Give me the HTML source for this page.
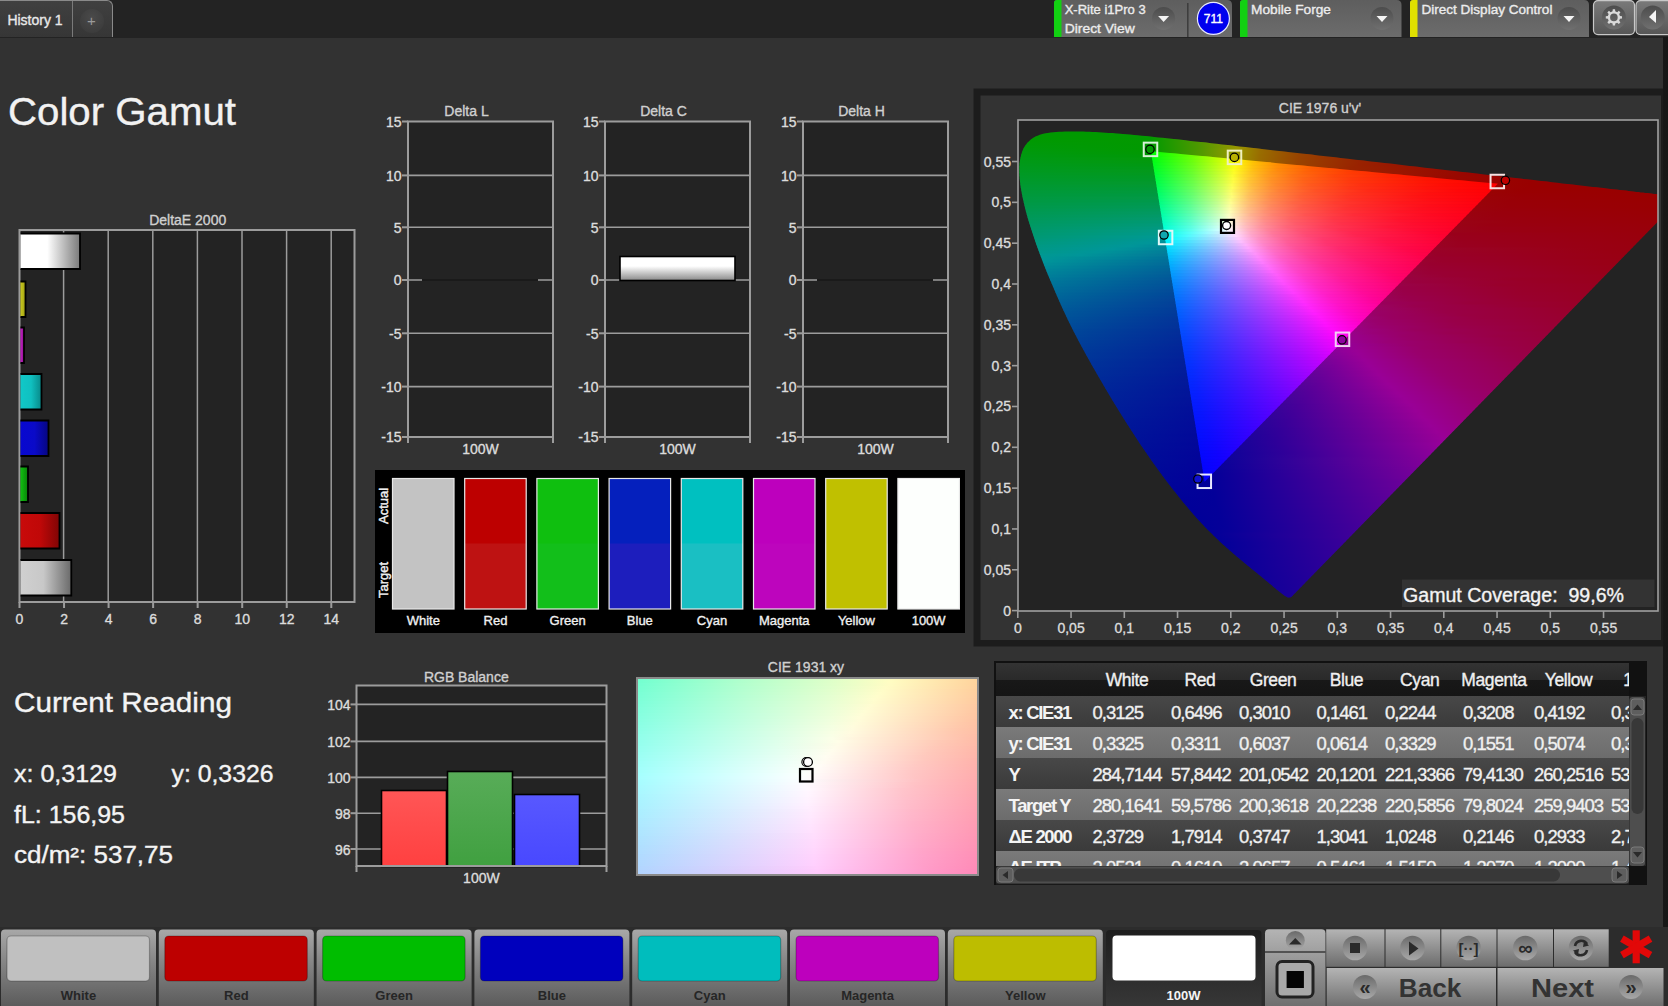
<!DOCTYPE html><html><head><meta charset="utf-8"><style>
html,body{margin:0;padding:0;}
body{width:1668px;height:1006px;overflow:hidden;background:#323232;position:relative;font-family:'Liberation Sans',sans-serif;}
.a{position:absolute;}
.t{position:absolute;white-space:nowrap;}
svg.p{position:absolute;left:0;top:0;}
svg text{font-family:'Liberation Sans',sans-serif;}
</style></head><body>
<div class="a" style="left:0;top:0;width:1668px;height:38px;background:#232323;"></div>
<div class="a" style="left:0;top:0;width:112px;height:36px;background:linear-gradient(#404040,#363636);border-top:1px solid #8a8a8a;border-right:1px solid #8a8a8a;border-radius:0 6px 0 0;"></div>
<div class="a" style="left:72px;top:1px;width:1px;height:36px;background:#7a7a7a;"></div>
<div class="a" style="left:80px;top:9px;width:24px;height:24px;border-radius:50%;background:radial-gradient(circle at 50% 35%,#4a4a4a,#383838);"></div>
<div class="a" style="left:1663px;top:37px;width:5px;height:969px;background:#1c1c1c;"></div>
<svg class="p" width="1668" height="1006"><text x="7.4" y="25.1" font-size="14" fill="#e8e8e8" text-anchor="start" font-weight="normal" stroke="#e8e8e8" stroke-width="0.35" >History 1</text>
<text x="91.5" y="26" font-size="15" fill="#9a9a9a" text-anchor="middle">+</text>
<text x="8" y="125" font-size="38" fill="#f2f2f2" text-anchor="start" font-weight="normal" stroke="#f2f2f2" stroke-width="0.35" textLength="228" lengthAdjust="spacingAndGlyphs">Color Gamut</text>
<rect x="19.5" y="230" width="335.0" height="372" fill="#232323" />
<line x1="63.6" y1="230" x2="63.6" y2="602" stroke="#9c9c9c" stroke-width="1.5" />
<line x1="108.2" y1="230" x2="108.2" y2="602" stroke="#9c9c9c" stroke-width="1.5" />
<line x1="152.8" y1="230" x2="152.8" y2="602" stroke="#9c9c9c" stroke-width="1.5" />
<line x1="197.4" y1="230" x2="197.4" y2="602" stroke="#9c9c9c" stroke-width="1.5" />
<line x1="242.0" y1="230" x2="242.0" y2="602" stroke="#9c9c9c" stroke-width="1.5" />
<line x1="286.6" y1="230" x2="286.6" y2="602" stroke="#9c9c9c" stroke-width="1.5" />
<line x1="331.2" y1="230" x2="331.2" y2="602" stroke="#9c9c9c" stroke-width="1.5" />
<rect x="19.5" y="230" width="335.0" height="372" fill="none" stroke="#9c9c9c" stroke-width="2"/>
<line x1="19.5" y1="602" x2="19.5" y2="608" stroke="#9c9c9c" stroke-width="2" />
<text x="19.5" y="624" font-size="14" fill="#dcdcdc" text-anchor="middle" font-weight="normal" stroke="#dcdcdc" stroke-width="0.35" >0</text>
<line x1="64.03999999999999" y1="602" x2="64.03999999999999" y2="608" stroke="#9c9c9c" stroke-width="2" />
<text x="64.03999999999999" y="624" font-size="14" fill="#dcdcdc" text-anchor="middle" font-weight="normal" stroke="#dcdcdc" stroke-width="0.35" >2</text>
<line x1="108.58" y1="602" x2="108.58" y2="608" stroke="#9c9c9c" stroke-width="2" />
<text x="108.58" y="624" font-size="14" fill="#dcdcdc" text-anchor="middle" font-weight="normal" stroke="#dcdcdc" stroke-width="0.35" >4</text>
<line x1="153.12" y1="602" x2="153.12" y2="608" stroke="#9c9c9c" stroke-width="2" />
<text x="153.12" y="624" font-size="14" fill="#dcdcdc" text-anchor="middle" font-weight="normal" stroke="#dcdcdc" stroke-width="0.35" >6</text>
<line x1="197.66" y1="602" x2="197.66" y2="608" stroke="#9c9c9c" stroke-width="2" />
<text x="197.66" y="624" font-size="14" fill="#dcdcdc" text-anchor="middle" font-weight="normal" stroke="#dcdcdc" stroke-width="0.35" >8</text>
<line x1="242.2" y1="602" x2="242.2" y2="608" stroke="#9c9c9c" stroke-width="2" />
<text x="242.2" y="624" font-size="14" fill="#dcdcdc" text-anchor="middle" font-weight="normal" stroke="#dcdcdc" stroke-width="0.35" >10</text>
<line x1="286.74" y1="602" x2="286.74" y2="608" stroke="#9c9c9c" stroke-width="2" />
<text x="286.74" y="624" font-size="14" fill="#dcdcdc" text-anchor="middle" font-weight="normal" stroke="#dcdcdc" stroke-width="0.35" >12</text>
<line x1="331.28" y1="602" x2="331.28" y2="608" stroke="#9c9c9c" stroke-width="2" />
<text x="331.28" y="624" font-size="14" fill="#dcdcdc" text-anchor="middle" font-weight="normal" stroke="#dcdcdc" stroke-width="0.35" >14</text>
<text x="187.7" y="225" font-size="14" fill="#d0d0d0" text-anchor="middle" font-weight="normal" stroke="#d0d0d0" stroke-width="0.35" >DeltaE 2000</text>
<defs>
<linearGradient id="gw" x1="0" x2="1" y1="0" y2="0"><stop offset="0" stop-color="#ffffff"/><stop offset="0.45" stop-color="#ffffff"/><stop offset="1" stop-color="#7a7a7a"/></linearGradient>
<linearGradient id="gg" x1="0" x2="1" y1="0" y2="0"><stop offset="0" stop-color="#d0d0d0"/><stop offset="0.45" stop-color="#c8c8c8"/><stop offset="1" stop-color="#6a6a6a"/></linearGradient>
<linearGradient id="gy" x1="0" x2="1"><stop offset="0" stop-color="#c8c820"/><stop offset="1" stop-color="#a0a010"/></linearGradient>
<linearGradient id="gm" x1="0" x2="1"><stop offset="0" stop-color="#c020c0"/><stop offset="1" stop-color="#901090"/></linearGradient>
<linearGradient id="gc" x1="0" x2="1"><stop offset="0" stop-color="#10c8c8"/><stop offset="0.5" stop-color="#10c0c0"/><stop offset="1" stop-color="#088888"/></linearGradient>
<linearGradient id="gb" x1="0" x2="1"><stop offset="0" stop-color="#0808d0"/><stop offset="0.5" stop-color="#0a0ac8"/><stop offset="1" stop-color="#060680"/></linearGradient>
<linearGradient id="ggr" x1="0" x2="1"><stop offset="0" stop-color="#10c010"/><stop offset="1" stop-color="#0a800a"/></linearGradient>
<linearGradient id="gr" x1="0" x2="1"><stop offset="0" stop-color="#c80a0a"/><stop offset="0.5" stop-color="#c00808"/><stop offset="1" stop-color="#800505"/></linearGradient>
<linearGradient id="gdc" x1="0" x2="0" y1="0" y2="1"><stop offset="0" stop-color="#ffffff"/><stop offset="0.4" stop-color="#ffffff"/><stop offset="1" stop-color="#8a8a8a"/></linearGradient>
</defs>
<rect x="20.5" y="233.5" width="59.5" height="35.5" fill="url(#gw)"/>
<path d="M20.5 233.5 L80 233.5 L80 269.0 L20.5 269.0" fill="none" stroke="#000" stroke-width="1.8"/>
<rect x="20.5" y="281.5" width="5.0" height="35.5" fill="url(#gy)"/>
<path d="M20.5 281.5 L25.5 281.5 L25.5 317.0 L20.5 317.0" fill="none" stroke="#000" stroke-width="1.8"/>
<rect x="20.5" y="327.5" width="3.5" height="35.5" fill="url(#gm)"/>
<path d="M20.5 327.5 L24 327.5 L24 363.0 L20.5 363.0" fill="none" stroke="#000" stroke-width="1.8"/>
<rect x="20.5" y="374" width="21.0" height="35.5" fill="url(#gc)"/>
<path d="M20.5 374 L41.5 374 L41.5 409.5 L20.5 409.5" fill="none" stroke="#000" stroke-width="1.8"/>
<rect x="20.5" y="420.5" width="28.0" height="35.5" fill="url(#gb)"/>
<path d="M20.5 420.5 L48.5 420.5 L48.5 456.0 L20.5 456.0" fill="none" stroke="#000" stroke-width="1.8"/>
<rect x="20.5" y="466.5" width="7.5" height="35.5" fill="url(#ggr)"/>
<path d="M20.5 466.5 L28 466.5 L28 502.0 L20.5 502.0" fill="none" stroke="#000" stroke-width="1.8"/>
<rect x="20.5" y="513" width="39.0" height="35.5" fill="url(#gr)"/>
<path d="M20.5 513 L59.5 513 L59.5 548.5 L20.5 548.5" fill="none" stroke="#000" stroke-width="1.8"/>
<rect x="20.5" y="560" width="50.8" height="35.5" fill="url(#gg)"/>
<path d="M20.5 560 L71.3 560 L71.3 595.5 L20.5 595.5" fill="none" stroke="#000" stroke-width="1.8"/>
<rect x="408" y="121.5" width="145" height="315.5" fill="#232323" />
<line x1="402" y1="121.5" x2="408" y2="121.5" stroke="#9c9c9c" stroke-width="2" />
<text x="401.5" y="126.8" font-size="14" fill="#dcdcdc" text-anchor="end" font-weight="normal" stroke="#dcdcdc" stroke-width="0.35" >15</text>
<line x1="408" y1="175.4" x2="553" y2="175.4" stroke="#9c9c9c" stroke-width="1.6" />
<line x1="402" y1="175.4" x2="408" y2="175.4" stroke="#9c9c9c" stroke-width="2" />
<text x="401.5" y="180.70000000000002" font-size="14" fill="#dcdcdc" text-anchor="end" font-weight="normal" stroke="#dcdcdc" stroke-width="0.35" >10</text>
<line x1="408" y1="227.3" x2="553" y2="227.3" stroke="#9c9c9c" stroke-width="1.6" />
<line x1="402" y1="227.3" x2="408" y2="227.3" stroke="#9c9c9c" stroke-width="2" />
<text x="401.5" y="232.60000000000002" font-size="14" fill="#dcdcdc" text-anchor="end" font-weight="normal" stroke="#dcdcdc" stroke-width="0.35" >5</text>
<line x1="408" y1="280.0" x2="553" y2="280.0" stroke="#9c9c9c" stroke-width="1.6" />
<line x1="402" y1="280.0" x2="408" y2="280.0" stroke="#9c9c9c" stroke-width="2" />
<text x="401.5" y="285.3" font-size="14" fill="#dcdcdc" text-anchor="end" font-weight="normal" stroke="#dcdcdc" stroke-width="0.35" >0</text>
<line x1="408" y1="333.3" x2="553" y2="333.3" stroke="#9c9c9c" stroke-width="1.6" />
<line x1="402" y1="333.3" x2="408" y2="333.3" stroke="#9c9c9c" stroke-width="2" />
<text x="401.5" y="338.6" font-size="14" fill="#dcdcdc" text-anchor="end" font-weight="normal" stroke="#dcdcdc" stroke-width="0.35" >-5</text>
<line x1="408" y1="386.6" x2="553" y2="386.6" stroke="#9c9c9c" stroke-width="1.6" />
<line x1="402" y1="386.6" x2="408" y2="386.6" stroke="#9c9c9c" stroke-width="2" />
<text x="401.5" y="391.90000000000003" font-size="14" fill="#dcdcdc" text-anchor="end" font-weight="normal" stroke="#dcdcdc" stroke-width="0.35" >-10</text>
<line x1="402" y1="437" x2="408" y2="437" stroke="#9c9c9c" stroke-width="2" />
<text x="401.5" y="442.3" font-size="14" fill="#dcdcdc" text-anchor="end" font-weight="normal" stroke="#dcdcdc" stroke-width="0.35" >-15</text>
<rect x="408" y="121.5" width="145" height="315.5" fill="none" stroke="#9c9c9c" stroke-width="2"/>
<line x1="408" y1="437" x2="408" y2="443" stroke="#9c9c9c" stroke-width="2" />
<line x1="553" y1="437" x2="553" y2="443" stroke="#9c9c9c" stroke-width="2" />
<text x="480.5" y="454" font-size="14" fill="#dcdcdc" text-anchor="middle" font-weight="normal" stroke="#dcdcdc" stroke-width="0.35" >100W</text>
<text x="466.5" y="116" font-size="14" fill="#d0d0d0" text-anchor="middle" font-weight="normal" stroke="#d0d0d0" stroke-width="0.35" >Delta L</text>
<line x1="422" y1="280.0" x2="538" y2="280.0" stroke="#1a1a1a" stroke-width="2" />
<rect x="605" y="121.5" width="145" height="315.5" fill="#232323" />
<line x1="599" y1="121.5" x2="605" y2="121.5" stroke="#9c9c9c" stroke-width="2" />
<text x="598.5" y="126.8" font-size="14" fill="#dcdcdc" text-anchor="end" font-weight="normal" stroke="#dcdcdc" stroke-width="0.35" >15</text>
<line x1="605" y1="175.4" x2="750" y2="175.4" stroke="#9c9c9c" stroke-width="1.6" />
<line x1="599" y1="175.4" x2="605" y2="175.4" stroke="#9c9c9c" stroke-width="2" />
<text x="598.5" y="180.70000000000002" font-size="14" fill="#dcdcdc" text-anchor="end" font-weight="normal" stroke="#dcdcdc" stroke-width="0.35" >10</text>
<line x1="605" y1="227.3" x2="750" y2="227.3" stroke="#9c9c9c" stroke-width="1.6" />
<line x1="599" y1="227.3" x2="605" y2="227.3" stroke="#9c9c9c" stroke-width="2" />
<text x="598.5" y="232.60000000000002" font-size="14" fill="#dcdcdc" text-anchor="end" font-weight="normal" stroke="#dcdcdc" stroke-width="0.35" >5</text>
<line x1="605" y1="280.0" x2="750" y2="280.0" stroke="#9c9c9c" stroke-width="1.6" />
<line x1="599" y1="280.0" x2="605" y2="280.0" stroke="#9c9c9c" stroke-width="2" />
<text x="598.5" y="285.3" font-size="14" fill="#dcdcdc" text-anchor="end" font-weight="normal" stroke="#dcdcdc" stroke-width="0.35" >0</text>
<line x1="605" y1="333.3" x2="750" y2="333.3" stroke="#9c9c9c" stroke-width="1.6" />
<line x1="599" y1="333.3" x2="605" y2="333.3" stroke="#9c9c9c" stroke-width="2" />
<text x="598.5" y="338.6" font-size="14" fill="#dcdcdc" text-anchor="end" font-weight="normal" stroke="#dcdcdc" stroke-width="0.35" >-5</text>
<line x1="605" y1="386.6" x2="750" y2="386.6" stroke="#9c9c9c" stroke-width="1.6" />
<line x1="599" y1="386.6" x2="605" y2="386.6" stroke="#9c9c9c" stroke-width="2" />
<text x="598.5" y="391.90000000000003" font-size="14" fill="#dcdcdc" text-anchor="end" font-weight="normal" stroke="#dcdcdc" stroke-width="0.35" >-10</text>
<line x1="599" y1="437" x2="605" y2="437" stroke="#9c9c9c" stroke-width="2" />
<text x="598.5" y="442.3" font-size="14" fill="#dcdcdc" text-anchor="end" font-weight="normal" stroke="#dcdcdc" stroke-width="0.35" >-15</text>
<rect x="605" y="121.5" width="145" height="315.5" fill="none" stroke="#9c9c9c" stroke-width="2"/>
<line x1="605" y1="437" x2="605" y2="443" stroke="#9c9c9c" stroke-width="2" />
<line x1="750" y1="437" x2="750" y2="443" stroke="#9c9c9c" stroke-width="2" />
<text x="677.5" y="454" font-size="14" fill="#dcdcdc" text-anchor="middle" font-weight="normal" stroke="#dcdcdc" stroke-width="0.35" >100W</text>
<text x="663.5" y="116" font-size="14" fill="#d0d0d0" text-anchor="middle" font-weight="normal" stroke="#d0d0d0" stroke-width="0.35" >Delta C</text>
<rect x="620" y="256.5" width="115" height="24" fill="url(#gdc)" stroke="#000" stroke-width="1.6"/>
<rect x="803" y="121.5" width="145" height="315.5" fill="#232323" />
<line x1="797" y1="121.5" x2="803" y2="121.5" stroke="#9c9c9c" stroke-width="2" />
<text x="796.5" y="126.8" font-size="14" fill="#dcdcdc" text-anchor="end" font-weight="normal" stroke="#dcdcdc" stroke-width="0.35" >15</text>
<line x1="803" y1="175.4" x2="948" y2="175.4" stroke="#9c9c9c" stroke-width="1.6" />
<line x1="797" y1="175.4" x2="803" y2="175.4" stroke="#9c9c9c" stroke-width="2" />
<text x="796.5" y="180.70000000000002" font-size="14" fill="#dcdcdc" text-anchor="end" font-weight="normal" stroke="#dcdcdc" stroke-width="0.35" >10</text>
<line x1="803" y1="227.3" x2="948" y2="227.3" stroke="#9c9c9c" stroke-width="1.6" />
<line x1="797" y1="227.3" x2="803" y2="227.3" stroke="#9c9c9c" stroke-width="2" />
<text x="796.5" y="232.60000000000002" font-size="14" fill="#dcdcdc" text-anchor="end" font-weight="normal" stroke="#dcdcdc" stroke-width="0.35" >5</text>
<line x1="803" y1="280.0" x2="948" y2="280.0" stroke="#9c9c9c" stroke-width="1.6" />
<line x1="797" y1="280.0" x2="803" y2="280.0" stroke="#9c9c9c" stroke-width="2" />
<text x="796.5" y="285.3" font-size="14" fill="#dcdcdc" text-anchor="end" font-weight="normal" stroke="#dcdcdc" stroke-width="0.35" >0</text>
<line x1="803" y1="333.3" x2="948" y2="333.3" stroke="#9c9c9c" stroke-width="1.6" />
<line x1="797" y1="333.3" x2="803" y2="333.3" stroke="#9c9c9c" stroke-width="2" />
<text x="796.5" y="338.6" font-size="14" fill="#dcdcdc" text-anchor="end" font-weight="normal" stroke="#dcdcdc" stroke-width="0.35" >-5</text>
<line x1="803" y1="386.6" x2="948" y2="386.6" stroke="#9c9c9c" stroke-width="1.6" />
<line x1="797" y1="386.6" x2="803" y2="386.6" stroke="#9c9c9c" stroke-width="2" />
<text x="796.5" y="391.90000000000003" font-size="14" fill="#dcdcdc" text-anchor="end" font-weight="normal" stroke="#dcdcdc" stroke-width="0.35" >-10</text>
<line x1="797" y1="437" x2="803" y2="437" stroke="#9c9c9c" stroke-width="2" />
<text x="796.5" y="442.3" font-size="14" fill="#dcdcdc" text-anchor="end" font-weight="normal" stroke="#dcdcdc" stroke-width="0.35" >-15</text>
<rect x="803" y="121.5" width="145" height="315.5" fill="none" stroke="#9c9c9c" stroke-width="2"/>
<line x1="803" y1="437" x2="803" y2="443" stroke="#9c9c9c" stroke-width="2" />
<line x1="948" y1="437" x2="948" y2="443" stroke="#9c9c9c" stroke-width="2" />
<text x="875.5" y="454" font-size="14" fill="#dcdcdc" text-anchor="middle" font-weight="normal" stroke="#dcdcdc" stroke-width="0.35" >100W</text>
<text x="861.5" y="116" font-size="14" fill="#d0d0d0" text-anchor="middle" font-weight="normal" stroke="#d0d0d0" stroke-width="0.35" >Delta H</text>
<line x1="817" y1="280.0" x2="933" y2="280.0" stroke="#1a1a1a" stroke-width="2" />
<rect x="375" y="470" width="590" height="163" fill="#000000" />
<rect x="392.5" y="478.5" width="61.5" height="130.5" fill="#c3c3c3" />
<rect x="392.5" y="543.5" width="61.5" height="65.5" fill="#c3c3c3" />
<rect x="392.5" y="478.5" width="61.5" height="130.5" fill="none" stroke="#e8e8e8" stroke-width="1.2"/>
<text x="423.25" y="625" font-size="13" fill="#f0f0f0" text-anchor="middle" font-weight="normal" stroke="#f0f0f0" stroke-width="0.35" >White</text>
<rect x="464.7" y="478.5" width="61.5" height="130.5" fill="#bd0000" />
<rect x="464.7" y="543.5" width="61.5" height="65.5" fill="#be1212" />
<rect x="464.7" y="478.5" width="61.5" height="130.5" fill="none" stroke="#e8e8e8" stroke-width="1.2"/>
<text x="495.45" y="625" font-size="13" fill="#f0f0f0" text-anchor="middle" font-weight="normal" stroke="#f0f0f0" stroke-width="0.35" >Red</text>
<rect x="536.9" y="478.5" width="61.5" height="130.5" fill="#0fbf0f" />
<rect x="536.9" y="543.5" width="61.5" height="65.5" fill="#12bf1a" />
<rect x="536.9" y="478.5" width="61.5" height="130.5" fill="none" stroke="#e8e8e8" stroke-width="1.2"/>
<text x="567.65" y="625" font-size="13" fill="#f0f0f0" text-anchor="middle" font-weight="normal" stroke="#f0f0f0" stroke-width="0.35" >Green</text>
<rect x="609.1" y="478.5" width="61.5" height="130.5" fill="#0520bd" />
<rect x="609.1" y="543.5" width="61.5" height="65.5" fill="#1d1ebd" />
<rect x="609.1" y="478.5" width="61.5" height="130.5" fill="none" stroke="#e8e8e8" stroke-width="1.2"/>
<text x="639.85" y="625" font-size="13" fill="#f0f0f0" text-anchor="middle" font-weight="normal" stroke="#f0f0f0" stroke-width="0.35" >Blue</text>
<rect x="681.3" y="478.5" width="61.5" height="130.5" fill="#00c0c0" />
<rect x="681.3" y="543.5" width="61.5" height="65.5" fill="#1abfc3" />
<rect x="681.3" y="478.5" width="61.5" height="130.5" fill="none" stroke="#e8e8e8" stroke-width="1.2"/>
<text x="712.05" y="625" font-size="13" fill="#f0f0f0" text-anchor="middle" font-weight="normal" stroke="#f0f0f0" stroke-width="0.35" >Cyan</text>
<rect x="753.5" y="478.5" width="61.5" height="130.5" fill="#bd00bd" />
<rect x="753.5" y="543.5" width="61.5" height="65.5" fill="#bd05bd" />
<rect x="753.5" y="478.5" width="61.5" height="130.5" fill="none" stroke="#e8e8e8" stroke-width="1.2"/>
<text x="784.25" y="625" font-size="13" fill="#f0f0f0" text-anchor="middle" font-weight="normal" stroke="#f0f0f0" stroke-width="0.35" >Magenta</text>
<rect x="825.7" y="478.5" width="61.5" height="130.5" fill="#c0c000" />
<rect x="825.7" y="543.5" width="61.5" height="65.5" fill="#c0c000" />
<rect x="825.7" y="478.5" width="61.5" height="130.5" fill="none" stroke="#e8e8e8" stroke-width="1.2"/>
<text x="856.45" y="625" font-size="13" fill="#f0f0f0" text-anchor="middle" font-weight="normal" stroke="#f0f0f0" stroke-width="0.35" >Yellow</text>
<rect x="897.9000000000001" y="478.5" width="61.5" height="130.5" fill="#fdfffd" />
<rect x="897.9000000000001" y="543.5" width="61.5" height="65.5" fill="#fdfffd" />
<rect x="897.9000000000001" y="478.5" width="61.5" height="130.5" fill="none" stroke="#e8e8e8" stroke-width="1.2"/>
<text x="928.6500000000001" y="625" font-size="13" fill="#f0f0f0" text-anchor="middle" font-weight="normal" stroke="#f0f0f0" stroke-width="0.35" >100W</text>
<text transform="translate(388,524) rotate(-90)" font-size="13" fill="#f0f0f0" stroke="#f0f0f0" stroke-width="0.4">Actual</text>
<text transform="translate(388,598) rotate(-90)" font-size="13" fill="#f0f0f0" stroke="#f0f0f0" stroke-width="0.4">Target</text>
<rect x="973.5" y="88.5" width="694.5" height="558" fill="#1c1c1c" />
<rect x="980.5" y="95.5" width="680.5" height="544.5" fill="#333333" />
<rect x="1018" y="120" width="640" height="491" fill="#232323" />
<defs><clipPath id="cpl"><path d="M1291.3,597.1 L1291.3,597.0 L1291.2,597.0 L1291.2,597.0 L1291.2,597.0 L1291.1,597.1 L1291.1,597.1 L1291.0,597.2 L1291.0,597.2 L1290.9,597.3 L1290.9,597.3 L1290.8,597.3 L1290.8,597.3 L1290.7,597.3 L1290.6,597.3 L1290.5,597.3 L1290.5,597.4 L1290.4,597.4 L1290.3,597.5 L1290.2,597.5 L1290.1,597.6 L1290.0,597.6 L1289.9,597.6 L1289.8,597.6 L1289.7,597.6 L1289.6,597.6 L1289.5,597.6 L1289.3,597.6 L1289.2,597.6 L1289.0,597.6 L1288.9,597.6 L1288.7,597.6 L1288.6,597.6 L1288.4,597.7 L1288.2,597.7 L1288.0,597.6 L1287.7,597.5 L1287.5,597.4 L1287.2,597.2 L1286.8,597.1 L1286.4,596.8 L1285.9,596.5 L1285.4,596.2 L1284.9,595.8 L1284.3,595.4 L1283.6,595.0 L1283.0,594.5 L1282.3,594.0 L1281.6,593.4 L1280.8,592.8 L1279.9,592.1 L1279.0,591.4 L1278.0,590.6 L1276.9,589.7 L1275.7,588.8 L1274.5,587.8 L1273.3,586.7 L1272.0,585.6 L1270.7,584.5 L1269.2,583.3 L1267.7,582.0 L1266.2,580.7 L1264.6,579.4 L1262.9,578.0 L1261.1,576.5 L1259.2,574.9 L1257.1,573.3 L1255.0,571.5 L1252.7,569.7 L1250.3,567.7 L1247.9,565.7 L1245.4,563.7 L1242.8,561.5 L1240.1,559.3 L1237.3,557.0 L1234.4,554.4 L1231.3,551.8 L1228.1,549.0 L1224.8,546.0 L1221.3,542.9 L1217.7,539.5 L1214.0,535.9 L1210.3,532.3 L1206.4,528.4 L1202.2,524.1 L1197.7,519.2 L1192.9,513.8 L1187.8,507.8 L1182.5,501.5 L1177.0,494.6 L1171.2,487.3 L1165.3,479.5 L1159.2,471.2 L1152.9,462.5 L1146.5,453.3 L1139.9,443.7 L1133.3,433.6 L1126.5,423.0 L1119.6,412.0 L1112.7,400.8 L1106.0,389.5 L1099.3,378.0 L1092.5,366.2 L1085.8,354.3 L1079.4,342.5 L1073.3,330.8 L1067.6,319.2 L1062.2,307.7 L1057.1,296.2 L1052.3,285.1 L1047.8,274.5 L1043.7,264.2 L1039.9,254.2 L1036.4,244.7 L1033.3,235.5 L1030.5,227.0 L1028.0,219.0 L1025.9,211.5 L1024.2,204.4 L1022.7,197.9 L1021.5,191.7 L1020.5,186.0 L1019.9,180.7 L1019.5,175.9 L1019.3,171.4 L1019.3,167.1 L1019.6,163.1 L1020.1,159.5 L1020.8,156.2 L1021.7,153.1 L1022.7,150.2 L1024.0,147.6 L1025.5,145.2 L1027.2,143.1 L1029.0,141.2 L1030.9,139.5 L1032.9,138.0 L1035.1,136.8 L1037.5,135.7 L1039.9,134.8 L1042.4,134.0 L1045.0,133.4 L1047.7,132.9 L1050.5,132.5 L1053.3,132.3 L1056.1,132.0 L1059.1,131.8 L1062.0,131.7 L1065.1,131.6 L1068.1,131.5 L1071.1,131.5 L1074.1,131.5 L1077.1,131.5 L1080.2,131.6 L1083.2,131.6 L1086.3,131.7 L1089.4,131.8 L1092.6,131.9 L1095.7,132.1 L1098.9,132.3 L1102.2,132.4 L1105.5,132.7 L1108.8,132.9 L1112.3,133.1 L1115.7,133.4 L1119.3,133.7 L1122.9,134.0 L1126.5,134.3 L1130.2,134.6 L1134.0,135.0 L1137.8,135.3 L1141.8,135.7 L1145.7,136.1 L1149.8,136.5 L1154.0,137.0 L1158.2,137.4 L1162.6,137.8 L1167.0,138.3 L1171.5,138.8 L1176.1,139.3 L1180.9,139.8 L1185.7,140.3 L1190.6,140.9 L1195.6,141.4 L1200.7,142.0 L1205.9,142.6 L1211.2,143.2 L1216.6,143.8 L1222.2,144.4 L1227.8,145.1 L1233.6,145.7 L1239.4,146.4 L1245.4,147.1 L1251.5,147.8 L1257.7,148.5 L1264.0,149.2 L1270.4,149.9 L1277.0,150.7 L1283.6,151.4 L1290.3,152.2 L1297.2,153.0 L1304.2,153.8 L1311.2,154.6 L1318.4,155.4 L1325.7,156.3 L1333.0,157.1 L1340.4,158.0 L1347.9,158.8 L1355.6,159.7 L1363.2,160.6 L1370.9,161.4 L1378.6,162.3 L1386.4,163.2 L1394.3,164.1 L1402.1,165.0 L1409.8,165.9 L1417.4,166.8 L1425.0,167.7 L1432.5,168.5 L1440.0,169.4 L1447.5,170.2 L1455.0,171.1 L1462.4,171.9 L1469.8,172.8 L1477.1,173.6 L1484.2,174.4 L1491.1,175.2 L1497.9,176.0 L1504.6,176.8 L1511.1,177.5 L1517.5,178.2 L1523.7,178.9 L1529.7,179.6 L1535.6,180.3 L1541.3,181.0 L1546.9,181.6 L1552.2,182.2 L1557.4,182.8 L1562.4,183.4 L1567.2,183.9 L1571.9,184.5 L1576.4,185.0 L1580.7,185.5 L1584.9,186.0 L1588.9,186.4 L1592.8,186.9 L1596.6,187.3 L1600.2,187.7 L1603.7,188.1 L1607.1,188.5 L1610.5,188.9 L1613.7,189.3 L1616.9,189.6 L1619.9,190.0 L1622.9,190.3 L1625.8,190.6 L1628.6,191.0 L1631.3,191.3 L1633.8,191.6 L1636.3,191.9 L1638.7,192.1 L1641.0,192.4 L1643.2,192.6 L1645.3,192.9 L1647.3,193.1 L1649.2,193.3 L1650.9,193.5 L1652.5,193.7 L1654.0,193.9 L1655.6,194.0 L1657.3,194.2 L1659.4,194.5 L1661.6,194.7 L1663.9,195.0 L1666.2,195.3 L1668.4,195.5 L1670.5,195.8 L1672.6,196.0 L1674.6,196.2 L1676.5,196.4 L1678.0,196.6 L1679.2,196.8 L1680.1,196.9 L1680.8,196.9 L1681.3,197.0 L1681.7,197.1 Z"/></clipPath><clipPath id="cpt"><path d="M1497.80,183.65 L1150.92,151.32 L1204.60,481.67 Z"/></clipPath><clipPath id="cpb"><rect x="1018" y="120" width="640" height="491"/></clipPath><linearGradient id="o0" gradientUnits="userSpaceOnUse" x1="1038.6" x2="1127.2" y1="0" y2="0"><stop offset="0.000" stop-color="#009900"/><stop offset="1.000" stop-color="#009900"/></linearGradient><linearGradient id="o1" gradientUnits="userSpaceOnUse" x1="1030.7" x2="1158.4" y1="0" y2="0"><stop offset="0.000" stop-color="#009900"/><stop offset="0.924" stop-color="#019900"/><stop offset="1.000" stop-color="#0e9900"/></linearGradient><linearGradient id="o2" gradientUnits="userSpaceOnUse" x1="1026.3" x2="1186.6" y1="0" y2="0"><stop offset="0.000" stop-color="#009900"/><stop offset="0.774" stop-color="#029900"/><stop offset="1.000" stop-color="#389900"/></linearGradient><linearGradient id="o3" gradientUnits="userSpaceOnUse" x1="1023.3" x2="1213.5" y1="0" y2="0"><stop offset="0.000" stop-color="#009902"/><stop offset="0.673" stop-color="#039900"/><stop offset="0.946" stop-color="#559900"/><stop offset="1.000" stop-color="#689900"/></linearGradient><linearGradient id="o4" gradientUnits="userSpaceOnUse" x1="1021.0" x2="1240.1" y1="0" y2="0"><stop offset="0.000" stop-color="#009905"/><stop offset="0.593" stop-color="#029900"/><stop offset="0.831" stop-color="#559900"/><stop offset="0.986" stop-color="#999800"/><stop offset="1.000" stop-color="#999100"/></linearGradient><linearGradient id="o5" gradientUnits="userSpaceOnUse" x1="1019.3" x2="1266.3" y1="0" y2="0"><stop offset="0.000" stop-color="#009908"/><stop offset="0.534" stop-color="#029900"/><stop offset="0.737" stop-color="#519900"/><stop offset="0.883" stop-color="#999600"/><stop offset="0.988" stop-color="#996a00"/><stop offset="1.000" stop-color="#996600"/></linearGradient><linearGradient id="o6" gradientUnits="userSpaceOnUse" x1="1018.1" x2="1292.5" y1="0" y2="0"><stop offset="0.000" stop-color="#00990b"/><stop offset="0.488" stop-color="#029900"/><stop offset="0.671" stop-color="#539900"/><stop offset="0.794" stop-color="#999900"/><stop offset="0.882" stop-color="#996d00"/><stop offset="1.000" stop-color="#994a00"/></linearGradient><linearGradient id="o7" gradientUnits="userSpaceOnUse" x1="1018.0" x2="1318.6" y1="0" y2="0"><stop offset="0.000" stop-color="#00990e"/><stop offset="0.446" stop-color="#019902"/><stop offset="0.612" stop-color="#539900"/><stop offset="0.725" stop-color="#999800"/><stop offset="0.805" stop-color="#996d00"/><stop offset="0.931" stop-color="#994500"/><stop offset="1.000" stop-color="#993700"/></linearGradient><linearGradient id="o8" gradientUnits="userSpaceOnUse" x1="1018.0" x2="1344.8" y1="0" y2="0"><stop offset="0.000" stop-color="#009911"/><stop offset="0.410" stop-color="#009906"/><stop offset="0.563" stop-color="#539900"/><stop offset="0.667" stop-color="#999700"/><stop offset="0.740" stop-color="#996c00"/><stop offset="0.857" stop-color="#994500"/><stop offset="1.000" stop-color="#992900"/></linearGradient><linearGradient id="o9" gradientUnits="userSpaceOnUse" x1="1018.0" x2="1371.1" y1="0" y2="0"><stop offset="0.000" stop-color="#009914"/><stop offset="0.385" stop-color="#03990a"/><stop offset="0.521" stop-color="#539905"/><stop offset="0.617" stop-color="#999700"/><stop offset="0.685" stop-color="#996b00"/><stop offset="0.793" stop-color="#994400"/><stop offset="0.969" stop-color="#992200"/><stop offset="1.000" stop-color="#991e00"/></linearGradient><linearGradient id="o10" gradientUnits="userSpaceOnUse" x1="1018.0" x2="1397.2" y1="0" y2="0"><stop offset="0.000" stop-color="#009917"/><stop offset="0.359" stop-color="#02990e"/><stop offset="0.485" stop-color="#529909"/><stop offset="0.575" stop-color="#999605"/><stop offset="0.638" stop-color="#996b01"/><stop offset="0.738" stop-color="#994300"/><stop offset="0.902" stop-color="#992200"/><stop offset="1.000" stop-color="#991600"/></linearGradient><linearGradient id="o11" gradientUnits="userSpaceOnUse" x1="1018.0" x2="1423.3" y1="0" y2="0"><stop offset="0.000" stop-color="#00991a"/><stop offset="0.336" stop-color="#019912"/><stop offset="0.454" stop-color="#52990e"/><stop offset="0.533" stop-color="#98990a"/><stop offset="0.597" stop-color="#996a05"/><stop offset="0.691" stop-color="#994300"/><stop offset="0.844" stop-color="#992100"/><stop offset="1.000" stop-color="#990f00"/></linearGradient><linearGradient id="o12" gradientUnits="userSpaceOnUse" x1="1018.0" x2="1449.5" y1="0" y2="0"><stop offset="0.000" stop-color="#00991d"/><stop offset="0.315" stop-color="#019917"/><stop offset="0.426" stop-color="#529913"/><stop offset="0.501" stop-color="#999910"/><stop offset="0.556" stop-color="#996c09"/><stop offset="0.640" stop-color="#994503"/><stop offset="0.774" stop-color="#992400"/><stop offset="1.000" stop-color="#990a00"/></linearGradient><linearGradient id="o13" gradientUnits="userSpaceOnUse" x1="1018.0" x2="1475.6" y1="0" y2="0"><stop offset="0.000" stop-color="#009920"/><stop offset="0.302" stop-color="#03991b"/><stop offset="0.402" stop-color="#529918"/><stop offset="0.472" stop-color="#999915"/><stop offset="0.524" stop-color="#996b0d"/><stop offset="0.603" stop-color="#994406"/><stop offset="0.730" stop-color="#992301"/><stop offset="0.961" stop-color="#990800"/><stop offset="1.000" stop-color="#990500"/></linearGradient><linearGradient id="o14" gradientUnits="userSpaceOnUse" x1="1018.0" x2="1502.0" y1="0" y2="0"><stop offset="0.000" stop-color="#009924"/><stop offset="0.285" stop-color="#02991f"/><stop offset="0.380" stop-color="#52991d"/><stop offset="0.446" stop-color="#99981b"/><stop offset="0.496" stop-color="#996a12"/><stop offset="0.570" stop-color="#99440a"/><stop offset="0.694" stop-color="#992203"/><stop offset="0.917" stop-color="#990700"/><stop offset="1.000" stop-color="#990100"/></linearGradient><linearGradient id="o15" gradientUnits="userSpaceOnUse" x1="1018.0" x2="1528.3" y1="0" y2="0"><stop offset="0.000" stop-color="#009927"/><stop offset="0.270" stop-color="#019924"/><stop offset="0.361" stop-color="#529922"/><stop offset="0.423" stop-color="#999720"/><stop offset="0.466" stop-color="#996d17"/><stop offset="0.533" stop-color="#99460d"/><stop offset="0.643" stop-color="#992506"/><stop offset="0.843" stop-color="#990900"/><stop offset="1.000" stop-color="#990000"/></linearGradient><linearGradient id="o16" gradientUnits="userSpaceOnUse" x1="1018.0" x2="1554.4" y1="0" y2="0"><stop offset="0.000" stop-color="#00992a"/><stop offset="0.257" stop-color="#019928"/><stop offset="0.343" stop-color="#529928"/><stop offset="0.403" stop-color="#999726"/><stop offset="0.444" stop-color="#996c1b"/><stop offset="0.507" stop-color="#994511"/><stop offset="0.612" stop-color="#992408"/><stop offset="0.802" stop-color="#990800"/><stop offset="0.958" stop-color="#990000"/><stop offset="1.000" stop-color="#990000"/></linearGradient><linearGradient id="o17" gradientUnits="userSpaceOnUse" x1="1018.0" x2="1580.5" y1="0" y2="0"><stop offset="0.000" stop-color="#00992d"/><stop offset="0.249" stop-color="#03992d"/><stop offset="0.327" stop-color="#52992d"/><stop offset="0.384" stop-color="#99962c"/><stop offset="0.423" stop-color="#996b1f"/><stop offset="0.484" stop-color="#994514"/><stop offset="0.583" stop-color="#99230a"/><stop offset="0.764" stop-color="#990802"/><stop offset="0.910" stop-color="#990000"/><stop offset="1.000" stop-color="#990000"/></linearGradient><linearGradient id="o18" gradientUnits="userSpaceOnUse" x1="1018.0" x2="1606.8" y1="0" y2="0"><stop offset="0.000" stop-color="#009931"/><stop offset="0.238" stop-color="#029932"/><stop offset="0.313" stop-color="#529932"/><stop offset="0.363" stop-color="#989933"/><stop offset="0.404" stop-color="#996a24"/><stop offset="0.462" stop-color="#994417"/><stop offset="0.557" stop-color="#99230c"/><stop offset="0.730" stop-color="#990703"/><stop offset="0.870" stop-color="#990000"/><stop offset="1.000" stop-color="#990000"/></linearGradient><linearGradient id="o19" gradientUnits="userSpaceOnUse" x1="1018.0" x2="1632.8" y1="0" y2="0"><stop offset="0.000" stop-color="#009934"/><stop offset="0.228" stop-color="#019937"/><stop offset="0.299" stop-color="#529938"/><stop offset="0.348" stop-color="#989939"/><stop offset="0.384" stop-color="#996d29"/><stop offset="0.439" stop-color="#99451b"/><stop offset="0.527" stop-color="#99240f"/><stop offset="0.686" stop-color="#990805"/><stop offset="0.820" stop-color="#990001"/><stop offset="1.000" stop-color="#990000"/></linearGradient><linearGradient id="o20" gradientUnits="userSpaceOnUse" x1="1018.0" x2="1658.0" y1="0" y2="0"><stop offset="0.000" stop-color="#009938"/><stop offset="0.219" stop-color="#01993c"/><stop offset="0.287" stop-color="#52993e"/><stop offset="0.334" stop-color="#999940"/><stop offset="0.369" stop-color="#996c2e"/><stop offset="0.422" stop-color="#99441f"/><stop offset="0.506" stop-color="#992312"/><stop offset="0.659" stop-color="#990807"/><stop offset="0.784" stop-color="#990002"/><stop offset="1.000" stop-color="#990000"/></linearGradient><linearGradient id="o21" gradientUnits="userSpaceOnUse" x1="1018.0" x2="1658.0" y1="0" y2="0"><stop offset="0.000" stop-color="#00993b"/><stop offset="0.219" stop-color="#009941"/><stop offset="0.287" stop-color="#529944"/><stop offset="0.334" stop-color="#999846"/><stop offset="0.369" stop-color="#996b33"/><stop offset="0.422" stop-color="#994322"/><stop offset="0.506" stop-color="#992314"/><stop offset="0.659" stop-color="#990708"/><stop offset="0.781" stop-color="#990004"/><stop offset="1.000" stop-color="#990000"/></linearGradient><linearGradient id="o22" gradientUnits="userSpaceOnUse" x1="1018.4" x2="1658.0" y1="0" y2="0"><stop offset="0.000" stop-color="#00993f"/><stop offset="0.222" stop-color="#039946"/><stop offset="0.288" stop-color="#53994a"/><stop offset="0.335" stop-color="#99964c"/><stop offset="0.369" stop-color="#996a37"/><stop offset="0.422" stop-color="#994225"/><stop offset="0.510" stop-color="#992116"/><stop offset="0.669" stop-color="#99060a"/><stop offset="0.791" stop-color="#990005"/><stop offset="1.000" stop-color="#990000"/></linearGradient><linearGradient id="o23" gradientUnits="userSpaceOnUse" x1="1019.0" x2="1658.0" y1="0" y2="0"><stop offset="0.000" stop-color="#009942"/><stop offset="0.219" stop-color="#00994b"/><stop offset="0.285" stop-color="#509950"/><stop offset="0.332" stop-color="#999954"/><stop offset="0.366" stop-color="#996b3d"/><stop offset="0.416" stop-color="#99452a"/><stop offset="0.498" stop-color="#99241a"/><stop offset="0.645" stop-color="#99080c"/><stop offset="0.767" stop-color="#990007"/><stop offset="1.000" stop-color="#990001"/></linearGradient><linearGradient id="o24" gradientUnits="userSpaceOnUse" x1="1019.6" x2="1658.0" y1="0" y2="0"><stop offset="0.000" stop-color="#009946"/><stop offset="0.219" stop-color="#009951"/><stop offset="0.285" stop-color="#519956"/><stop offset="0.332" stop-color="#999759"/><stop offset="0.363" stop-color="#996c43"/><stop offset="0.414" stop-color="#99452e"/><stop offset="0.495" stop-color="#99241d"/><stop offset="0.642" stop-color="#99080e"/><stop offset="0.764" stop-color="#990008"/><stop offset="1.000" stop-color="#990002"/></linearGradient><linearGradient id="o25" gradientUnits="userSpaceOnUse" x1="1020.3" x2="1658.0" y1="0" y2="0"><stop offset="0.000" stop-color="#00994a"/><stop offset="0.220" stop-color="#019956"/><stop offset="0.285" stop-color="#52995c"/><stop offset="0.329" stop-color="#999962"/><stop offset="0.364" stop-color="#996a48"/><stop offset="0.414" stop-color="#994432"/><stop offset="0.496" stop-color="#99231f"/><stop offset="0.643" stop-color="#990710"/><stop offset="0.762" stop-color="#990009"/><stop offset="1.000" stop-color="#990002"/></linearGradient><linearGradient id="o26" gradientUnits="userSpaceOnUse" x1="1021.1" x2="1658.0" y1="0" y2="0"><stop offset="0.000" stop-color="#00994e"/><stop offset="0.220" stop-color="#01995c"/><stop offset="0.283" stop-color="#509963"/><stop offset="0.330" stop-color="#999768"/><stop offset="0.361" stop-color="#996c4e"/><stop offset="0.411" stop-color="#994436"/><stop offset="0.493" stop-color="#992322"/><stop offset="0.641" stop-color="#990711"/><stop offset="0.757" stop-color="#99000b"/><stop offset="1.000" stop-color="#990003"/></linearGradient><linearGradient id="o27" gradientUnits="userSpaceOnUse" x1="1021.8" x2="1658.0" y1="0" y2="0"><stop offset="0.000" stop-color="#009952"/><stop offset="0.220" stop-color="#029962"/><stop offset="0.283" stop-color="#51996a"/><stop offset="0.327" stop-color="#999971"/><stop offset="0.358" stop-color="#996d54"/><stop offset="0.406" stop-color="#99463c"/><stop offset="0.484" stop-color="#992426"/><stop offset="0.626" stop-color="#990814"/><stop offset="0.745" stop-color="#99000d"/><stop offset="1.000" stop-color="#990004"/></linearGradient><linearGradient id="o28" gradientUnits="userSpaceOnUse" x1="1022.7" x2="1658.0" y1="0" y2="0"><stop offset="0.000" stop-color="#009956"/><stop offset="0.220" stop-color="#029968"/><stop offset="0.283" stop-color="#539971"/><stop offset="0.327" stop-color="#999676"/><stop offset="0.359" stop-color="#996b59"/><stop offset="0.406" stop-color="#99453f"/><stop offset="0.485" stop-color="#992328"/><stop offset="0.626" stop-color="#990816"/><stop offset="0.743" stop-color="#99000e"/><stop offset="1.000" stop-color="#990005"/></linearGradient><linearGradient id="o29" gradientUnits="userSpaceOnUse" x1="1023.5" x2="1658.0" y1="0" y2="0"><stop offset="0.000" stop-color="#00995a"/><stop offset="0.221" stop-color="#03996e"/><stop offset="0.284" stop-color="#559978"/><stop offset="0.325" stop-color="#999980"/><stop offset="0.356" stop-color="#996c5f"/><stop offset="0.403" stop-color="#994544"/><stop offset="0.482" stop-color="#99232c"/><stop offset="0.624" stop-color="#990718"/><stop offset="0.738" stop-color="#990010"/><stop offset="1.000" stop-color="#990006"/></linearGradient><linearGradient id="o30" gradientUnits="userSpaceOnUse" x1="1024.3" x2="1658.0" y1="0" y2="0"><stop offset="0.000" stop-color="#00995e"/><stop offset="0.218" stop-color="#009974"/><stop offset="0.278" stop-color="#4d997e"/><stop offset="0.322" stop-color="#979988"/><stop offset="0.360" stop-color="#996661"/><stop offset="0.410" stop-color="#994044"/><stop offset="0.492" stop-color="#991f2c"/><stop offset="0.644" stop-color="#990518"/><stop offset="0.773" stop-color="#99000f"/><stop offset="1.000" stop-color="#990007"/></linearGradient><linearGradient id="o31" gradientUnits="userSpaceOnUse" x1="1025.3" x2="1658.0" y1="0" y2="0"><stop offset="0.000" stop-color="#009962"/><stop offset="0.218" stop-color="#01997a"/><stop offset="0.278" stop-color="#4f9986"/><stop offset="0.322" stop-color="#99988f"/><stop offset="0.354" stop-color="#996a6b"/><stop offset="0.401" stop-color="#99444c"/><stop offset="0.480" stop-color="#992231"/><stop offset="0.623" stop-color="#99071b"/><stop offset="0.733" stop-color="#990012"/><stop offset="1.000" stop-color="#990008"/></linearGradient><linearGradient id="o32" gradientUnits="userSpaceOnUse" x1="1026.2" x2="1657.5" y1="0" y2="0"><stop offset="0.000" stop-color="#009966"/><stop offset="0.219" stop-color="#019981"/><stop offset="0.279" stop-color="#52998d"/><stop offset="0.320" stop-color="#989998"/><stop offset="0.352" stop-color="#996b72"/><stop offset="0.399" stop-color="#994451"/><stop offset="0.475" stop-color="#992335"/><stop offset="0.615" stop-color="#99071e"/><stop offset="0.722" stop-color="#990015"/><stop offset="1.000" stop-color="#990009"/></linearGradient><linearGradient id="o33" gradientUnits="userSpaceOnUse" x1="1027.1" x2="1654.5" y1="0" y2="0"><stop offset="0.000" stop-color="#00996b"/><stop offset="0.220" stop-color="#029988"/><stop offset="0.281" stop-color="#549995"/><stop offset="0.325" stop-color="#999099"/><stop offset="0.357" stop-color="#996573"/><stop offset="0.405" stop-color="#994052"/><stop offset="0.485" stop-color="#992036"/><stop offset="0.631" stop-color="#99051e"/><stop offset="0.749" stop-color="#990014"/><stop offset="1.000" stop-color="#99000a"/></linearGradient><linearGradient id="o34" gradientUnits="userSpaceOnUse" x1="1028.1" x2="1651.6" y1="0" y2="0"><stop offset="0.000" stop-color="#00996f"/><stop offset="0.215" stop-color="#00998d"/><stop offset="0.231" stop-color="#0f9991"/><stop offset="0.282" stop-color="#549599"/><stop offset="0.330" stop-color="#988799"/><stop offset="0.366" stop-color="#995d72"/><stop offset="0.420" stop-color="#99384f"/><stop offset="0.513" stop-color="#991832"/><stop offset="0.677" stop-color="#99001b"/><stop offset="1.000" stop-color="#99000b"/></linearGradient><linearGradient id="o35" gradientUnits="userSpaceOnUse" x1="1029.1" x2="1648.7" y1="0" y2="0"><stop offset="0.000" stop-color="#009973"/><stop offset="0.210" stop-color="#009993"/><stop offset="0.223" stop-color="#049996"/><stop offset="0.326" stop-color="#8b8299"/><stop offset="0.339" stop-color="#997b95"/><stop offset="0.378" stop-color="#99526d"/><stop offset="0.439" stop-color="#992f4b"/><stop offset="0.546" stop-color="#99112e"/><stop offset="0.694" stop-color="#99001c"/><stop offset="1.000" stop-color="#99000c"/></linearGradient><linearGradient id="o36" gradientUnits="userSpaceOnUse" x1="1030.1" x2="1645.7" y1="0" y2="0"><stop offset="0.000" stop-color="#009978"/><stop offset="0.218" stop-color="#009699"/><stop offset="0.305" stop-color="#698199"/><stop offset="0.341" stop-color="#987799"/><stop offset="0.383" stop-color="#994d6f"/><stop offset="0.448" stop-color="#992b4b"/><stop offset="0.562" stop-color="#990e2e"/><stop offset="0.698" stop-color="#99001d"/><stop offset="1.000" stop-color="#99000d"/></linearGradient><linearGradient id="o37" gradientUnits="userSpaceOnUse" x1="1031.1" x2="1642.8" y1="0" y2="0"><stop offset="0.000" stop-color="#00997d"/><stop offset="0.190" stop-color="#009699"/><stop offset="0.222" stop-color="#028f99"/><stop offset="0.343" stop-color="#947199"/><stop offset="0.353" stop-color="#996891"/><stop offset="0.399" stop-color="#994269"/><stop offset="0.471" stop-color="#992347"/><stop offset="0.598" stop-color="#99082a"/><stop offset="0.706" stop-color="#99001e"/><stop offset="1.000" stop-color="#99000e"/></linearGradient><linearGradient id="o38" gradientUnits="userSpaceOnUse" x1="1032.2" x2="1639.9" y1="0" y2="0"><stop offset="0.000" stop-color="#009982"/><stop offset="0.161" stop-color="#009699"/><stop offset="0.220" stop-color="#008999"/><stop offset="0.346" stop-color="#906b99"/><stop offset="0.355" stop-color="#996695"/><stop offset="0.398" stop-color="#99426e"/><stop offset="0.467" stop-color="#99234c"/><stop offset="0.589" stop-color="#99092e"/><stop offset="0.701" stop-color="#990020"/><stop offset="1.000" stop-color="#99000f"/></linearGradient><linearGradient id="o39" gradientUnits="userSpaceOnUse" x1="1033.2" x2="1637.0" y1="0" y2="0"><stop offset="0.000" stop-color="#009986"/><stop offset="0.133" stop-color="#009699"/><stop offset="0.222" stop-color="#018399"/><stop offset="0.354" stop-color="#956399"/><stop offset="0.368" stop-color="#99598e"/><stop offset="0.417" stop-color="#993767"/><stop offset="0.497" stop-color="#991b45"/><stop offset="0.639" stop-color="#990329"/><stop offset="0.934" stop-color="#990013"/><stop offset="1.000" stop-color="#990010"/></linearGradient><linearGradient id="o40" gradientUnits="userSpaceOnUse" x1="1034.3" x2="1634.0" y1="0" y2="0"><stop offset="0.000" stop-color="#00998b"/><stop offset="0.103" stop-color="#009599"/><stop offset="0.223" stop-color="#027d99"/><stop offset="0.360" stop-color="#955d99"/><stop offset="0.374" stop-color="#99548e"/><stop offset="0.424" stop-color="#993468"/><stop offset="0.507" stop-color="#991846"/><stop offset="0.654" stop-color="#990129"/><stop offset="0.957" stop-color="#990013"/><stop offset="1.000" stop-color="#990011"/></linearGradient><linearGradient id="o41" gradientUnits="userSpaceOnUse" x1="1035.4" x2="1631.1" y1="0" y2="0"><stop offset="0.000" stop-color="#009991"/><stop offset="0.077" stop-color="#009599"/><stop offset="0.225" stop-color="#037899"/><stop offset="0.366" stop-color="#955799"/><stop offset="0.383" stop-color="#994c8b"/><stop offset="0.436" stop-color="#992e65"/><stop offset="0.527" stop-color="#991343"/><stop offset="0.675" stop-color="#990029"/><stop offset="0.994" stop-color="#990012"/><stop offset="1.000" stop-color="#990012"/></linearGradient><linearGradient id="o42" gradientUnits="userSpaceOnUse" x1="1036.5" x2="1628.2" y1="0" y2="0"><stop offset="0.000" stop-color="#009996"/><stop offset="0.128" stop-color="#008699"/><stop offset="0.223" stop-color="#007399"/><stop offset="0.368" stop-color="#925399"/><stop offset="0.379" stop-color="#994f95"/><stop offset="0.429" stop-color="#99306d"/><stop offset="0.510" stop-color="#99164b"/><stop offset="0.652" stop-color="#99002e"/><stop offset="0.936" stop-color="#990016"/><stop offset="1.000" stop-color="#990013"/></linearGradient><linearGradient id="o43" gradientUnits="userSpaceOnUse" x1="1037.7" x2="1625.2" y1="0" y2="0"><stop offset="0.000" stop-color="#009799"/><stop offset="0.225" stop-color="#016e99"/><stop offset="0.378" stop-color="#964d99"/><stop offset="0.405" stop-color="#993c83"/><stop offset="0.470" stop-color="#99215d"/><stop offset="0.579" stop-color="#99093d"/><stop offset="0.688" stop-color="#99002b"/><stop offset="1.000" stop-color="#990014"/></linearGradient><linearGradient id="o44" gradientUnits="userSpaceOnUse" x1="1038.8" x2="1622.3" y1="0" y2="0"><stop offset="0.000" stop-color="#009299"/><stop offset="0.226" stop-color="#026a99"/><stop offset="0.387" stop-color="#994799"/><stop offset="0.442" stop-color="#992a6f"/><stop offset="0.528" stop-color="#99124c"/><stop offset="0.672" stop-color="#99002f"/><stop offset="0.963" stop-color="#990017"/><stop offset="1.000" stop-color="#990016"/></linearGradient><linearGradient id="o45" gradientUnits="userSpaceOnUse" x1="1040.0" x2="1619.4" y1="0" y2="0"><stop offset="0.000" stop-color="#008d99"/><stop offset="0.224" stop-color="#006699"/><stop offset="0.387" stop-color="#934499"/><stop offset="0.397" stop-color="#994095"/><stop offset="0.456" stop-color="#99256c"/><stop offset="0.549" stop-color="#990e49"/><stop offset="0.677" stop-color="#990031"/><stop offset="0.967" stop-color="#990019"/><stop offset="1.000" stop-color="#990017"/></linearGradient><linearGradient id="o46" gradientUnits="userSpaceOnUse" x1="1041.2" x2="1616.5" y1="0" y2="0"><stop offset="0.000" stop-color="#008899"/><stop offset="0.226" stop-color="#016299"/><stop offset="0.393" stop-color="#934099"/><stop offset="0.407" stop-color="#993a92"/><stop offset="0.469" stop-color="#992069"/><stop offset="0.570" stop-color="#990a47"/><stop offset="0.678" stop-color="#990033"/><stop offset="0.963" stop-color="#99001a"/><stop offset="1.000" stop-color="#990018"/></linearGradient><linearGradient id="o47" gradientUnits="userSpaceOnUse" x1="1042.4" x2="1613.5" y1="0" y2="0"><stop offset="0.000" stop-color="#008499"/><stop offset="0.228" stop-color="#025e99"/><stop offset="0.399" stop-color="#943c99"/><stop offset="0.413" stop-color="#993692"/><stop offset="0.476" stop-color="#991d6a"/><stop offset="0.578" stop-color="#990848"/><stop offset="0.679" stop-color="#990035"/><stop offset="0.956" stop-color="#99001c"/><stop offset="1.000" stop-color="#990019"/></linearGradient><linearGradient id="o48" gradientUnits="userSpaceOnUse" x1="1043.6" x2="1610.6" y1="0" y2="0"><stop offset="0.000" stop-color="#008099"/><stop offset="0.226" stop-color="#015b99"/><stop offset="0.406" stop-color="#943899"/><stop offset="0.423" stop-color="#99308f"/><stop offset="0.490" stop-color="#991967"/><stop offset="0.600" stop-color="#990545"/><stop offset="0.709" stop-color="#990033"/><stop offset="1.000" stop-color="#99001b"/></linearGradient><linearGradient id="o49" gradientUnits="userSpaceOnUse" x1="1044.9" x2="1607.7" y1="0" y2="0"><stop offset="0.000" stop-color="#007b99"/><stop offset="0.227" stop-color="#025799"/><stop offset="0.412" stop-color="#953499"/><stop offset="0.434" stop-color="#992b8c"/><stop offset="0.505" stop-color="#991565"/><stop offset="0.622" stop-color="#990243"/><stop offset="0.832" stop-color="#990027"/><stop offset="1.000" stop-color="#99001c"/></linearGradient><linearGradient id="o50" gradientUnits="userSpaceOnUse" x1="1046.1" x2="1604.8" y1="0" y2="0"><stop offset="0.000" stop-color="#007799"/><stop offset="0.229" stop-color="#025399"/><stop offset="0.419" stop-color="#953099"/><stop offset="0.448" stop-color="#992587"/><stop offset="0.526" stop-color="#991060"/><stop offset="0.655" stop-color="#99003f"/><stop offset="0.891" stop-color="#990024"/><stop offset="1.000" stop-color="#99001d"/></linearGradient><linearGradient id="o51" gradientUnits="userSpaceOnUse" x1="1047.4" x2="1601.8" y1="0" y2="0"><stop offset="0.000" stop-color="#007499"/><stop offset="0.227" stop-color="#015199"/><stop offset="0.422" stop-color="#932d99"/><stop offset="0.436" stop-color="#992994"/><stop offset="0.505" stop-color="#99146c"/><stop offset="0.617" stop-color="#99024a"/><stop offset="0.815" stop-color="#99002c"/><stop offset="1.000" stop-color="#99001f"/></linearGradient><linearGradient id="o52" gradientUnits="userSpaceOnUse" x1="1048.6" x2="1598.9" y1="0" y2="0"><stop offset="0.000" stop-color="#007099"/><stop offset="0.229" stop-color="#024e99"/><stop offset="0.433" stop-color="#962999"/><stop offset="0.520" stop-color="#99116a"/><stop offset="0.640" stop-color="#990047"/><stop offset="0.851" stop-color="#99002b"/><stop offset="1.000" stop-color="#990020"/></linearGradient><linearGradient id="o53" gradientUnits="userSpaceOnUse" x1="1049.9" x2="1596.0" y1="0" y2="0"><stop offset="0.000" stop-color="#006d99"/><stop offset="0.231" stop-color="#034a99"/><stop offset="0.440" stop-color="#962699"/><stop offset="0.527" stop-color="#990f6a"/><stop offset="0.648" stop-color="#990048"/><stop offset="0.864" stop-color="#99002b"/><stop offset="1.000" stop-color="#990021"/></linearGradient><linearGradient id="o54" gradientUnits="userSpaceOnUse" x1="1051.2" x2="1593.0" y1="0" y2="0"><stop offset="0.000" stop-color="#006999"/><stop offset="0.229" stop-color="#014899"/><stop offset="0.443" stop-color="#942499"/><stop offset="0.461" stop-color="#991f91"/><stop offset="0.539" stop-color="#990c69"/><stop offset="0.650" stop-color="#99004a"/><stop offset="0.860" stop-color="#99002d"/><stop offset="1.000" stop-color="#990023"/></linearGradient><linearGradient id="o55" gradientUnits="userSpaceOnUse" x1="1052.5" x2="1590.1" y1="0" y2="0"><stop offset="0.000" stop-color="#006699"/><stop offset="0.231" stop-color="#024599"/><stop offset="0.450" stop-color="#942199"/><stop offset="0.469" stop-color="#991c91"/><stop offset="0.551" stop-color="#990a69"/><stop offset="0.651" stop-color="#99004d"/><stop offset="0.859" stop-color="#99002f"/><stop offset="1.000" stop-color="#990024"/></linearGradient><linearGradient id="o56" gradientUnits="userSpaceOnUse" x1="1053.9" x2="1587.2" y1="0" y2="0"><stop offset="0.000" stop-color="#006399"/><stop offset="0.233" stop-color="#034299"/><stop offset="0.458" stop-color="#951e99"/><stop offset="0.484" stop-color="#99178c"/><stop offset="0.574" stop-color="#990664"/><stop offset="0.668" stop-color="#99004c"/><stop offset="0.885" stop-color="#99002e"/><stop offset="1.000" stop-color="#990025"/></linearGradient><linearGradient id="o57" gradientUnits="userSpaceOnUse" x1="1055.2" x2="1584.3" y1="0" y2="0"><stop offset="0.000" stop-color="#006099"/><stop offset="0.231" stop-color="#024099"/><stop offset="0.465" stop-color="#951b99"/><stop offset="0.510" stop-color="#991081"/><stop offset="0.612" stop-color="#99005c"/><stop offset="0.783" stop-color="#99003b"/><stop offset="1.000" stop-color="#990027"/></linearGradient><linearGradient id="o58" gradientUnits="userSpaceOnUse" x1="1056.6" x2="1581.3" y1="0" y2="0"><stop offset="0.000" stop-color="#005d99"/><stop offset="0.232" stop-color="#033e99"/><stop offset="0.473" stop-color="#961999"/><stop offset="0.575" stop-color="#99056a"/><stop offset="0.682" stop-color="#99004e"/><stop offset="0.903" stop-color="#990030"/><stop offset="1.000" stop-color="#990028"/></linearGradient><linearGradient id="o59" gradientUnits="userSpaceOnUse" x1="1057.9" x2="1578.4" y1="0" y2="0"><stop offset="0.000" stop-color="#005a99"/><stop offset="0.231" stop-color="#013c99"/><stop offset="0.476" stop-color="#941799"/><stop offset="0.496" stop-color="#991392"/><stop offset="0.584" stop-color="#99036a"/><stop offset="0.730" stop-color="#990048"/><stop offset="0.988" stop-color="#99002b"/><stop offset="1.000" stop-color="#99002a"/></linearGradient><linearGradient id="o60" gradientUnits="userSpaceOnUse" x1="1059.3" x2="1575.5" y1="0" y2="0"><stop offset="0.000" stop-color="#005799"/><stop offset="0.232" stop-color="#023a99"/><stop offset="0.484" stop-color="#941499"/><stop offset="0.504" stop-color="#991092"/><stop offset="0.597" stop-color="#99016a"/><stop offset="0.748" stop-color="#990047"/><stop offset="1.000" stop-color="#99002b"/></linearGradient><linearGradient id="o61" gradientUnits="userSpaceOnUse" x1="1060.7" x2="1572.5" y1="0" y2="0"><stop offset="0.000" stop-color="#005599"/><stop offset="0.231" stop-color="#013899"/><stop offset="0.492" stop-color="#951299"/><stop offset="0.520" stop-color="#990c8d"/><stop offset="0.621" stop-color="#990065"/><stop offset="0.785" stop-color="#990043"/><stop offset="1.000" stop-color="#99002d"/></linearGradient><linearGradient id="o62" gradientUnits="userSpaceOnUse" x1="1062.1" x2="1569.6" y1="0" y2="0"><stop offset="0.000" stop-color="#005299"/><stop offset="0.233" stop-color="#023599"/><stop offset="0.500" stop-color="#960f99"/><stop offset="0.556" stop-color="#990680"/><stop offset="0.646" stop-color="#990061"/><stop offset="0.824" stop-color="#990040"/><stop offset="1.000" stop-color="#99002f"/></linearGradient><linearGradient id="o63" gradientUnits="userSpaceOnUse" x1="1063.5" x2="1566.7" y1="0" y2="0"><stop offset="0.000" stop-color="#005099"/><stop offset="0.235" stop-color="#033399"/><stop offset="0.509" stop-color="#960d99"/><stop offset="0.616" stop-color="#99006d"/><stop offset="0.771" stop-color="#99004a"/><stop offset="1.000" stop-color="#990030"/></linearGradient><linearGradient id="o64" gradientUnits="userSpaceOnUse" x1="1065.0" x2="1563.8" y1="0" y2="0"><stop offset="0.000" stop-color="#004d99"/><stop offset="0.233" stop-color="#023299"/><stop offset="0.513" stop-color="#940c99"/><stop offset="0.537" stop-color="#990891"/><stop offset="0.626" stop-color="#99006d"/><stop offset="0.786" stop-color="#99004a"/><stop offset="1.000" stop-color="#990032"/></linearGradient><linearGradient id="o65" gradientUnits="userSpaceOnUse" x1="1066.5" x2="1560.8" y1="0" y2="0"><stop offset="0.000" stop-color="#004b99"/><stop offset="0.235" stop-color="#033099"/><stop offset="0.534" stop-color="#990896"/><stop offset="0.619" stop-color="#990073"/><stop offset="0.773" stop-color="#99004f"/><stop offset="1.000" stop-color="#990034"/></linearGradient><linearGradient id="o66" gradientUnits="userSpaceOnUse" x1="1067.9" x2="1557.9" y1="0" y2="0"><stop offset="0.000" stop-color="#004899"/><stop offset="0.233" stop-color="#022e99"/><stop offset="0.531" stop-color="#950899"/><stop offset="0.580" stop-color="#990185"/><stop offset="0.706" stop-color="#99005e"/><stop offset="0.914" stop-color="#99003e"/><stop offset="1.000" stop-color="#990035"/></linearGradient><linearGradient id="o67" gradientUnits="userSpaceOnUse" x1="1069.4" x2="1555.0" y1="0" y2="0"><stop offset="0.000" stop-color="#004699"/><stop offset="0.235" stop-color="#032c99"/><stop offset="0.540" stop-color="#960699"/><stop offset="0.626" stop-color="#990077"/><stop offset="0.779" stop-color="#990052"/><stop offset="1.000" stop-color="#990037"/></linearGradient><linearGradient id="o68" gradientUnits="userSpaceOnUse" x1="1071.0" x2="1552.0" y1="0" y2="0"><stop offset="0.000" stop-color="#004499"/><stop offset="0.233" stop-color="#022b99"/><stop offset="0.545" stop-color="#940499"/><stop offset="0.574" stop-color="#99008f"/><stop offset="0.690" stop-color="#990068"/><stop offset="0.881" stop-color="#990045"/><stop offset="1.000" stop-color="#990039"/></linearGradient><linearGradient id="o69" gradientUnits="userSpaceOnUse" x1="1072.5" x2="1549.1" y1="0" y2="0"><stop offset="0.000" stop-color="#004299"/><stop offset="0.235" stop-color="#032999"/><stop offset="0.554" stop-color="#950299"/><stop offset="0.588" stop-color="#99008d"/><stop offset="0.709" stop-color="#990066"/><stop offset="0.911" stop-color="#990044"/><stop offset="1.000" stop-color="#99003b"/></linearGradient><linearGradient id="o70" gradientUnits="userSpaceOnUse" x1="1074.1" x2="1546.2" y1="0" y2="0"><stop offset="0.000" stop-color="#004099"/><stop offset="0.233" stop-color="#022899"/><stop offset="0.563" stop-color="#960199"/><stop offset="0.661" stop-color="#990076"/><stop offset="0.826" stop-color="#990052"/><stop offset="1.000" stop-color="#99003c"/></linearGradient><linearGradient id="o71" gradientUnits="userSpaceOnUse" x1="1075.7" x2="1543.3" y1="0" y2="0"><stop offset="0.000" stop-color="#003e99"/><stop offset="0.235" stop-color="#032699"/><stop offset="0.573" stop-color="#960099"/><stop offset="0.714" stop-color="#99006b"/><stop offset="0.911" stop-color="#990048"/><stop offset="1.000" stop-color="#99003e"/></linearGradient><linearGradient id="o72" gradientUnits="userSpaceOnUse" x1="1077.3" x2="1540.3" y1="0" y2="0"><stop offset="0.000" stop-color="#003c99"/><stop offset="0.233" stop-color="#022599"/><stop offset="0.579" stop-color="#950099"/><stop offset="0.613" stop-color="#99008e"/><stop offset="0.747" stop-color="#990066"/><stop offset="0.963" stop-color="#990044"/><stop offset="1.000" stop-color="#990040"/></linearGradient><linearGradient id="o73" gradientUnits="userSpaceOnUse" x1="1078.9" x2="1537.4" y1="0" y2="0"><stop offset="0.000" stop-color="#003a99"/><stop offset="0.236" stop-color="#032399"/><stop offset="0.580" stop-color="#920099"/><stop offset="0.606" stop-color="#990095"/><stop offset="0.733" stop-color="#99006c"/><stop offset="0.938" stop-color="#990049"/><stop offset="1.000" stop-color="#990042"/></linearGradient><linearGradient id="o74" gradientUnits="userSpaceOnUse" x1="1080.6" x2="1534.5" y1="0" y2="0"><stop offset="0.000" stop-color="#003899"/><stop offset="0.234" stop-color="#022299"/><stop offset="0.577" stop-color="#8d0099"/><stop offset="0.612" stop-color="#990096"/><stop offset="0.740" stop-color="#99006d"/><stop offset="0.947" stop-color="#99004a"/><stop offset="1.000" stop-color="#990044"/></linearGradient><linearGradient id="o75" gradientUnits="userSpaceOnUse" x1="1082.2" x2="1531.5" y1="0" y2="0"><stop offset="0.000" stop-color="#003799"/><stop offset="0.236" stop-color="#032199"/><stop offset="0.574" stop-color="#880099"/><stop offset="0.623" stop-color="#990095"/><stop offset="0.757" stop-color="#99006c"/><stop offset="0.970" stop-color="#990049"/><stop offset="1.000" stop-color="#990046"/></linearGradient><linearGradient id="o76" gradientUnits="userSpaceOnUse" x1="1083.9" x2="1528.6" y1="0" y2="0"><stop offset="0.000" stop-color="#003599"/><stop offset="0.234" stop-color="#021f99"/><stop offset="0.571" stop-color="#830099"/><stop offset="0.630" stop-color="#990097"/><stop offset="0.765" stop-color="#99006e"/><stop offset="0.980" stop-color="#99004a"/><stop offset="1.000" stop-color="#990048"/></linearGradient><linearGradient id="o77" gradientUnits="userSpaceOnUse" x1="1085.6" x2="1525.7" y1="0" y2="0"><stop offset="0.000" stop-color="#003399"/><stop offset="0.232" stop-color="#021e99"/><stop offset="0.568" stop-color="#7f0099"/><stop offset="0.641" stop-color="#990096"/><stop offset="0.777" stop-color="#99006e"/><stop offset="0.995" stop-color="#99004b"/><stop offset="1.000" stop-color="#99004a"/></linearGradient><linearGradient id="o78" gradientUnits="userSpaceOnUse" x1="1087.3" x2="1522.8" y1="0" y2="0"><stop offset="0.000" stop-color="#003299"/><stop offset="0.234" stop-color="#031d99"/><stop offset="0.565" stop-color="#7a0099"/><stop offset="0.648" stop-color="#990097"/><stop offset="0.785" stop-color="#99006f"/><stop offset="1.000" stop-color="#99004c"/></linearGradient><linearGradient id="o79" gradientUnits="userSpaceOnUse" x1="1089.0" x2="1519.8" y1="0" y2="0"><stop offset="0.000" stop-color="#003099"/><stop offset="0.232" stop-color="#021c99"/><stop offset="0.557" stop-color="#740099"/><stop offset="0.659" stop-color="#990097"/><stop offset="0.803" stop-color="#99006e"/><stop offset="1.000" stop-color="#99004f"/></linearGradient><linearGradient id="o80" gradientUnits="userSpaceOnUse" x1="1090.7" x2="1516.9" y1="0" y2="0"><stop offset="0.000" stop-color="#002e99"/><stop offset="0.235" stop-color="#031b99"/><stop offset="0.554" stop-color="#700099"/><stop offset="0.671" stop-color="#990096"/><stop offset="0.821" stop-color="#99006d"/><stop offset="1.000" stop-color="#990051"/></linearGradient><linearGradient id="o81" gradientUnits="userSpaceOnUse" x1="1092.4" x2="1514.0" y1="0" y2="0"><stop offset="0.000" stop-color="#002d99"/><stop offset="0.232" stop-color="#021a99"/><stop offset="0.550" stop-color="#6c0099"/><stop offset="0.678" stop-color="#990097"/><stop offset="0.830" stop-color="#99006e"/><stop offset="1.000" stop-color="#990053"/></linearGradient><linearGradient id="o82" gradientUnits="userSpaceOnUse" x1="1094.1" x2="1511.1" y1="0" y2="0"><stop offset="0.000" stop-color="#002b99"/><stop offset="0.235" stop-color="#031899"/><stop offset="0.547" stop-color="#680099"/><stop offset="0.691" stop-color="#990097"/><stop offset="0.844" stop-color="#99006e"/><stop offset="1.000" stop-color="#990055"/></linearGradient><linearGradient id="o83" gradientUnits="userSpaceOnUse" x1="1095.9" x2="1508.1" y1="0" y2="0"><stop offset="0.000" stop-color="#002a99"/><stop offset="0.233" stop-color="#031799"/><stop offset="0.543" stop-color="#650099"/><stop offset="0.703" stop-color="#990096"/><stop offset="0.864" stop-color="#99006d"/><stop offset="1.000" stop-color="#990058"/></linearGradient><linearGradient id="o84" gradientUnits="userSpaceOnUse" x1="1097.6" x2="1505.2" y1="0" y2="0"><stop offset="0.000" stop-color="#002899"/><stop offset="0.231" stop-color="#021799"/><stop offset="0.540" stop-color="#610099"/><stop offset="0.712" stop-color="#990097"/><stop offset="0.873" stop-color="#99006e"/><stop offset="1.000" stop-color="#99005a"/></linearGradient><linearGradient id="o85" gradientUnits="userSpaceOnUse" x1="1099.4" x2="1502.3" y1="0" y2="0"><stop offset="0.000" stop-color="#002799"/><stop offset="0.233" stop-color="#031599"/><stop offset="0.531" stop-color="#5c0099"/><stop offset="0.725" stop-color="#990097"/><stop offset="0.894" stop-color="#99006d"/><stop offset="1.000" stop-color="#99005d"/></linearGradient><linearGradient id="o86" gradientUnits="userSpaceOnUse" x1="1101.1" x2="1499.3" y1="0" y2="0"><stop offset="0.000" stop-color="#002699"/><stop offset="0.231" stop-color="#021499"/><stop offset="0.527" stop-color="#590099"/><stop offset="0.738" stop-color="#990096"/><stop offset="0.909" stop-color="#99006e"/><stop offset="1.000" stop-color="#99005f"/></linearGradient><linearGradient id="o87" gradientUnits="userSpaceOnUse" x1="1102.9" x2="1496.4" y1="0" y2="0"><stop offset="0.000" stop-color="#002499"/><stop offset="0.229" stop-color="#021499"/><stop offset="0.524" stop-color="#560099"/><stop offset="0.747" stop-color="#990097"/><stop offset="0.920" stop-color="#99006f"/><stop offset="1.000" stop-color="#990062"/></linearGradient><linearGradient id="o88" gradientUnits="userSpaceOnUse" x1="1104.7" x2="1493.5" y1="0" y2="0"><stop offset="0.000" stop-color="#002399"/><stop offset="0.231" stop-color="#031399"/><stop offset="0.520" stop-color="#530099"/><stop offset="0.761" stop-color="#990097"/><stop offset="0.941" stop-color="#99006e"/><stop offset="1.000" stop-color="#990064"/></linearGradient><linearGradient id="o89" gradientUnits="userSpaceOnUse" x1="1106.5" x2="1490.6" y1="0" y2="0"><stop offset="0.000" stop-color="#002299"/><stop offset="0.229" stop-color="#021299"/><stop offset="0.516" stop-color="#500099"/><stop offset="0.776" stop-color="#990096"/><stop offset="0.963" stop-color="#99006d"/><stop offset="1.000" stop-color="#990067"/></linearGradient><linearGradient id="o90" gradientUnits="userSpaceOnUse" x1="1108.3" x2="1487.6" y1="0" y2="0"><stop offset="0.000" stop-color="#002099"/><stop offset="0.232" stop-color="#031199"/><stop offset="0.511" stop-color="#4d0099"/><stop offset="0.786" stop-color="#990097"/><stop offset="0.975" stop-color="#99006e"/><stop offset="1.000" stop-color="#99006a"/></linearGradient><linearGradient id="o91" gradientUnits="userSpaceOnUse" x1="1110.1" x2="1484.7" y1="0" y2="0"><stop offset="0.000" stop-color="#001f99"/><stop offset="0.230" stop-color="#031099"/><stop offset="0.502" stop-color="#480099"/><stop offset="0.801" stop-color="#990097"/><stop offset="0.993" stop-color="#99006e"/><stop offset="1.000" stop-color="#99006d"/></linearGradient><linearGradient id="o92" gradientUnits="userSpaceOnUse" x1="1111.9" x2="1481.8" y1="0" y2="0"><stop offset="0.000" stop-color="#001e99"/><stop offset="0.227" stop-color="#020f99"/><stop offset="0.498" stop-color="#460099"/><stop offset="0.817" stop-color="#990096"/><stop offset="1.000" stop-color="#990070"/></linearGradient><linearGradient id="o93" gradientUnits="userSpaceOnUse" x1="1113.8" x2="1478.8" y1="0" y2="0"><stop offset="0.000" stop-color="#001d99"/><stop offset="0.230" stop-color="#030e99"/><stop offset="0.493" stop-color="#430099"/><stop offset="0.827" stop-color="#990097"/><stop offset="1.000" stop-color="#990073"/></linearGradient><linearGradient id="o94" gradientUnits="userSpaceOnUse" x1="1115.6" x2="1475.9" y1="0" y2="0"><stop offset="0.000" stop-color="#001c99"/><stop offset="0.228" stop-color="#030d99"/><stop offset="0.488" stop-color="#400099"/><stop offset="0.844" stop-color="#990096"/><stop offset="1.000" stop-color="#990076"/></linearGradient><linearGradient id="o95" gradientUnits="userSpaceOnUse" x1="1117.5" x2="1473.0" y1="0" y2="0"><stop offset="0.000" stop-color="#001b99"/><stop offset="0.225" stop-color="#020d99"/><stop offset="0.484" stop-color="#3e0099"/><stop offset="0.855" stop-color="#990097"/><stop offset="1.000" stop-color="#990079"/></linearGradient><linearGradient id="o96" gradientUnits="userSpaceOnUse" x1="1119.4" x2="1470.1" y1="0" y2="0"><stop offset="0.000" stop-color="#001999"/><stop offset="0.228" stop-color="#030c99"/><stop offset="0.479" stop-color="#3b0099"/><stop offset="0.873" stop-color="#990097"/><stop offset="1.000" stop-color="#99007c"/></linearGradient><linearGradient id="o97" gradientUnits="userSpaceOnUse" x1="1121.2" x2="1467.1" y1="0" y2="0"><stop offset="0.000" stop-color="#001899"/><stop offset="0.226" stop-color="#030b99"/><stop offset="0.474" stop-color="#390099"/><stop offset="0.890" stop-color="#990096"/><stop offset="1.000" stop-color="#99007f"/></linearGradient><linearGradient id="o98" gradientUnits="userSpaceOnUse" x1="1123.1" x2="1464.2" y1="0" y2="0"><stop offset="0.000" stop-color="#001799"/><stop offset="0.223" stop-color="#020b99"/><stop offset="0.469" stop-color="#370099"/><stop offset="0.903" stop-color="#990097"/><stop offset="1.000" stop-color="#990083"/></linearGradient><linearGradient id="o99" gradientUnits="userSpaceOnUse" x1="1125.1" x2="1461.3" y1="0" y2="0"><stop offset="0.000" stop-color="#001699"/><stop offset="0.226" stop-color="#030a99"/><stop offset="0.464" stop-color="#340099"/><stop offset="0.922" stop-color="#990096"/><stop offset="1.000" stop-color="#990086"/></linearGradient><linearGradient id="o100" gradientUnits="userSpaceOnUse" x1="1127.0" x2="1458.3" y1="0" y2="0"><stop offset="0.000" stop-color="#001599"/><stop offset="0.223" stop-color="#030999"/><stop offset="0.459" stop-color="#320099"/><stop offset="0.936" stop-color="#990097"/><stop offset="1.000" stop-color="#99008a"/></linearGradient><linearGradient id="o101" gradientUnits="userSpaceOnUse" x1="1128.9" x2="1455.4" y1="0" y2="0"><stop offset="0.000" stop-color="#001499"/><stop offset="0.221" stop-color="#020899"/><stop offset="0.453" stop-color="#300099"/><stop offset="0.956" stop-color="#990096"/><stop offset="1.000" stop-color="#99008d"/></linearGradient><linearGradient id="o102" gradientUnits="userSpaceOnUse" x1="1130.9" x2="1452.5" y1="0" y2="0"><stop offset="0.000" stop-color="#001399"/><stop offset="0.224" stop-color="#030899"/><stop offset="0.454" stop-color="#2f0099"/><stop offset="0.970" stop-color="#990097"/><stop offset="1.000" stop-color="#990091"/></linearGradient><linearGradient id="o103" gradientUnits="userSpaceOnUse" x1="1132.8" x2="1449.6" y1="0" y2="0"><stop offset="0.000" stop-color="#001299"/><stop offset="0.221" stop-color="#030799"/><stop offset="0.448" stop-color="#2d0099"/><stop offset="0.991" stop-color="#990097"/><stop offset="1.000" stop-color="#990095"/></linearGradient><linearGradient id="o104" gradientUnits="userSpaceOnUse" x1="1134.8" x2="1446.6" y1="0" y2="0"><stop offset="0.000" stop-color="#001199"/><stop offset="0.218" stop-color="#020699"/><stop offset="0.455" stop-color="#2e0099"/><stop offset="1.000" stop-color="#990099"/></linearGradient><linearGradient id="o105" gradientUnits="userSpaceOnUse" x1="1136.8" x2="1443.7" y1="0" y2="0"><stop offset="0.000" stop-color="#001099"/><stop offset="0.222" stop-color="#030699"/><stop offset="0.463" stop-color="#2e0099"/><stop offset="1.000" stop-color="#950099"/></linearGradient><linearGradient id="o106" gradientUnits="userSpaceOnUse" x1="1138.8" x2="1440.8" y1="0" y2="0"><stop offset="0.000" stop-color="#000f99"/><stop offset="0.219" stop-color="#030599"/><stop offset="0.484" stop-color="#310099"/><stop offset="1.000" stop-color="#910099"/></linearGradient><linearGradient id="o107" gradientUnits="userSpaceOnUse" x1="1140.9" x2="1437.8" y1="0" y2="0"><stop offset="0.000" stop-color="#000e99"/><stop offset="0.216" stop-color="#030499"/><stop offset="0.498" stop-color="#320099"/><stop offset="1.000" stop-color="#8e0099"/></linearGradient><linearGradient id="o108" gradientUnits="userSpaceOnUse" x1="1142.9" x2="1434.9" y1="0" y2="0"><stop offset="0.000" stop-color="#000d99"/><stop offset="0.212" stop-color="#020499"/><stop offset="0.582" stop-color="#400099"/><stop offset="1.000" stop-color="#8a0099"/></linearGradient><linearGradient id="o109" gradientUnits="userSpaceOnUse" x1="1145.0" x2="1432.0" y1="0" y2="0"><stop offset="0.000" stop-color="#000d99"/><stop offset="0.216" stop-color="#030399"/><stop offset="1.000" stop-color="#860099"/></linearGradient><linearGradient id="o110" gradientUnits="userSpaceOnUse" x1="1147.1" x2="1429.1" y1="0" y2="0"><stop offset="0.000" stop-color="#000c99"/><stop offset="0.213" stop-color="#030399"/><stop offset="1.000" stop-color="#830099"/></linearGradient><linearGradient id="o111" gradientUnits="userSpaceOnUse" x1="1149.2" x2="1426.1" y1="0" y2="0"><stop offset="0.000" stop-color="#000b99"/><stop offset="0.209" stop-color="#030299"/><stop offset="1.000" stop-color="#800099"/></linearGradient><linearGradient id="o112" gradientUnits="userSpaceOnUse" x1="1151.4" x2="1423.2" y1="0" y2="0"><stop offset="0.000" stop-color="#000a99"/><stop offset="0.206" stop-color="#030299"/><stop offset="1.000" stop-color="#7c0099"/></linearGradient><linearGradient id="o113" gradientUnits="userSpaceOnUse" x1="1153.6" x2="1420.3" y1="0" y2="0"><stop offset="0.000" stop-color="#000999"/><stop offset="0.210" stop-color="#030199"/><stop offset="1.000" stop-color="#790099"/></linearGradient><linearGradient id="o114" gradientUnits="userSpaceOnUse" x1="1155.8" x2="1417.4" y1="0" y2="0"><stop offset="0.000" stop-color="#000899"/><stop offset="0.206" stop-color="#030099"/><stop offset="1.000" stop-color="#760099"/></linearGradient><linearGradient id="o115" gradientUnits="userSpaceOnUse" x1="1158.0" x2="1414.4" y1="0" y2="0"><stop offset="0.000" stop-color="#000799"/><stop offset="0.203" stop-color="#030099"/><stop offset="1.000" stop-color="#730099"/></linearGradient><linearGradient id="o116" gradientUnits="userSpaceOnUse" x1="1160.2" x2="1411.5" y1="0" y2="0"><stop offset="0.000" stop-color="#000799"/><stop offset="0.199" stop-color="#030099"/><stop offset="1.000" stop-color="#6f0099"/></linearGradient><linearGradient id="o117" gradientUnits="userSpaceOnUse" x1="1162.5" x2="1408.6" y1="0" y2="0"><stop offset="0.000" stop-color="#000699"/><stop offset="0.195" stop-color="#030099"/><stop offset="1.000" stop-color="#6c0099"/></linearGradient><linearGradient id="o118" gradientUnits="userSpaceOnUse" x1="1164.7" x2="1405.6" y1="0" y2="0"><stop offset="0.000" stop-color="#000599"/><stop offset="0.191" stop-color="#030099"/><stop offset="1.000" stop-color="#6a0099"/></linearGradient><linearGradient id="o119" gradientUnits="userSpaceOnUse" x1="1167.0" x2="1402.7" y1="0" y2="0"><stop offset="0.000" stop-color="#000499"/><stop offset="0.195" stop-color="#040099"/><stop offset="1.000" stop-color="#670099"/></linearGradient><linearGradient id="o120" gradientUnits="userSpaceOnUse" x1="1169.3" x2="1399.8" y1="0" y2="0"><stop offset="0.000" stop-color="#000499"/><stop offset="0.191" stop-color="#030099"/><stop offset="1.000" stop-color="#640099"/></linearGradient><linearGradient id="o121" gradientUnits="userSpaceOnUse" x1="1171.7" x2="1396.9" y1="0" y2="0"><stop offset="0.000" stop-color="#000399"/><stop offset="0.187" stop-color="#030099"/><stop offset="1.000" stop-color="#610099"/></linearGradient><linearGradient id="o122" gradientUnits="userSpaceOnUse" x1="1174.1" x2="1393.9" y1="0" y2="0"><stop offset="0.000" stop-color="#000299"/><stop offset="0.182" stop-color="#030099"/><stop offset="1.000" stop-color="#5e0099"/></linearGradient><linearGradient id="o123" gradientUnits="userSpaceOnUse" x1="1176.5" x2="1391.0" y1="0" y2="0"><stop offset="0.000" stop-color="#000199"/><stop offset="0.177" stop-color="#030099"/><stop offset="1.000" stop-color="#5c0099"/></linearGradient><linearGradient id="o124" gradientUnits="userSpaceOnUse" x1="1178.9" x2="1388.1" y1="0" y2="0"><stop offset="0.000" stop-color="#000199"/><stop offset="0.172" stop-color="#030099"/><stop offset="1.000" stop-color="#590099"/></linearGradient><linearGradient id="o125" gradientUnits="userSpaceOnUse" x1="1181.5" x2="1385.1" y1="0" y2="0"><stop offset="0.000" stop-color="#000099"/><stop offset="0.177" stop-color="#040099"/><stop offset="1.000" stop-color="#570099"/></linearGradient><linearGradient id="o126" gradientUnits="userSpaceOnUse" x1="1184.0" x2="1382.2" y1="0" y2="0"><stop offset="0.000" stop-color="#000099"/><stop offset="0.172" stop-color="#040099"/><stop offset="1.000" stop-color="#540099"/></linearGradient><linearGradient id="o127" gradientUnits="userSpaceOnUse" x1="1186.6" x2="1379.3" y1="0" y2="0"><stop offset="0.000" stop-color="#000099"/><stop offset="0.166" stop-color="#040099"/><stop offset="1.000" stop-color="#520099"/></linearGradient><linearGradient id="o128" gradientUnits="userSpaceOnUse" x1="1189.2" x2="1376.4" y1="0" y2="0"><stop offset="0.000" stop-color="#000099"/><stop offset="0.160" stop-color="#040099"/><stop offset="1.000" stop-color="#4f0099"/></linearGradient><linearGradient id="o129" gradientUnits="userSpaceOnUse" x1="1191.8" x2="1373.4" y1="0" y2="0"><stop offset="0.000" stop-color="#000099"/><stop offset="0.154" stop-color="#040099"/><stop offset="1.000" stop-color="#4d0099"/></linearGradient><linearGradient id="o130" gradientUnits="userSpaceOnUse" x1="1194.5" x2="1370.5" y1="0" y2="0"><stop offset="0.000" stop-color="#000099"/><stop offset="0.159" stop-color="#050099"/><stop offset="1.000" stop-color="#4b0099"/></linearGradient><linearGradient id="o131" gradientUnits="userSpaceOnUse" x1="1197.2" x2="1367.6" y1="0" y2="0"><stop offset="0.000" stop-color="#000099"/><stop offset="0.153" stop-color="#050099"/><stop offset="1.000" stop-color="#480099"/></linearGradient><linearGradient id="o132" gradientUnits="userSpaceOnUse" x1="1200.1" x2="1364.6" y1="0" y2="0"><stop offset="0.000" stop-color="#000099"/><stop offset="0.158" stop-color="#060099"/><stop offset="1.000" stop-color="#460099"/></linearGradient><linearGradient id="o133" gradientUnits="userSpaceOnUse" x1="1203.0" x2="1361.7" y1="0" y2="0"><stop offset="0.000" stop-color="#000099"/><stop offset="0.202" stop-color="#0a0099"/><stop offset="1.000" stop-color="#440099"/></linearGradient><linearGradient id="o134" gradientUnits="userSpaceOnUse" x1="1206.0" x2="1358.8" y1="0" y2="0"><stop offset="0.000" stop-color="#000099"/><stop offset="0.759" stop-color="#310099"/><stop offset="1.000" stop-color="#420099"/></linearGradient><linearGradient id="o135" gradientUnits="userSpaceOnUse" x1="1209.1" x2="1355.9" y1="0" y2="0"><stop offset="0.000" stop-color="#000099"/><stop offset="1.000" stop-color="#400099"/></linearGradient><linearGradient id="o136" gradientUnits="userSpaceOnUse" x1="1212.2" x2="1352.9" y1="0" y2="0"><stop offset="0.000" stop-color="#000099"/><stop offset="1.000" stop-color="#3d0099"/></linearGradient><linearGradient id="o137" gradientUnits="userSpaceOnUse" x1="1215.3" x2="1350.0" y1="0" y2="0"><stop offset="0.000" stop-color="#000099"/><stop offset="1.000" stop-color="#3b0099"/></linearGradient><linearGradient id="o138" gradientUnits="userSpaceOnUse" x1="1218.6" x2="1347.1" y1="0" y2="0"><stop offset="0.000" stop-color="#010099"/><stop offset="1.000" stop-color="#390099"/></linearGradient><linearGradient id="o139" gradientUnits="userSpaceOnUse" x1="1221.9" x2="1344.1" y1="0" y2="0"><stop offset="0.000" stop-color="#030099"/><stop offset="1.000" stop-color="#370099"/></linearGradient><linearGradient id="o140" gradientUnits="userSpaceOnUse" x1="1225.3" x2="1341.2" y1="0" y2="0"><stop offset="0.000" stop-color="#040099"/><stop offset="1.000" stop-color="#360099"/></linearGradient><linearGradient id="o141" gradientUnits="userSpaceOnUse" x1="1228.7" x2="1338.3" y1="0" y2="0"><stop offset="0.000" stop-color="#050099"/><stop offset="1.000" stop-color="#340099"/></linearGradient><linearGradient id="o142" gradientUnits="userSpaceOnUse" x1="1232.2" x2="1335.4" y1="0" y2="0"><stop offset="0.000" stop-color="#060099"/><stop offset="1.000" stop-color="#320099"/></linearGradient><linearGradient id="o143" gradientUnits="userSpaceOnUse" x1="1235.7" x2="1332.4" y1="0" y2="0"><stop offset="0.000" stop-color="#070099"/><stop offset="1.000" stop-color="#300099"/></linearGradient><linearGradient id="o144" gradientUnits="userSpaceOnUse" x1="1239.4" x2="1329.5" y1="0" y2="0"><stop offset="0.000" stop-color="#090099"/><stop offset="1.000" stop-color="#2e0099"/></linearGradient><linearGradient id="o145" gradientUnits="userSpaceOnUse" x1="1243.0" x2="1326.6" y1="0" y2="0"><stop offset="0.000" stop-color="#0a0099"/><stop offset="1.000" stop-color="#2c0099"/></linearGradient><linearGradient id="o146" gradientUnits="userSpaceOnUse" x1="1246.7" x2="1323.7" y1="0" y2="0"><stop offset="0.000" stop-color="#0b0099"/><stop offset="1.000" stop-color="#2b0099"/></linearGradient><linearGradient id="o147" gradientUnits="userSpaceOnUse" x1="1250.3" x2="1320.7" y1="0" y2="0"><stop offset="0.000" stop-color="#0c0099"/><stop offset="1.000" stop-color="#290099"/></linearGradient><linearGradient id="o148" gradientUnits="userSpaceOnUse" x1="1254.0" x2="1317.8" y1="0" y2="0"><stop offset="0.000" stop-color="#0d0099"/><stop offset="1.000" stop-color="#270099"/></linearGradient><linearGradient id="o149" gradientUnits="userSpaceOnUse" x1="1257.7" x2="1314.9" y1="0" y2="0"><stop offset="0.000" stop-color="#0f0099"/><stop offset="1.000" stop-color="#250099"/></linearGradient><linearGradient id="o150" gradientUnits="userSpaceOnUse" x1="1261.3" x2="1311.9" y1="0" y2="0"><stop offset="0.000" stop-color="#100099"/><stop offset="1.000" stop-color="#240099"/></linearGradient><linearGradient id="o151" gradientUnits="userSpaceOnUse" x1="1264.9" x2="1309.0" y1="0" y2="0"><stop offset="0.000" stop-color="#110099"/><stop offset="1.000" stop-color="#220099"/></linearGradient><linearGradient id="o152" gradientUnits="userSpaceOnUse" x1="1268.4" x2="1306.1" y1="0" y2="0"><stop offset="0.000" stop-color="#120099"/><stop offset="1.000" stop-color="#210099"/></linearGradient><linearGradient id="o153" gradientUnits="userSpaceOnUse" x1="1272.0" x2="1303.2" y1="0" y2="0"><stop offset="0.000" stop-color="#130099"/><stop offset="1.000" stop-color="#1f0099"/></linearGradient><linearGradient id="o154" gradientUnits="userSpaceOnUse" x1="1275.8" x2="1300.2" y1="0" y2="0"><stop offset="0.000" stop-color="#140099"/><stop offset="1.000" stop-color="#1e0099"/></linearGradient><linearGradient id="o155" gradientUnits="userSpaceOnUse" x1="1279.7" x2="1297.3" y1="0" y2="0"><stop offset="0.000" stop-color="#150099"/><stop offset="1.000" stop-color="#1c0099"/></linearGradient><linearGradient id="i0" gradientUnits="userSpaceOnUse" x1="1147.0" x2="1181.7" y1="0" y2="0"><stop offset="0.000" stop-color="#00ff02"/><stop offset="0.115" stop-color="#00ff01"/><stop offset="1.000" stop-color="#4eff00"/></linearGradient><linearGradient id="i1" gradientUnits="userSpaceOnUse" x1="1147.2" x2="1213.9" y1="0" y2="0"><stop offset="0.000" stop-color="#00ff08"/><stop offset="0.090" stop-color="#04ff07"/><stop offset="0.659" stop-color="#69ff00"/><stop offset="1.000" stop-color="#b1ff00"/></linearGradient><linearGradient id="i2" gradientUnits="userSpaceOnUse" x1="1147.7" x2="1246.1" y1="0" y2="0"><stop offset="0.000" stop-color="#00ff0f"/><stop offset="0.061" stop-color="#04ff0e"/><stop offset="0.447" stop-color="#6aff07"/><stop offset="0.772" stop-color="#d3ff00"/><stop offset="0.894" stop-color="#fffd00"/><stop offset="1.000" stop-color="#ffd900"/></linearGradient><linearGradient id="i3" gradientUnits="userSpaceOnUse" x1="1148.1" x2="1278.3" y1="0" y2="0"><stop offset="0.000" stop-color="#00ff16"/><stop offset="0.046" stop-color="#04ff15"/><stop offset="0.338" stop-color="#6bff0e"/><stop offset="0.584" stop-color="#d6ff07"/><stop offset="0.661" stop-color="#fcff05"/><stop offset="0.830" stop-color="#ffbb00"/><stop offset="1.000" stop-color="#ff8e00"/></linearGradient><linearGradient id="i4" gradientUnits="userSpaceOnUse" x1="1148.6" x2="1310.5" y1="0" y2="0"><stop offset="0.000" stop-color="#00ff1c"/><stop offset="0.037" stop-color="#04ff1c"/><stop offset="0.272" stop-color="#6cff16"/><stop offset="0.470" stop-color="#d8ff10"/><stop offset="0.531" stop-color="#ffff0e"/><stop offset="0.643" stop-color="#ffc307"/><stop offset="0.791" stop-color="#ff8f02"/><stop offset="1.000" stop-color="#ff6100"/></linearGradient><linearGradient id="i5" gradientUnits="userSpaceOnUse" x1="1149.1" x2="1342.7" y1="0" y2="0"><stop offset="0.000" stop-color="#00ff23"/><stop offset="0.031" stop-color="#04ff23"/><stop offset="0.227" stop-color="#6dff1e"/><stop offset="0.393" stop-color="#dbff18"/><stop offset="0.444" stop-color="#fffc16"/><stop offset="0.537" stop-color="#ffc10e"/><stop offset="0.661" stop-color="#ff8d07"/><stop offset="0.837" stop-color="#ff5f01"/><stop offset="1.000" stop-color="#ff4300"/></linearGradient><linearGradient id="i6" gradientUnits="userSpaceOnUse" x1="1149.6" x2="1374.8" y1="0" y2="0"><stop offset="0.000" stop-color="#00ff2a"/><stop offset="0.027" stop-color="#04ff2a"/><stop offset="0.195" stop-color="#6eff26"/><stop offset="0.337" stop-color="#deff21"/><stop offset="0.373" stop-color="#fdff20"/><stop offset="0.462" stop-color="#ffbe15"/><stop offset="0.568" stop-color="#ff8b0d"/><stop offset="0.719" stop-color="#ff5d05"/><stop offset="0.950" stop-color="#ff3400"/><stop offset="1.000" stop-color="#ff2e00"/></linearGradient><linearGradient id="i7" gradientUnits="userSpaceOnUse" x1="1150.1" x2="1407.0" y1="0" y2="0"><stop offset="0.000" stop-color="#00ff32"/><stop offset="0.023" stop-color="#04ff31"/><stop offset="0.163" stop-color="#69ff2e"/><stop offset="0.288" stop-color="#d8ff2b"/><stop offset="0.327" stop-color="#fffd29"/><stop offset="0.389" stop-color="#ffc71f"/><stop offset="0.475" stop-color="#ff9415"/><stop offset="0.599" stop-color="#ff650b"/><stop offset="0.786" stop-color="#ff3a03"/><stop offset="1.000" stop-color="#ff1e00"/></linearGradient><linearGradient id="i8" gradientUnits="userSpaceOnUse" x1="1150.6" x2="1439.2" y1="0" y2="0"><stop offset="0.000" stop-color="#00ff39"/><stop offset="0.021" stop-color="#04ff39"/><stop offset="0.146" stop-color="#6aff36"/><stop offset="0.249" stop-color="#d3ff34"/><stop offset="0.284" stop-color="#fbff33"/><stop offset="0.326" stop-color="#ffd62a"/><stop offset="0.395" stop-color="#ffa21e"/><stop offset="0.492" stop-color="#ff7214"/><stop offset="0.637" stop-color="#ff460a"/><stop offset="0.859" stop-color="#ff2001"/><stop offset="1.000" stop-color="#ff1100"/></linearGradient><linearGradient id="i9" gradientUnits="userSpaceOnUse" x1="1151.1" x2="1471.4" y1="0" y2="0"><stop offset="0.000" stop-color="#00ff41"/><stop offset="0.019" stop-color="#04ff40"/><stop offset="0.131" stop-color="#6cff3f"/><stop offset="0.225" stop-color="#d6ff3d"/><stop offset="0.256" stop-color="#ffff3d"/><stop offset="0.306" stop-color="#ffc72f"/><stop offset="0.375" stop-color="#ff9322"/><stop offset="0.475" stop-color="#ff6315"/><stop offset="0.624" stop-color="#ff390b"/><stop offset="0.862" stop-color="#ff1402"/><stop offset="1.000" stop-color="#ff0700"/></linearGradient><linearGradient id="i10" gradientUnits="userSpaceOnUse" x1="1151.6" x2="1501.6" y1="0" y2="0"><stop offset="0.000" stop-color="#00ff48"/><stop offset="0.017" stop-color="#04ff48"/><stop offset="0.120" stop-color="#6dff48"/><stop offset="0.206" stop-color="#d9ff47"/><stop offset="0.234" stop-color="#fffc46"/><stop offset="0.280" stop-color="#ffc436"/><stop offset="0.343" stop-color="#ff9128"/><stop offset="0.434" stop-color="#ff621a"/><stop offset="0.571" stop-color="#ff380e"/><stop offset="0.788" stop-color="#ff1404"/><stop offset="1.000" stop-color="#ff0000"/></linearGradient><linearGradient id="i11" gradientUnits="userSpaceOnUse" x1="1152.0" x2="1501.3" y1="0" y2="0"><stop offset="0.000" stop-color="#00ff50"/><stop offset="0.017" stop-color="#04ff50"/><stop offset="0.120" stop-color="#6eff50"/><stop offset="0.206" stop-color="#dbff51"/><stop offset="0.229" stop-color="#fdff51"/><stop offset="0.286" stop-color="#ffbc3c"/><stop offset="0.355" stop-color="#ff882b"/><stop offset="0.452" stop-color="#ff591d"/><stop offset="0.601" stop-color="#ff3010"/><stop offset="0.836" stop-color="#ff0d05"/><stop offset="1.000" stop-color="#ff0001"/></linearGradient><linearGradient id="i12" gradientUnits="userSpaceOnUse" x1="1152.5" x2="1499.7" y1="0" y2="0"><stop offset="0.000" stop-color="#00ff58"/><stop offset="0.017" stop-color="#04ff58"/><stop offset="0.115" stop-color="#69ff59"/><stop offset="0.202" stop-color="#d6ff5b"/><stop offset="0.230" stop-color="#fffe5b"/><stop offset="0.277" stop-color="#ffc547"/><stop offset="0.340" stop-color="#ff9135"/><stop offset="0.432" stop-color="#ff6125"/><stop offset="0.570" stop-color="#ff3616"/><stop offset="0.789" stop-color="#ff120a"/><stop offset="1.000" stop-color="#ff0003"/></linearGradient><linearGradient id="i13" gradientUnits="userSpaceOnUse" x1="1153.0" x2="1496.7" y1="0" y2="0"><stop offset="0.000" stop-color="#00ff60"/><stop offset="0.017" stop-color="#04ff60"/><stop offset="0.116" stop-color="#6aff63"/><stop offset="0.204" stop-color="#d9ff65"/><stop offset="0.227" stop-color="#fbff66"/><stop offset="0.244" stop-color="#ffea5e"/><stop offset="0.297" stop-color="#ffb249"/><stop offset="0.367" stop-color="#ff8036"/><stop offset="0.471" stop-color="#ff5225"/><stop offset="0.628" stop-color="#ff2a16"/><stop offset="0.885" stop-color="#ff0809"/><stop offset="1.000" stop-color="#ff0005"/></linearGradient><linearGradient id="i14" gradientUnits="userSpaceOnUse" x1="1153.5" x2="1493.8" y1="0" y2="0"><stop offset="0.000" stop-color="#00ff68"/><stop offset="0.018" stop-color="#04ff69"/><stop offset="0.118" stop-color="#6bff6c"/><stop offset="0.200" stop-color="#d3ff6f"/><stop offset="0.229" stop-color="#feff71"/><stop offset="0.282" stop-color="#ffbf57"/><stop offset="0.347" stop-color="#ff8c42"/><stop offset="0.441" stop-color="#ff5d2e"/><stop offset="0.582" stop-color="#ff341d"/><stop offset="0.805" stop-color="#ff100f"/><stop offset="1.000" stop-color="#ff0007"/></linearGradient><linearGradient id="i15" gradientUnits="userSpaceOnUse" x1="1154.0" x2="1490.8" y1="0" y2="0"><stop offset="0.000" stop-color="#00ff71"/><stop offset="0.012" stop-color="#00ff71"/><stop offset="0.107" stop-color="#5fff75"/><stop offset="0.196" stop-color="#ceff7a"/><stop offset="0.232" stop-color="#fffd7b"/><stop offset="0.279" stop-color="#ffc261"/><stop offset="0.344" stop-color="#ff8e49"/><stop offset="0.433" stop-color="#ff6035"/><stop offset="0.570" stop-color="#ff3623"/><stop offset="0.784" stop-color="#ff1313"/><stop offset="1.000" stop-color="#ff000a"/></linearGradient><linearGradient id="i16" gradientUnits="userSpaceOnUse" x1="1154.5" x2="1487.9" y1="0" y2="0"><stop offset="0.000" stop-color="#00ff79"/><stop offset="0.012" stop-color="#00ff7a"/><stop offset="0.108" stop-color="#60ff7f"/><stop offset="0.192" stop-color="#c8ff84"/><stop offset="0.228" stop-color="#fcff87"/><stop offset="0.288" stop-color="#ffba66"/><stop offset="0.354" stop-color="#ff884e"/><stop offset="0.450" stop-color="#ff5a38"/><stop offset="0.594" stop-color="#ff3125"/><stop offset="0.828" stop-color="#ff0e14"/><stop offset="1.000" stop-color="#ff000c"/></linearGradient><linearGradient id="i17" gradientUnits="userSpaceOnUse" x1="1155.0" x2="1484.9" y1="0" y2="0"><stop offset="0.000" stop-color="#00ff82"/><stop offset="0.012" stop-color="#00ff83"/><stop offset="0.103" stop-color="#5aff88"/><stop offset="0.188" stop-color="#c2ff8f"/><stop offset="0.230" stop-color="#ffff92"/><stop offset="0.273" stop-color="#ffc977"/><stop offset="0.333" stop-color="#ff955c"/><stop offset="0.418" stop-color="#ff6644"/><stop offset="0.546" stop-color="#ff3c2f"/><stop offset="0.746" stop-color="#ff181c"/><stop offset="1.000" stop-color="#ff000f"/></linearGradient><linearGradient id="i18" gradientUnits="userSpaceOnUse" x1="1155.5" x2="1482.0" y1="0" y2="0"><stop offset="0.000" stop-color="#00ff8b"/><stop offset="0.012" stop-color="#00ff8c"/><stop offset="0.104" stop-color="#5bff93"/><stop offset="0.190" stop-color="#c5ff9a"/><stop offset="0.227" stop-color="#faff9e"/><stop offset="0.239" stop-color="#fff297"/><stop offset="0.288" stop-color="#ffba78"/><stop offset="0.355" stop-color="#ff875c"/><stop offset="0.453" stop-color="#ff5843"/><stop offset="0.600" stop-color="#ff302c"/><stop offset="0.839" stop-color="#ff0d19"/><stop offset="1.000" stop-color="#ff0011"/></linearGradient><linearGradient id="i19" gradientUnits="userSpaceOnUse" x1="1155.9" x2="1479.0" y1="0" y2="0"><stop offset="0.000" stop-color="#00ff94"/><stop offset="0.012" stop-color="#00ff95"/><stop offset="0.105" stop-color="#5dff9d"/><stop offset="0.192" stop-color="#c8ffa6"/><stop offset="0.229" stop-color="#fdffaa"/><stop offset="0.285" stop-color="#ffbd84"/><stop offset="0.353" stop-color="#ff8865"/><stop offset="0.446" stop-color="#ff5b4a"/><stop offset="0.588" stop-color="#ff3232"/><stop offset="0.817" stop-color="#ff0f1e"/><stop offset="1.000" stop-color="#ff0014"/></linearGradient><linearGradient id="i20" gradientUnits="userSpaceOnUse" x1="1156.4" x2="1476.1" y1="0" y2="0"><stop offset="0.000" stop-color="#00ff9e"/><stop offset="0.013" stop-color="#00ff9f"/><stop offset="0.106" stop-color="#5effa8"/><stop offset="0.194" stop-color="#caffb2"/><stop offset="0.232" stop-color="#fffdb6"/><stop offset="0.275" stop-color="#ffc793"/><stop offset="0.338" stop-color="#ff9273"/><stop offset="0.426" stop-color="#ff6356"/><stop offset="0.557" stop-color="#ff3a3c"/><stop offset="0.763" stop-color="#ff1525"/><stop offset="1.000" stop-color="#ff0017"/></linearGradient><linearGradient id="i21" gradientUnits="userSpaceOnUse" x1="1156.9" x2="1473.1" y1="0" y2="0"><stop offset="0.000" stop-color="#00ffa7"/><stop offset="0.013" stop-color="#00ffa9"/><stop offset="0.108" stop-color="#5fffb3"/><stop offset="0.196" stop-color="#cdffbe"/><stop offset="0.228" stop-color="#fbffc3"/><stop offset="0.247" stop-color="#ffe8b4"/><stop offset="0.297" stop-color="#ffb190"/><stop offset="0.367" stop-color="#ff806f"/><stop offset="0.468" stop-color="#ff5351"/><stop offset="0.620" stop-color="#ff2c38"/><stop offset="0.867" stop-color="#ff0a21"/><stop offset="1.000" stop-color="#ff001a"/></linearGradient><linearGradient id="i22" gradientUnits="userSpaceOnUse" x1="1157.4" x2="1470.2" y1="0" y2="0"><stop offset="0.000" stop-color="#00ffb1"/><stop offset="0.013" stop-color="#00ffb3"/><stop offset="0.102" stop-color="#59ffbd"/><stop offset="0.192" stop-color="#c7ffca"/><stop offset="0.230" stop-color="#ffffd0"/><stop offset="0.275" stop-color="#ffc7a9"/><stop offset="0.339" stop-color="#ff9183"/><stop offset="0.428" stop-color="#ff6262"/><stop offset="0.563" stop-color="#ff3845"/><stop offset="0.774" stop-color="#ff142b"/><stop offset="1.000" stop-color="#ff001c"/></linearGradient><linearGradient id="i23" gradientUnits="userSpaceOnUse" x1="1157.9" x2="1467.2" y1="0" y2="0"><stop offset="0.000" stop-color="#00ffbb"/><stop offset="0.013" stop-color="#00ffbd"/><stop offset="0.103" stop-color="#5affc8"/><stop offset="0.188" stop-color="#c1ffd5"/><stop offset="0.233" stop-color="#fffcdb"/><stop offset="0.278" stop-color="#ffc4b1"/><stop offset="0.343" stop-color="#ff8f8a"/><stop offset="0.433" stop-color="#ff6068"/><stop offset="0.569" stop-color="#ff3749"/><stop offset="0.782" stop-color="#ff132e"/><stop offset="1.000" stop-color="#ff001f"/></linearGradient><linearGradient id="i24" gradientUnits="userSpaceOnUse" x1="1158.4" x2="1464.2" y1="0" y2="0"><stop offset="0.000" stop-color="#00ffc6"/><stop offset="0.013" stop-color="#00ffc7"/><stop offset="0.105" stop-color="#5bffd4"/><stop offset="0.190" stop-color="#c4ffe3"/><stop offset="0.229" stop-color="#fcffea"/><stop offset="0.288" stop-color="#ffbab5"/><stop offset="0.353" stop-color="#ff888e"/><stop offset="0.451" stop-color="#ff5969"/><stop offset="0.595" stop-color="#ff314a"/><stop offset="0.830" stop-color="#ff0e2e"/><stop offset="1.000" stop-color="#ff0022"/></linearGradient><linearGradient id="i25" gradientUnits="userSpaceOnUse" x1="1158.9" x2="1461.3" y1="0" y2="0"><stop offset="0.000" stop-color="#00ffd0"/><stop offset="0.013" stop-color="#00ffd2"/><stop offset="0.106" stop-color="#5cffe0"/><stop offset="0.192" stop-color="#c7fff0"/><stop offset="0.231" stop-color="#fffef8"/><stop offset="0.278" stop-color="#ffc4c8"/><stop offset="0.337" stop-color="#ff939f"/><stop offset="0.423" stop-color="#ff6479"/><stop offset="0.556" stop-color="#ff3a56"/><stop offset="0.761" stop-color="#ff1638"/><stop offset="1.000" stop-color="#ff0025"/></linearGradient><linearGradient id="i26" gradientUnits="userSpaceOnUse" x1="1159.4" x2="1458.3" y1="0" y2="0"><stop offset="0.000" stop-color="#00ffdb"/><stop offset="0.013" stop-color="#00ffdd"/><stop offset="0.107" stop-color="#5effec"/><stop offset="0.194" stop-color="#cafffe"/><stop offset="0.234" stop-color="#fcf7ff"/><stop offset="0.294" stop-color="#ffb4c6"/><stop offset="0.361" stop-color="#ff839b"/><stop offset="0.462" stop-color="#ff5574"/><stop offset="0.609" stop-color="#ff2e51"/><stop offset="0.850" stop-color="#ff0c34"/><stop offset="1.000" stop-color="#ff0028"/></linearGradient><linearGradient id="i27" gradientUnits="userSpaceOnUse" x1="1159.8" x2="1455.4" y1="0" y2="0"><stop offset="0.000" stop-color="#00ffe6"/><stop offset="0.014" stop-color="#00ffe8"/><stop offset="0.102" stop-color="#57fff8"/><stop offset="0.162" stop-color="#9cfaff"/><stop offset="0.250" stop-color="#ffe4fc"/><stop offset="0.305" stop-color="#ffabc9"/><stop offset="0.379" stop-color="#ff799b"/><stop offset="0.487" stop-color="#ff4d73"/><stop offset="0.650" stop-color="#ff2650"/><stop offset="0.920" stop-color="#ff0531"/><stop offset="1.000" stop-color="#ff002b"/></linearGradient><linearGradient id="i28" gradientUnits="userSpaceOnUse" x1="1160.3" x2="1452.4" y1="0" y2="0"><stop offset="0.000" stop-color="#00fff1"/><stop offset="0.014" stop-color="#00fff4"/><stop offset="0.096" stop-color="#50fbff"/><stop offset="0.260" stop-color="#ffd8fe"/><stop offset="0.315" stop-color="#ffa3cc"/><stop offset="0.390" stop-color="#ff749f"/><stop offset="0.500" stop-color="#ff4976"/><stop offset="0.671" stop-color="#ff2351"/><stop offset="0.959" stop-color="#ff0232"/><stop offset="1.000" stop-color="#ff002f"/></linearGradient><linearGradient id="i29" gradientUnits="userSpaceOnUse" x1="1160.8" x2="1449.5" y1="0" y2="0"><stop offset="0.000" stop-color="#00fffd"/><stop offset="0.014" stop-color="#00ffff"/><stop offset="0.187" stop-color="#a6ddff"/><stop offset="0.270" stop-color="#fecbff"/><stop offset="0.339" stop-color="#ff91c5"/><stop offset="0.430" stop-color="#ff6295"/><stop offset="0.561" stop-color="#ff386c"/><stop offset="0.769" stop-color="#ff1548"/><stop offset="1.000" stop-color="#ff0032"/></linearGradient><linearGradient id="i30" gradientUnits="userSpaceOnUse" x1="1161.3" x2="1446.5" y1="0" y2="0"><stop offset="0.000" stop-color="#00f6ff"/><stop offset="0.014" stop-color="#00f3ff"/><stop offset="0.196" stop-color="#a7d1ff"/><stop offset="0.280" stop-color="#fcbfff"/><stop offset="0.351" stop-color="#ff8ac8"/><stop offset="0.442" stop-color="#ff5d98"/><stop offset="0.575" stop-color="#ff356f"/><stop offset="0.785" stop-color="#ff134a"/><stop offset="1.000" stop-color="#ff0035"/></linearGradient><linearGradient id="i31" gradientUnits="userSpaceOnUse" x1="1161.8" x2="1443.6" y1="0" y2="0"><stop offset="0.000" stop-color="#00ebff"/><stop offset="0.014" stop-color="#00e9ff"/><stop offset="0.206" stop-color="#a8c5ff"/><stop offset="0.298" stop-color="#ffb1fd"/><stop offset="0.362" stop-color="#ff83ca"/><stop offset="0.454" stop-color="#ff589b"/><stop offset="0.589" stop-color="#ff3271"/><stop offset="0.802" stop-color="#ff114d"/><stop offset="1.000" stop-color="#ff0039"/></linearGradient><linearGradient id="i32" gradientUnits="userSpaceOnUse" x1="1162.3" x2="1440.6" y1="0" y2="0"><stop offset="0.000" stop-color="#00e1ff"/><stop offset="0.014" stop-color="#00deff"/><stop offset="0.216" stop-color="#a9baff"/><stop offset="0.309" stop-color="#ffa8ff"/><stop offset="0.381" stop-color="#ff78c8"/><stop offset="0.481" stop-color="#ff4f98"/><stop offset="0.632" stop-color="#ff296e"/><stop offset="0.869" stop-color="#ff0949"/><stop offset="1.000" stop-color="#ff003c"/></linearGradient><linearGradient id="i33" gradientUnits="userSpaceOnUse" x1="1162.8" x2="1437.7" y1="0" y2="0"><stop offset="0.000" stop-color="#00d7ff"/><stop offset="0.015" stop-color="#00d5ff"/><stop offset="0.226" stop-color="#aab0ff"/><stop offset="0.320" stop-color="#fd9eff"/><stop offset="0.400" stop-color="#ff6fc7"/><stop offset="0.502" stop-color="#ff4898"/><stop offset="0.655" stop-color="#ff256f"/><stop offset="0.895" stop-color="#ff074a"/><stop offset="1.000" stop-color="#ff0040"/></linearGradient><linearGradient id="i34" gradientUnits="userSpaceOnUse" x1="1163.3" x2="1434.7" y1="0" y2="0"><stop offset="0.000" stop-color="#00ceff"/><stop offset="0.022" stop-color="#04cbff"/><stop offset="0.258" stop-color="#bda2ff"/><stop offset="0.339" stop-color="#ff92fc"/><stop offset="0.413" stop-color="#ff69c9"/><stop offset="0.523" stop-color="#ff4298"/><stop offset="0.685" stop-color="#ff206e"/><stop offset="0.943" stop-color="#ff0349"/><stop offset="1.000" stop-color="#ff0044"/></linearGradient><linearGradient id="i35" gradientUnits="userSpaceOnUse" x1="1163.7" x2="1431.8" y1="0" y2="0"><stop offset="0.000" stop-color="#00c6ff"/><stop offset="0.022" stop-color="#04c2ff"/><stop offset="0.269" stop-color="#bd99ff"/><stop offset="0.351" stop-color="#ff8afe"/><stop offset="0.433" stop-color="#ff60c7"/><stop offset="0.545" stop-color="#ff3c98"/><stop offset="0.709" stop-color="#ff1d6f"/><stop offset="0.970" stop-color="#ff014b"/><stop offset="1.000" stop-color="#ff0048"/></linearGradient><linearGradient id="i36" gradientUnits="userSpaceOnUse" x1="1164.2" x2="1428.8" y1="0" y2="0"><stop offset="0.000" stop-color="#00beff"/><stop offset="0.023" stop-color="#04bbff"/><stop offset="0.280" stop-color="#bd91ff"/><stop offset="0.363" stop-color="#ff82ff"/><stop offset="0.446" stop-color="#ff5bca"/><stop offset="0.559" stop-color="#ff399b"/><stop offset="0.733" stop-color="#ff1970"/><stop offset="1.000" stop-color="#ff004c"/></linearGradient><linearGradient id="i37" gradientUnits="userSpaceOnUse" x1="1164.7" x2="1425.9" y1="0" y2="0"><stop offset="0.000" stop-color="#00b6ff"/><stop offset="0.023" stop-color="#04b3ff"/><stop offset="0.291" stop-color="#be89ff"/><stop offset="0.375" stop-color="#fd7bff"/><stop offset="0.475" stop-color="#ff51c4"/><stop offset="0.597" stop-color="#ff3096"/><stop offset="0.781" stop-color="#ff136d"/><stop offset="1.000" stop-color="#ff0050"/></linearGradient><linearGradient id="i38" gradientUnits="userSpaceOnUse" x1="1165.2" x2="1422.9" y1="0" y2="0"><stop offset="0.000" stop-color="#00afff"/><stop offset="0.023" stop-color="#04acff"/><stop offset="0.303" stop-color="#be81ff"/><stop offset="0.396" stop-color="#ff71fd"/><stop offset="0.489" stop-color="#ff4cc7"/><stop offset="0.621" stop-color="#ff2b96"/><stop offset="0.815" stop-color="#ff0f6c"/><stop offset="1.000" stop-color="#ff0054"/></linearGradient><linearGradient id="i39" gradientUnits="userSpaceOnUse" x1="1165.7" x2="1420.0" y1="0" y2="0"><stop offset="0.000" stop-color="#00a8ff"/><stop offset="0.024" stop-color="#04a5ff"/><stop offset="0.315" stop-color="#be7aff"/><stop offset="0.409" stop-color="#ff6bfe"/><stop offset="0.503" stop-color="#ff48c9"/><stop offset="0.637" stop-color="#ff2899"/><stop offset="0.834" stop-color="#ff0d6f"/><stop offset="1.000" stop-color="#ff0058"/></linearGradient><linearGradient id="i40" gradientUnits="userSpaceOnUse" x1="1166.2" x2="1417.0" y1="0" y2="0"><stop offset="0.000" stop-color="#00a2ff"/><stop offset="0.024" stop-color="#049fff"/><stop offset="0.327" stop-color="#be73ff"/><stop offset="0.423" stop-color="#fe64ff"/><stop offset="0.526" stop-color="#ff41c7"/><stop offset="0.662" stop-color="#ff2499"/><stop offset="0.869" stop-color="#ff096e"/><stop offset="1.000" stop-color="#ff005c"/></linearGradient><linearGradient id="i41" gradientUnits="userSpaceOnUse" x1="1166.7" x2="1414.1" y1="0" y2="0"><stop offset="0.000" stop-color="#009cff"/><stop offset="0.024" stop-color="#0499ff"/><stop offset="0.340" stop-color="#be6dff"/><stop offset="0.445" stop-color="#ff5cfc"/><stop offset="0.550" stop-color="#ff3bc6"/><stop offset="0.695" stop-color="#ff1f97"/><stop offset="0.913" stop-color="#ff056c"/><stop offset="1.000" stop-color="#ff0061"/></linearGradient><linearGradient id="i42" gradientUnits="userSpaceOnUse" x1="1167.2" x2="1411.1" y1="0" y2="0"><stop offset="0.000" stop-color="#0096ff"/><stop offset="0.025" stop-color="#0493ff"/><stop offset="0.353" stop-color="#bf66ff"/><stop offset="0.459" stop-color="#ff56fd"/><stop offset="0.566" stop-color="#ff37c8"/><stop offset="0.713" stop-color="#ff1c99"/><stop offset="0.935" stop-color="#ff036e"/><stop offset="1.000" stop-color="#ff0066"/></linearGradient><linearGradient id="i43" gradientUnits="userSpaceOnUse" x1="1167.6" x2="1408.2" y1="0" y2="0"><stop offset="0.000" stop-color="#0090ff"/><stop offset="0.025" stop-color="#048dff"/><stop offset="0.366" stop-color="#bf60ff"/><stop offset="0.474" stop-color="#ff51ff"/><stop offset="0.582" stop-color="#ff33ca"/><stop offset="0.732" stop-color="#ff199b"/><stop offset="0.956" stop-color="#ff0270"/><stop offset="1.000" stop-color="#ff006a"/></linearGradient><linearGradient id="i44" gradientUnits="userSpaceOnUse" x1="1168.1" x2="1405.2" y1="0" y2="0"><stop offset="0.000" stop-color="#008bff"/><stop offset="0.025" stop-color="#0388ff"/><stop offset="0.380" stop-color="#bf5bff"/><stop offset="0.489" stop-color="#fe4cff"/><stop offset="0.616" stop-color="#ff2cc5"/><stop offset="0.785" stop-color="#ff1295"/><stop offset="1.000" stop-color="#ff006f"/></linearGradient><linearGradient id="i45" gradientUnits="userSpaceOnUse" x1="1168.6" x2="1402.3" y1="0" y2="0"><stop offset="0.000" stop-color="#0086ff"/><stop offset="0.026" stop-color="#0383ff"/><stop offset="0.394" stop-color="#bf55ff"/><stop offset="0.514" stop-color="#ff45fd"/><stop offset="0.633" stop-color="#ff29c7"/><stop offset="0.805" stop-color="#ff1097"/><stop offset="1.000" stop-color="#ff0074"/></linearGradient><linearGradient id="i46" gradientUnits="userSpaceOnUse" x1="1169.1" x2="1399.3" y1="0" y2="0"><stop offset="0.000" stop-color="#0081ff"/><stop offset="0.026" stop-color="#037eff"/><stop offset="0.408" stop-color="#bf50ff"/><stop offset="0.530" stop-color="#ff40fe"/><stop offset="0.652" stop-color="#ff26c9"/><stop offset="0.825" stop-color="#ff0e99"/><stop offset="1.000" stop-color="#ff007a"/></linearGradient><linearGradient id="i47" gradientUnits="userSpaceOnUse" x1="1169.6" x2="1396.4" y1="0" y2="0"><stop offset="0.000" stop-color="#007cff"/><stop offset="0.026" stop-color="#037aff"/><stop offset="0.423" stop-color="#bf4bff"/><stop offset="0.547" stop-color="#ff3cff"/><stop offset="0.670" stop-color="#ff22cb"/><stop offset="0.847" stop-color="#ff0b9b"/><stop offset="1.000" stop-color="#ff007f"/></linearGradient><linearGradient id="i48" gradientUnits="userSpaceOnUse" x1="1170.1" x2="1393.4" y1="0" y2="0"><stop offset="0.000" stop-color="#0078ff"/><stop offset="0.027" stop-color="#0375ff"/><stop offset="0.439" stop-color="#bf46ff"/><stop offset="0.573" stop-color="#ff35fc"/><stop offset="0.707" stop-color="#ff1cc6"/><stop offset="0.896" stop-color="#ff0797"/><stop offset="1.000" stop-color="#ff0085"/></linearGradient><linearGradient id="i49" gradientUnits="userSpaceOnUse" x1="1170.6" x2="1390.5" y1="0" y2="0"><stop offset="0.000" stop-color="#0074ff"/><stop offset="0.027" stop-color="#0371ff"/><stop offset="0.455" stop-color="#c042ff"/><stop offset="0.591" stop-color="#ff31fd"/><stop offset="0.728" stop-color="#ff1ac8"/><stop offset="0.919" stop-color="#ff0499"/><stop offset="1.000" stop-color="#ff008a"/></linearGradient><linearGradient id="i50" gradientUnits="userSpaceOnUse" x1="1171.1" x2="1387.5" y1="0" y2="0"><stop offset="0.000" stop-color="#0070ff"/><stop offset="0.028" stop-color="#036dff"/><stop offset="0.471" stop-color="#c03dff"/><stop offset="0.610" stop-color="#ff2dfe"/><stop offset="0.748" stop-color="#ff17ca"/><stop offset="0.942" stop-color="#ff029b"/><stop offset="1.000" stop-color="#ff0090"/></linearGradient><linearGradient id="i51" gradientUnits="userSpaceOnUse" x1="1171.5" x2="1384.6" y1="0" y2="0"><stop offset="0.000" stop-color="#006cff"/><stop offset="0.028" stop-color="#0369ff"/><stop offset="0.488" stop-color="#c039ff"/><stop offset="0.629" stop-color="#fe29ff"/><stop offset="0.779" stop-color="#ff13c9"/><stop offset="0.986" stop-color="#ff0099"/><stop offset="1.000" stop-color="#ff0096"/></linearGradient><linearGradient id="i52" gradientUnits="userSpaceOnUse" x1="1172.0" x2="1381.6" y1="0" y2="0"><stop offset="0.000" stop-color="#0068ff"/><stop offset="0.029" stop-color="#0365ff"/><stop offset="0.506" stop-color="#c035ff"/><stop offset="0.658" stop-color="#ff24fc"/><stop offset="0.811" stop-color="#ff0fc7"/><stop offset="1.000" stop-color="#ff009d"/></linearGradient><linearGradient id="i53" gradientUnits="userSpaceOnUse" x1="1172.5" x2="1378.7" y1="0" y2="0"><stop offset="0.000" stop-color="#0064ff"/><stop offset="0.029" stop-color="#0361ff"/><stop offset="0.524" stop-color="#c031ff"/><stop offset="0.679" stop-color="#ff21fe"/><stop offset="0.834" stop-color="#ff0cc9"/><stop offset="1.000" stop-color="#ff00a3"/></linearGradient><linearGradient id="i54" gradientUnits="userSpaceOnUse" x1="1173.0" x2="1375.7" y1="0" y2="0"><stop offset="0.000" stop-color="#0061ff"/><stop offset="0.030" stop-color="#035eff"/><stop offset="0.543" stop-color="#c02eff"/><stop offset="0.701" stop-color="#ff1dff"/><stop offset="0.858" stop-color="#ff0aca"/><stop offset="1.000" stop-color="#ff00aa"/></linearGradient><linearGradient id="i55" gradientUnits="userSpaceOnUse" x1="1173.5" x2="1372.8" y1="0" y2="0"><stop offset="0.000" stop-color="#005dff"/><stop offset="0.030" stop-color="#035bff"/><stop offset="0.562" stop-color="#c02aff"/><stop offset="0.733" stop-color="#ff19fc"/><stop offset="0.903" stop-color="#ff06c7"/><stop offset="1.000" stop-color="#ff00b1"/></linearGradient><linearGradient id="i56" gradientUnits="userSpaceOnUse" x1="1174.0" x2="1369.8" y1="0" y2="0"><stop offset="0.000" stop-color="#005aff"/><stop offset="0.031" stop-color="#0357ff"/><stop offset="0.582" stop-color="#c026ff"/><stop offset="0.756" stop-color="#ff15fd"/><stop offset="0.929" stop-color="#ff03c8"/><stop offset="1.000" stop-color="#ff00b8"/></linearGradient><linearGradient id="i57" gradientUnits="userSpaceOnUse" x1="1174.5" x2="1366.9" y1="0" y2="0"><stop offset="0.000" stop-color="#0057ff"/><stop offset="0.042" stop-color="#0653ff"/><stop offset="0.613" stop-color="#c422ff"/><stop offset="0.780" stop-color="#ff12fe"/><stop offset="0.956" stop-color="#ff01ca"/><stop offset="1.000" stop-color="#ff00c0"/></linearGradient><linearGradient id="i58" gradientUnits="userSpaceOnUse" x1="1175.0" x2="1363.9" y1="0" y2="0"><stop offset="0.000" stop-color="#0054ff"/><stop offset="0.042" stop-color="#0650ff"/><stop offset="0.635" stop-color="#c41fff"/><stop offset="0.804" stop-color="#ff0fff"/><stop offset="0.995" stop-color="#ff00c9"/><stop offset="1.000" stop-color="#ff00c8"/></linearGradient><linearGradient id="i59" gradientUnits="userSpaceOnUse" x1="1175.4" x2="1360.9" y1="0" y2="0"><stop offset="0.000" stop-color="#0051ff"/><stop offset="0.043" stop-color="#064dff"/><stop offset="0.658" stop-color="#c41cff"/><stop offset="0.841" stop-color="#ff0bfc"/><stop offset="1.000" stop-color="#ff00d0"/></linearGradient><linearGradient id="i60" gradientUnits="userSpaceOnUse" x1="1175.9" x2="1358.0" y1="0" y2="0"><stop offset="0.000" stop-color="#004eff"/><stop offset="0.044" stop-color="#064bff"/><stop offset="0.681" stop-color="#c419ff"/><stop offset="0.868" stop-color="#ff09fd"/><stop offset="1.000" stop-color="#ff00d8"/></linearGradient><linearGradient id="i61" gradientUnits="userSpaceOnUse" x1="1176.4" x2="1355.0" y1="0" y2="0"><stop offset="0.000" stop-color="#004bff"/><stop offset="0.045" stop-color="#0648ff"/><stop offset="0.705" stop-color="#c416ff"/><stop offset="0.896" stop-color="#ff06fe"/><stop offset="1.000" stop-color="#ff00e1"/></linearGradient><linearGradient id="i62" gradientUnits="userSpaceOnUse" x1="1176.9" x2="1352.1" y1="0" y2="0"><stop offset="0.000" stop-color="#0048ff"/><stop offset="0.046" stop-color="#0545ff"/><stop offset="0.731" stop-color="#c413ff"/><stop offset="0.925" stop-color="#ff03ff"/><stop offset="1.000" stop-color="#ff00ea"/></linearGradient><linearGradient id="i63" gradientUnits="userSpaceOnUse" x1="1177.4" x2="1349.1" y1="0" y2="0"><stop offset="0.000" stop-color="#0046ff"/><stop offset="0.047" stop-color="#0543ff"/><stop offset="0.745" stop-color="#c111ff"/><stop offset="0.967" stop-color="#ff00fd"/><stop offset="1.000" stop-color="#ff00f3"/></linearGradient><linearGradient id="i64" gradientUnits="userSpaceOnUse" x1="1177.9" x2="1346.2" y1="0" y2="0"><stop offset="0.000" stop-color="#0043ff"/><stop offset="0.048" stop-color="#0540ff"/><stop offset="0.772" stop-color="#c10eff"/><stop offset="1.000" stop-color="#ff00fd"/></linearGradient><linearGradient id="i65" gradientUnits="userSpaceOnUse" x1="1178.4" x2="1343.2" y1="0" y2="0"><stop offset="0.000" stop-color="#0041ff"/><stop offset="0.049" stop-color="#053eff"/><stop offset="0.801" stop-color="#c10cff"/><stop offset="1.000" stop-color="#f700ff"/></linearGradient><linearGradient id="i66" gradientUnits="userSpaceOnUse" x1="1178.9" x2="1340.3" y1="0" y2="0"><stop offset="0.000" stop-color="#003fff"/><stop offset="0.050" stop-color="#053cff"/><stop offset="0.830" stop-color="#c109ff"/><stop offset="1.000" stop-color="#ed00ff"/></linearGradient><linearGradient id="i67" gradientUnits="userSpaceOnUse" x1="1179.3" x2="1337.3" y1="0" y2="0"><stop offset="0.000" stop-color="#003cff"/><stop offset="0.051" stop-color="#0539ff"/><stop offset="0.861" stop-color="#c107ff"/><stop offset="1.000" stop-color="#e400ff"/></linearGradient><linearGradient id="i68" gradientUnits="userSpaceOnUse" x1="1179.8" x2="1334.4" y1="0" y2="0"><stop offset="0.000" stop-color="#003aff"/><stop offset="0.052" stop-color="#0537ff"/><stop offset="0.893" stop-color="#c104ff"/><stop offset="1.000" stop-color="#db00ff"/></linearGradient><linearGradient id="i69" gradientUnits="userSpaceOnUse" x1="1180.3" x2="1331.4" y1="0" y2="0"><stop offset="0.000" stop-color="#0038ff"/><stop offset="0.053" stop-color="#0535ff"/><stop offset="0.926" stop-color="#c102ff"/><stop offset="1.000" stop-color="#d200ff"/></linearGradient><linearGradient id="i70" gradientUnits="userSpaceOnUse" x1="1180.8" x2="1328.5" y1="0" y2="0"><stop offset="0.000" stop-color="#0036ff"/><stop offset="0.068" stop-color="#0732ff"/><stop offset="0.975" stop-color="#c400ff"/><stop offset="1.000" stop-color="#ca00ff"/></linearGradient><linearGradient id="i71" gradientUnits="userSpaceOnUse" x1="1181.3" x2="1325.5" y1="0" y2="0"><stop offset="0.000" stop-color="#0034ff"/><stop offset="0.069" stop-color="#0730ff"/><stop offset="1.000" stop-color="#c200ff"/></linearGradient><linearGradient id="i72" gradientUnits="userSpaceOnUse" x1="1181.8" x2="1322.6" y1="0" y2="0"><stop offset="0.000" stop-color="#0032ff"/><stop offset="0.071" stop-color="#072eff"/><stop offset="1.000" stop-color="#ba00ff"/></linearGradient><linearGradient id="i73" gradientUnits="userSpaceOnUse" x1="1182.3" x2="1319.6" y1="0" y2="0"><stop offset="0.000" stop-color="#0030ff"/><stop offset="0.073" stop-color="#072cff"/><stop offset="1.000" stop-color="#b200ff"/></linearGradient><linearGradient id="i74" gradientUnits="userSpaceOnUse" x1="1182.8" x2="1316.7" y1="0" y2="0"><stop offset="0.000" stop-color="#002eff"/><stop offset="0.075" stop-color="#072bff"/><stop offset="1.000" stop-color="#ab00ff"/></linearGradient><linearGradient id="i75" gradientUnits="userSpaceOnUse" x1="1183.2" x2="1313.7" y1="0" y2="0"><stop offset="0.000" stop-color="#002cff"/><stop offset="0.077" stop-color="#0729ff"/><stop offset="1.000" stop-color="#a400ff"/></linearGradient><linearGradient id="i76" gradientUnits="userSpaceOnUse" x1="1183.7" x2="1310.8" y1="0" y2="0"><stop offset="0.000" stop-color="#002aff"/><stop offset="0.079" stop-color="#0727ff"/><stop offset="1.000" stop-color="#9d00ff"/></linearGradient><linearGradient id="i77" gradientUnits="userSpaceOnUse" x1="1184.2" x2="1307.8" y1="0" y2="0"><stop offset="0.000" stop-color="#0029ff"/><stop offset="0.081" stop-color="#0725ff"/><stop offset="1.000" stop-color="#9600ff"/></linearGradient><linearGradient id="i78" gradientUnits="userSpaceOnUse" x1="1184.7" x2="1304.9" y1="0" y2="0"><stop offset="0.000" stop-color="#0027ff"/><stop offset="0.083" stop-color="#0724ff"/><stop offset="1.000" stop-color="#9000ff"/></linearGradient><linearGradient id="i79" gradientUnits="userSpaceOnUse" x1="1185.2" x2="1301.9" y1="0" y2="0"><stop offset="0.000" stop-color="#0025ff"/><stop offset="0.103" stop-color="#0921ff"/><stop offset="1.000" stop-color="#8900ff"/></linearGradient><linearGradient id="i80" gradientUnits="userSpaceOnUse" x1="1185.7" x2="1299.0" y1="0" y2="0"><stop offset="0.000" stop-color="#0024ff"/><stop offset="0.106" stop-color="#0920ff"/><stop offset="1.000" stop-color="#8300ff"/></linearGradient><linearGradient id="i81" gradientUnits="userSpaceOnUse" x1="1186.2" x2="1296.0" y1="0" y2="0"><stop offset="0.000" stop-color="#0022ff"/><stop offset="0.109" stop-color="#091eff"/><stop offset="1.000" stop-color="#7d00ff"/></linearGradient><linearGradient id="i82" gradientUnits="userSpaceOnUse" x1="1186.7" x2="1293.1" y1="0" y2="0"><stop offset="0.000" stop-color="#0021ff"/><stop offset="0.113" stop-color="#091dff"/><stop offset="1.000" stop-color="#7700ff"/></linearGradient><linearGradient id="i83" gradientUnits="userSpaceOnUse" x1="1187.1" x2="1290.1" y1="0" y2="0"><stop offset="0.000" stop-color="#001fff"/><stop offset="0.117" stop-color="#091bff"/><stop offset="1.000" stop-color="#7200ff"/></linearGradient><linearGradient id="i84" gradientUnits="userSpaceOnUse" x1="1187.6" x2="1287.2" y1="0" y2="0"><stop offset="0.000" stop-color="#001eff"/><stop offset="0.121" stop-color="#081aff"/><stop offset="1.000" stop-color="#6c00ff"/></linearGradient><linearGradient id="i85" gradientUnits="userSpaceOnUse" x1="1188.1" x2="1284.2" y1="0" y2="0"><stop offset="0.000" stop-color="#001cff"/><stop offset="0.146" stop-color="#0a18ff"/><stop offset="1.000" stop-color="#6700ff"/></linearGradient><linearGradient id="i86" gradientUnits="userSpaceOnUse" x1="1188.6" x2="1281.3" y1="0" y2="0"><stop offset="0.000" stop-color="#001bff"/><stop offset="0.151" stop-color="#0a17ff"/><stop offset="1.000" stop-color="#6200ff"/></linearGradient><linearGradient id="i87" gradientUnits="userSpaceOnUse" x1="1189.1" x2="1278.3" y1="0" y2="0"><stop offset="0.000" stop-color="#0019ff"/><stop offset="0.157" stop-color="#0a15ff"/><stop offset="1.000" stop-color="#5d00ff"/></linearGradient><linearGradient id="i88" gradientUnits="userSpaceOnUse" x1="1189.6" x2="1275.4" y1="0" y2="0"><stop offset="0.000" stop-color="#0018ff"/><stop offset="0.163" stop-color="#0a14ff"/><stop offset="1.000" stop-color="#5800ff"/></linearGradient><linearGradient id="i89" gradientUnits="userSpaceOnUse" x1="1190.1" x2="1272.4" y1="0" y2="0"><stop offset="0.000" stop-color="#0017ff"/><stop offset="0.170" stop-color="#0a13ff"/><stop offset="1.000" stop-color="#5300ff"/></linearGradient><linearGradient id="i90" gradientUnits="userSpaceOnUse" x1="1190.6" x2="1269.5" y1="0" y2="0"><stop offset="0.000" stop-color="#0016ff"/><stop offset="0.203" stop-color="#0c11ff"/><stop offset="1.000" stop-color="#4e00ff"/></linearGradient><linearGradient id="i91" gradientUnits="userSpaceOnUse" x1="1191.0" x2="1266.5" y1="0" y2="0"><stop offset="0.000" stop-color="#0014ff"/><stop offset="0.212" stop-color="#0c10ff"/><stop offset="1.000" stop-color="#4a00ff"/></linearGradient><linearGradient id="i92" gradientUnits="userSpaceOnUse" x1="1191.5" x2="1263.6" y1="0" y2="0"><stop offset="0.000" stop-color="#0013ff"/><stop offset="0.222" stop-color="#0c0fff"/><stop offset="1.000" stop-color="#4500ff"/></linearGradient><linearGradient id="i93" gradientUnits="userSpaceOnUse" x1="1192.0" x2="1260.6" y1="0" y2="0"><stop offset="0.000" stop-color="#0012ff"/><stop offset="0.233" stop-color="#0c0dff"/><stop offset="1.000" stop-color="#4100ff"/></linearGradient><linearGradient id="i94" gradientUnits="userSpaceOnUse" x1="1192.5" x2="1257.6" y1="0" y2="0"><stop offset="0.000" stop-color="#0011ff"/><stop offset="0.276" stop-color="#0d0cff"/><stop offset="1.000" stop-color="#3d00ff"/></linearGradient><linearGradient id="i95" gradientUnits="userSpaceOnUse" x1="1193.0" x2="1254.7" y1="0" y2="0"><stop offset="0.000" stop-color="#0010ff"/><stop offset="0.292" stop-color="#0d0bff"/><stop offset="1.000" stop-color="#3900ff"/></linearGradient><linearGradient id="i96" gradientUnits="userSpaceOnUse" x1="1193.5" x2="1251.7" y1="0" y2="0"><stop offset="0.000" stop-color="#000eff"/><stop offset="0.309" stop-color="#0d0aff"/><stop offset="1.000" stop-color="#3500ff"/></linearGradient><linearGradient id="i97" gradientUnits="userSpaceOnUse" x1="1194.0" x2="1248.8" y1="0" y2="0"><stop offset="0.000" stop-color="#000dff"/><stop offset="0.365" stop-color="#0f08ff"/><stop offset="1.000" stop-color="#3100ff"/></linearGradient><linearGradient id="i98" gradientUnits="userSpaceOnUse" x1="1194.5" x2="1245.8" y1="0" y2="0"><stop offset="0.000" stop-color="#000cff"/><stop offset="0.389" stop-color="#0f07ff"/><stop offset="1.000" stop-color="#2d00ff"/></linearGradient><linearGradient id="i99" gradientUnits="userSpaceOnUse" x1="1194.9" x2="1242.9" y1="0" y2="0"><stop offset="0.000" stop-color="#000bff"/><stop offset="0.417" stop-color="#0f06ff"/><stop offset="1.000" stop-color="#2900ff"/></linearGradient><linearGradient id="i100" gradientUnits="userSpaceOnUse" x1="1195.4" x2="1239.9" y1="0" y2="0"><stop offset="0.000" stop-color="#000aff"/><stop offset="0.494" stop-color="#1004ff"/><stop offset="1.000" stop-color="#2600ff"/></linearGradient><linearGradient id="i101" gradientUnits="userSpaceOnUse" x1="1195.9" x2="1237.0" y1="0" y2="0"><stop offset="0.000" stop-color="#0009ff"/><stop offset="0.536" stop-color="#1003ff"/><stop offset="1.000" stop-color="#2200ff"/></linearGradient><linearGradient id="i102" gradientUnits="userSpaceOnUse" x1="1196.4" x2="1234.0" y1="0" y2="0"><stop offset="0.000" stop-color="#0008ff"/><stop offset="0.638" stop-color="#1202ff"/><stop offset="1.000" stop-color="#1e00ff"/></linearGradient><linearGradient id="i103" gradientUnits="userSpaceOnUse" x1="1196.9" x2="1231.1" y1="0" y2="0"><stop offset="0.000" stop-color="#0007ff"/><stop offset="0.702" stop-color="#1201ff"/><stop offset="1.000" stop-color="#1b00ff"/></linearGradient><linearGradient id="i104" gradientUnits="userSpaceOnUse" x1="1197.4" x2="1228.1" y1="0" y2="0"><stop offset="0.000" stop-color="#0006ff"/><stop offset="0.780" stop-color="#1200ff"/><stop offset="1.000" stop-color="#1800ff"/></linearGradient><linearGradient id="i105" gradientUnits="userSpaceOnUse" x1="1197.9" x2="1225.2" y1="0" y2="0"><stop offset="0.000" stop-color="#0005ff"/><stop offset="0.952" stop-color="#1300ff"/><stop offset="1.000" stop-color="#1400ff"/></linearGradient><linearGradient id="i106" gradientUnits="userSpaceOnUse" x1="1198.3" x2="1222.2" y1="0" y2="0"><stop offset="0.000" stop-color="#0005ff"/><stop offset="1.000" stop-color="#1100ff"/></linearGradient><linearGradient id="i107" gradientUnits="userSpaceOnUse" x1="1198.8" x2="1219.3" y1="0" y2="0"><stop offset="0.000" stop-color="#0004ff"/><stop offset="1.000" stop-color="#0e00ff"/></linearGradient><linearGradient id="i108" gradientUnits="userSpaceOnUse" x1="1199.3" x2="1216.3" y1="0" y2="0"><stop offset="0.000" stop-color="#0003ff"/><stop offset="1.000" stop-color="#0b00ff"/></linearGradient><linearGradient id="i109" gradientUnits="userSpaceOnUse" x1="1199.8" x2="1213.4" y1="0" y2="0"><stop offset="0.000" stop-color="#0002ff"/><stop offset="1.000" stop-color="#0800ff"/></linearGradient><linearGradient id="i110" gradientUnits="userSpaceOnUse" x1="1200.3" x2="1210.4" y1="0" y2="0"><stop offset="0.000" stop-color="#0001ff"/><stop offset="1.000" stop-color="#0500ff"/></linearGradient></defs>
<g clip-path="url(#cpb)"><g clip-path="url(#cpl)"><rect x="1038.6" y="130.50" width="88.6" height="3.60" fill="url(#o0)"/><rect x="1030.7" y="133.50" width="127.7" height="3.60" fill="url(#o1)"/><rect x="1026.3" y="136.50" width="160.2" height="3.60" fill="url(#o2)"/><rect x="1023.3" y="139.50" width="190.2" height="3.60" fill="url(#o3)"/><rect x="1021.0" y="142.50" width="219.1" height="3.60" fill="url(#o4)"/><rect x="1019.3" y="145.50" width="247.0" height="3.60" fill="url(#o5)"/><rect x="1018.1" y="148.50" width="274.4" height="3.60" fill="url(#o6)"/><rect x="1018.0" y="151.50" width="300.6" height="3.60" fill="url(#o7)"/><rect x="1018.0" y="154.50" width="326.8" height="3.60" fill="url(#o8)"/><rect x="1018.0" y="157.50" width="353.1" height="3.60" fill="url(#o9)"/><rect x="1018.0" y="160.50" width="379.2" height="3.60" fill="url(#o10)"/><rect x="1018.0" y="163.50" width="405.3" height="3.60" fill="url(#o11)"/><rect x="1018.0" y="166.50" width="431.5" height="3.60" fill="url(#o12)"/><rect x="1018.0" y="169.50" width="457.6" height="3.60" fill="url(#o13)"/><rect x="1018.0" y="172.50" width="484.0" height="3.60" fill="url(#o14)"/><rect x="1018.0" y="175.50" width="510.3" height="3.60" fill="url(#o15)"/><rect x="1018.0" y="178.50" width="536.4" height="3.60" fill="url(#o16)"/><rect x="1018.0" y="181.50" width="562.5" height="3.60" fill="url(#o17)"/><rect x="1018.0" y="184.50" width="588.8" height="3.60" fill="url(#o18)"/><rect x="1018.0" y="187.50" width="614.8" height="3.60" fill="url(#o19)"/><rect x="1018.0" y="190.50" width="640.0" height="3.60" fill="url(#o20)"/><rect x="1018.0" y="193.50" width="640.0" height="3.60" fill="url(#o21)"/><rect x="1018.4" y="196.50" width="639.6" height="3.60" fill="url(#o22)"/><rect x="1019.0" y="199.50" width="639.0" height="3.60" fill="url(#o23)"/><rect x="1019.6" y="202.50" width="638.4" height="3.60" fill="url(#o24)"/><rect x="1020.3" y="205.50" width="637.7" height="3.60" fill="url(#o25)"/><rect x="1021.1" y="208.50" width="636.9" height="3.60" fill="url(#o26)"/><rect x="1021.8" y="211.50" width="636.2" height="3.60" fill="url(#o27)"/><rect x="1022.7" y="214.50" width="635.3" height="3.60" fill="url(#o28)"/><rect x="1023.5" y="217.50" width="634.5" height="3.60" fill="url(#o29)"/><rect x="1024.3" y="220.50" width="633.7" height="3.60" fill="url(#o30)"/><rect x="1025.3" y="223.50" width="632.7" height="3.60" fill="url(#o31)"/><rect x="1026.2" y="226.50" width="631.3" height="3.60" fill="url(#o32)"/><rect x="1027.1" y="229.50" width="627.4" height="3.60" fill="url(#o33)"/><rect x="1028.1" y="232.50" width="623.5" height="3.60" fill="url(#o34)"/><rect x="1029.1" y="235.50" width="619.6" height="3.60" fill="url(#o35)"/><rect x="1030.1" y="238.50" width="615.6" height="3.60" fill="url(#o36)"/><rect x="1031.1" y="241.50" width="611.7" height="3.60" fill="url(#o37)"/><rect x="1032.2" y="244.50" width="607.7" height="3.60" fill="url(#o38)"/><rect x="1033.2" y="247.50" width="603.7" height="3.60" fill="url(#o39)"/><rect x="1034.3" y="250.50" width="599.7" height="3.60" fill="url(#o40)"/><rect x="1035.4" y="253.50" width="595.7" height="3.60" fill="url(#o41)"/><rect x="1036.5" y="256.50" width="591.6" height="3.60" fill="url(#o42)"/><rect x="1037.7" y="259.50" width="587.6" height="3.60" fill="url(#o43)"/><rect x="1038.8" y="262.50" width="583.5" height="3.60" fill="url(#o44)"/><rect x="1040.0" y="265.50" width="579.4" height="3.60" fill="url(#o45)"/><rect x="1041.2" y="268.50" width="575.3" height="3.60" fill="url(#o46)"/><rect x="1042.4" y="271.50" width="571.1" height="3.60" fill="url(#o47)"/><rect x="1043.6" y="274.50" width="567.0" height="3.60" fill="url(#o48)"/><rect x="1044.9" y="277.50" width="562.8" height="3.60" fill="url(#o49)"/><rect x="1046.1" y="280.50" width="558.6" height="3.60" fill="url(#o50)"/><rect x="1047.4" y="283.50" width="554.5" height="3.60" fill="url(#o51)"/><rect x="1048.6" y="286.50" width="550.3" height="3.60" fill="url(#o52)"/><rect x="1049.9" y="289.50" width="546.0" height="3.60" fill="url(#o53)"/><rect x="1051.2" y="292.50" width="541.8" height="3.60" fill="url(#o54)"/><rect x="1052.5" y="295.50" width="537.6" height="3.60" fill="url(#o55)"/><rect x="1053.9" y="298.50" width="533.3" height="3.60" fill="url(#o56)"/><rect x="1055.2" y="301.50" width="529.0" height="3.60" fill="url(#o57)"/><rect x="1056.6" y="304.50" width="524.8" height="3.60" fill="url(#o58)"/><rect x="1057.9" y="307.50" width="520.5" height="3.60" fill="url(#o59)"/><rect x="1059.3" y="310.50" width="516.2" height="3.60" fill="url(#o60)"/><rect x="1060.7" y="313.50" width="511.8" height="3.60" fill="url(#o61)"/><rect x="1062.1" y="316.50" width="507.5" height="3.60" fill="url(#o62)"/><rect x="1063.5" y="319.50" width="503.2" height="3.60" fill="url(#o63)"/><rect x="1065.0" y="322.50" width="498.8" height="3.60" fill="url(#o64)"/><rect x="1066.5" y="325.50" width="494.4" height="3.60" fill="url(#o65)"/><rect x="1067.9" y="328.50" width="490.0" height="3.60" fill="url(#o66)"/><rect x="1069.4" y="331.50" width="485.5" height="3.60" fill="url(#o67)"/><rect x="1071.0" y="334.50" width="481.1" height="3.60" fill="url(#o68)"/><rect x="1072.5" y="337.50" width="476.6" height="3.60" fill="url(#o69)"/><rect x="1074.1" y="340.50" width="472.1" height="3.60" fill="url(#o70)"/><rect x="1075.7" y="343.50" width="467.6" height="3.60" fill="url(#o71)"/><rect x="1077.3" y="346.50" width="463.0" height="3.60" fill="url(#o72)"/><rect x="1078.9" y="349.50" width="458.5" height="3.60" fill="url(#o73)"/><rect x="1080.6" y="352.50" width="453.9" height="3.60" fill="url(#o74)"/><rect x="1082.2" y="355.50" width="449.3" height="3.60" fill="url(#o75)"/><rect x="1083.9" y="358.50" width="444.7" height="3.60" fill="url(#o76)"/><rect x="1085.6" y="361.50" width="440.1" height="3.60" fill="url(#o77)"/><rect x="1087.3" y="364.50" width="435.5" height="3.60" fill="url(#o78)"/><rect x="1089.0" y="367.50" width="430.9" height="3.60" fill="url(#o79)"/><rect x="1090.7" y="370.50" width="426.2" height="3.60" fill="url(#o80)"/><rect x="1092.4" y="373.50" width="421.6" height="3.60" fill="url(#o81)"/><rect x="1094.1" y="376.50" width="416.9" height="3.60" fill="url(#o82)"/><rect x="1095.9" y="379.50" width="412.3" height="3.60" fill="url(#o83)"/><rect x="1097.6" y="382.50" width="407.6" height="3.60" fill="url(#o84)"/><rect x="1099.4" y="385.50" width="402.9" height="3.60" fill="url(#o85)"/><rect x="1101.1" y="388.50" width="398.2" height="3.60" fill="url(#o86)"/><rect x="1102.9" y="391.50" width="393.5" height="3.60" fill="url(#o87)"/><rect x="1104.7" y="394.50" width="388.8" height="3.60" fill="url(#o88)"/><rect x="1106.5" y="397.50" width="384.1" height="3.60" fill="url(#o89)"/><rect x="1108.3" y="400.50" width="379.3" height="3.60" fill="url(#o90)"/><rect x="1110.1" y="403.50" width="374.6" height="3.60" fill="url(#o91)"/><rect x="1111.9" y="406.50" width="369.8" height="3.60" fill="url(#o92)"/><rect x="1113.8" y="409.50" width="365.1" height="3.60" fill="url(#o93)"/><rect x="1115.6" y="412.50" width="360.3" height="3.60" fill="url(#o94)"/><rect x="1117.5" y="415.50" width="355.5" height="3.60" fill="url(#o95)"/><rect x="1119.4" y="418.50" width="350.7" height="3.60" fill="url(#o96)"/><rect x="1121.2" y="421.50" width="345.9" height="3.60" fill="url(#o97)"/><rect x="1123.1" y="424.50" width="341.1" height="3.60" fill="url(#o98)"/><rect x="1125.1" y="427.50" width="336.2" height="3.60" fill="url(#o99)"/><rect x="1127.0" y="430.50" width="331.4" height="3.60" fill="url(#o100)"/><rect x="1128.9" y="433.50" width="326.5" height="3.60" fill="url(#o101)"/><rect x="1130.9" y="436.50" width="321.6" height="3.60" fill="url(#o102)"/><rect x="1132.8" y="439.50" width="316.7" height="3.60" fill="url(#o103)"/><rect x="1134.8" y="442.50" width="311.8" height="3.60" fill="url(#o104)"/><rect x="1136.8" y="445.50" width="306.9" height="3.60" fill="url(#o105)"/><rect x="1138.8" y="448.50" width="301.9" height="3.60" fill="url(#o106)"/><rect x="1140.9" y="451.50" width="297.0" height="3.60" fill="url(#o107)"/><rect x="1142.9" y="454.50" width="292.0" height="3.60" fill="url(#o108)"/><rect x="1145.0" y="457.50" width="287.0" height="3.60" fill="url(#o109)"/><rect x="1147.1" y="460.50" width="281.9" height="3.60" fill="url(#o110)"/><rect x="1149.2" y="463.50" width="276.9" height="3.60" fill="url(#o111)"/><rect x="1151.4" y="466.50" width="271.8" height="3.60" fill="url(#o112)"/><rect x="1153.6" y="469.50" width="266.7" height="3.60" fill="url(#o113)"/><rect x="1155.8" y="472.50" width="261.6" height="3.60" fill="url(#o114)"/><rect x="1158.0" y="475.50" width="256.4" height="3.60" fill="url(#o115)"/><rect x="1160.2" y="478.50" width="251.3" height="3.60" fill="url(#o116)"/><rect x="1162.5" y="481.50" width="246.1" height="3.60" fill="url(#o117)"/><rect x="1164.7" y="484.50" width="240.9" height="3.60" fill="url(#o118)"/><rect x="1167.0" y="487.50" width="235.7" height="3.60" fill="url(#o119)"/><rect x="1169.3" y="490.50" width="230.4" height="3.60" fill="url(#o120)"/><rect x="1171.7" y="493.50" width="225.2" height="3.60" fill="url(#o121)"/><rect x="1174.1" y="496.50" width="219.9" height="3.60" fill="url(#o122)"/><rect x="1176.5" y="499.50" width="214.5" height="3.60" fill="url(#o123)"/><rect x="1178.9" y="502.50" width="209.1" height="3.60" fill="url(#o124)"/><rect x="1181.5" y="505.50" width="203.7" height="3.60" fill="url(#o125)"/><rect x="1184.0" y="508.50" width="198.2" height="3.60" fill="url(#o126)"/><rect x="1186.6" y="511.50" width="192.7" height="3.60" fill="url(#o127)"/><rect x="1189.2" y="514.50" width="187.2" height="3.60" fill="url(#o128)"/><rect x="1191.8" y="517.50" width="181.6" height="3.60" fill="url(#o129)"/><rect x="1194.5" y="520.50" width="176.0" height="3.60" fill="url(#o130)"/><rect x="1197.2" y="523.50" width="170.3" height="3.60" fill="url(#o131)"/><rect x="1200.1" y="526.50" width="164.6" height="3.60" fill="url(#o132)"/><rect x="1203.0" y="529.50" width="158.7" height="3.60" fill="url(#o133)"/><rect x="1206.0" y="532.50" width="152.8" height="3.60" fill="url(#o134)"/><rect x="1209.1" y="535.50" width="146.8" height="3.60" fill="url(#o135)"/><rect x="1212.2" y="538.50" width="140.7" height="3.60" fill="url(#o136)"/><rect x="1215.3" y="541.50" width="134.7" height="3.60" fill="url(#o137)"/><rect x="1218.6" y="544.50" width="128.5" height="3.60" fill="url(#o138)"/><rect x="1221.9" y="547.50" width="122.3" height="3.60" fill="url(#o139)"/><rect x="1225.3" y="550.50" width="116.0" height="3.60" fill="url(#o140)"/><rect x="1228.7" y="553.50" width="109.6" height="3.60" fill="url(#o141)"/><rect x="1232.2" y="556.50" width="103.2" height="3.60" fill="url(#o142)"/><rect x="1235.7" y="559.50" width="96.7" height="3.60" fill="url(#o143)"/><rect x="1239.4" y="562.50" width="90.2" height="3.60" fill="url(#o144)"/><rect x="1243.0" y="565.50" width="83.6" height="3.60" fill="url(#o145)"/><rect x="1246.7" y="568.50" width="77.0" height="3.60" fill="url(#o146)"/><rect x="1250.3" y="571.50" width="70.4" height="3.60" fill="url(#o147)"/><rect x="1254.0" y="574.50" width="63.8" height="3.60" fill="url(#o148)"/><rect x="1257.7" y="577.50" width="57.2" height="3.60" fill="url(#o149)"/><rect x="1261.3" y="580.50" width="50.6" height="3.60" fill="url(#o150)"/><rect x="1264.9" y="583.50" width="44.1" height="3.60" fill="url(#o151)"/><rect x="1268.4" y="586.50" width="37.7" height="3.60" fill="url(#o152)"/><rect x="1272.0" y="589.50" width="31.1" height="3.60" fill="url(#o153)"/><rect x="1275.8" y="592.50" width="24.5" height="3.60" fill="url(#o154)"/><rect x="1279.7" y="595.50" width="17.6" height="3.60" fill="url(#o155)"/><g clip-path="url(#cpt)"><rect x="1147.0" y="150.32" width="34.7" height="3.60" fill="url(#i0)"/><rect x="1147.2" y="153.32" width="66.8" height="3.60" fill="url(#i1)"/><rect x="1147.7" y="156.32" width="98.5" height="3.60" fill="url(#i2)"/><rect x="1148.1" y="159.32" width="130.2" height="3.60" fill="url(#i3)"/><rect x="1148.6" y="162.32" width="161.8" height="3.60" fill="url(#i4)"/><rect x="1149.1" y="165.32" width="193.5" height="3.60" fill="url(#i5)"/><rect x="1149.6" y="168.32" width="225.2" height="3.60" fill="url(#i6)"/><rect x="1150.1" y="171.32" width="256.9" height="3.60" fill="url(#i7)"/><rect x="1150.6" y="174.32" width="288.6" height="3.60" fill="url(#i8)"/><rect x="1151.1" y="177.32" width="320.3" height="3.60" fill="url(#i9)"/><rect x="1151.6" y="180.32" width="350.1" height="3.60" fill="url(#i10)"/><rect x="1152.0" y="183.32" width="349.3" height="3.60" fill="url(#i11)"/><rect x="1152.5" y="186.32" width="347.1" height="3.60" fill="url(#i12)"/><rect x="1153.0" y="189.32" width="343.7" height="3.60" fill="url(#i13)"/><rect x="1153.5" y="192.32" width="340.3" height="3.60" fill="url(#i14)"/><rect x="1154.0" y="195.32" width="336.8" height="3.60" fill="url(#i15)"/><rect x="1154.5" y="198.32" width="333.4" height="3.60" fill="url(#i16)"/><rect x="1155.0" y="201.32" width="329.9" height="3.60" fill="url(#i17)"/><rect x="1155.5" y="204.32" width="326.5" height="3.60" fill="url(#i18)"/><rect x="1155.9" y="207.32" width="323.1" height="3.60" fill="url(#i19)"/><rect x="1156.4" y="210.32" width="319.6" height="3.60" fill="url(#i20)"/><rect x="1156.9" y="213.32" width="316.2" height="3.60" fill="url(#i21)"/><rect x="1157.4" y="216.32" width="312.7" height="3.60" fill="url(#i22)"/><rect x="1157.9" y="219.32" width="309.3" height="3.60" fill="url(#i23)"/><rect x="1158.4" y="222.32" width="305.9" height="3.60" fill="url(#i24)"/><rect x="1158.9" y="225.32" width="302.4" height="3.60" fill="url(#i25)"/><rect x="1159.4" y="228.32" width="299.0" height="3.60" fill="url(#i26)"/><rect x="1159.8" y="231.32" width="295.6" height="3.60" fill="url(#i27)"/><rect x="1160.3" y="234.32" width="292.1" height="3.60" fill="url(#i28)"/><rect x="1160.8" y="237.32" width="288.7" height="3.60" fill="url(#i29)"/><rect x="1161.3" y="240.32" width="285.2" height="3.60" fill="url(#i30)"/><rect x="1161.8" y="243.32" width="281.8" height="3.60" fill="url(#i31)"/><rect x="1162.3" y="246.32" width="278.4" height="3.60" fill="url(#i32)"/><rect x="1162.8" y="249.32" width="274.9" height="3.60" fill="url(#i33)"/><rect x="1163.3" y="252.32" width="271.5" height="3.60" fill="url(#i34)"/><rect x="1163.7" y="255.32" width="268.0" height="3.60" fill="url(#i35)"/><rect x="1164.2" y="258.32" width="264.6" height="3.60" fill="url(#i36)"/><rect x="1164.7" y="261.32" width="261.2" height="3.60" fill="url(#i37)"/><rect x="1165.2" y="264.32" width="257.7" height="3.60" fill="url(#i38)"/><rect x="1165.7" y="267.32" width="254.3" height="3.60" fill="url(#i39)"/><rect x="1166.2" y="270.32" width="250.8" height="3.60" fill="url(#i40)"/><rect x="1166.7" y="273.32" width="247.4" height="3.60" fill="url(#i41)"/><rect x="1167.2" y="276.32" width="244.0" height="3.60" fill="url(#i42)"/><rect x="1167.6" y="279.32" width="240.5" height="3.60" fill="url(#i43)"/><rect x="1168.1" y="282.32" width="237.1" height="3.60" fill="url(#i44)"/><rect x="1168.6" y="285.32" width="233.7" height="3.60" fill="url(#i45)"/><rect x="1169.1" y="288.32" width="230.2" height="3.60" fill="url(#i46)"/><rect x="1169.6" y="291.32" width="226.8" height="3.60" fill="url(#i47)"/><rect x="1170.1" y="294.32" width="223.3" height="3.60" fill="url(#i48)"/><rect x="1170.6" y="297.32" width="219.9" height="3.60" fill="url(#i49)"/><rect x="1171.1" y="300.32" width="216.5" height="3.60" fill="url(#i50)"/><rect x="1171.5" y="303.32" width="213.0" height="3.60" fill="url(#i51)"/><rect x="1172.0" y="306.32" width="209.6" height="3.60" fill="url(#i52)"/><rect x="1172.5" y="309.32" width="206.1" height="3.60" fill="url(#i53)"/><rect x="1173.0" y="312.32" width="202.7" height="3.60" fill="url(#i54)"/><rect x="1173.5" y="315.32" width="199.3" height="3.60" fill="url(#i55)"/><rect x="1174.0" y="318.32" width="195.8" height="3.60" fill="url(#i56)"/><rect x="1174.5" y="321.32" width="192.4" height="3.60" fill="url(#i57)"/><rect x="1175.0" y="324.32" width="188.9" height="3.60" fill="url(#i58)"/><rect x="1175.4" y="327.32" width="185.5" height="3.60" fill="url(#i59)"/><rect x="1175.9" y="330.32" width="182.1" height="3.60" fill="url(#i60)"/><rect x="1176.4" y="333.32" width="178.6" height="3.60" fill="url(#i61)"/><rect x="1176.9" y="336.32" width="175.2" height="3.60" fill="url(#i62)"/><rect x="1177.4" y="339.32" width="171.8" height="3.60" fill="url(#i63)"/><rect x="1177.9" y="342.32" width="168.3" height="3.60" fill="url(#i64)"/><rect x="1178.4" y="345.32" width="164.9" height="3.60" fill="url(#i65)"/><rect x="1178.9" y="348.32" width="161.4" height="3.60" fill="url(#i66)"/><rect x="1179.3" y="351.32" width="158.0" height="3.60" fill="url(#i67)"/><rect x="1179.8" y="354.32" width="154.6" height="3.60" fill="url(#i68)"/><rect x="1180.3" y="357.32" width="151.1" height="3.60" fill="url(#i69)"/><rect x="1180.8" y="360.32" width="147.7" height="3.60" fill="url(#i70)"/><rect x="1181.3" y="363.32" width="144.2" height="3.60" fill="url(#i71)"/><rect x="1181.8" y="366.32" width="140.8" height="3.60" fill="url(#i72)"/><rect x="1182.3" y="369.32" width="137.4" height="3.60" fill="url(#i73)"/><rect x="1182.8" y="372.32" width="133.9" height="3.60" fill="url(#i74)"/><rect x="1183.2" y="375.32" width="130.5" height="3.60" fill="url(#i75)"/><rect x="1183.7" y="378.32" width="127.0" height="3.60" fill="url(#i76)"/><rect x="1184.2" y="381.32" width="123.6" height="3.60" fill="url(#i77)"/><rect x="1184.7" y="384.32" width="120.2" height="3.60" fill="url(#i78)"/><rect x="1185.2" y="387.32" width="116.7" height="3.60" fill="url(#i79)"/><rect x="1185.7" y="390.32" width="113.3" height="3.60" fill="url(#i80)"/><rect x="1186.2" y="393.32" width="109.9" height="3.60" fill="url(#i81)"/><rect x="1186.7" y="396.32" width="106.4" height="3.60" fill="url(#i82)"/><rect x="1187.1" y="399.32" width="103.0" height="3.60" fill="url(#i83)"/><rect x="1187.6" y="402.32" width="99.5" height="3.60" fill="url(#i84)"/><rect x="1188.1" y="405.32" width="96.1" height="3.60" fill="url(#i85)"/><rect x="1188.6" y="408.32" width="92.7" height="3.60" fill="url(#i86)"/><rect x="1189.1" y="411.32" width="89.2" height="3.60" fill="url(#i87)"/><rect x="1189.6" y="414.32" width="85.8" height="3.60" fill="url(#i88)"/><rect x="1190.1" y="417.32" width="82.3" height="3.60" fill="url(#i89)"/><rect x="1190.6" y="420.32" width="78.9" height="3.60" fill="url(#i90)"/><rect x="1191.0" y="423.32" width="75.5" height="3.60" fill="url(#i91)"/><rect x="1191.5" y="426.32" width="72.0" height="3.60" fill="url(#i92)"/><rect x="1192.0" y="429.32" width="68.6" height="3.60" fill="url(#i93)"/><rect x="1192.5" y="432.32" width="65.1" height="3.60" fill="url(#i94)"/><rect x="1193.0" y="435.32" width="61.7" height="3.60" fill="url(#i95)"/><rect x="1193.5" y="438.32" width="58.3" height="3.60" fill="url(#i96)"/><rect x="1194.0" y="441.32" width="54.8" height="3.60" fill="url(#i97)"/><rect x="1194.5" y="444.32" width="51.4" height="3.60" fill="url(#i98)"/><rect x="1194.9" y="447.32" width="48.0" height="3.60" fill="url(#i99)"/><rect x="1195.4" y="450.32" width="44.5" height="3.60" fill="url(#i100)"/><rect x="1195.9" y="453.32" width="41.1" height="3.60" fill="url(#i101)"/><rect x="1196.4" y="456.32" width="37.6" height="3.60" fill="url(#i102)"/><rect x="1196.9" y="459.32" width="34.2" height="3.60" fill="url(#i103)"/><rect x="1197.4" y="462.32" width="30.8" height="3.60" fill="url(#i104)"/><rect x="1197.9" y="465.32" width="27.3" height="3.60" fill="url(#i105)"/><rect x="1198.3" y="468.32" width="23.9" height="3.60" fill="url(#i106)"/><rect x="1198.8" y="471.32" width="20.4" height="3.60" fill="url(#i107)"/><rect x="1199.3" y="474.32" width="17.0" height="3.60" fill="url(#i108)"/><rect x="1199.8" y="477.32" width="13.6" height="3.60" fill="url(#i109)"/><rect x="1200.3" y="480.32" width="10.1" height="3.60" fill="url(#i110)"/></g></g></g>
<rect x="1018" y="120" width="640" height="491" fill="none" stroke="#a0a0a0" stroke-width="1.6"/>
<text x="1320" y="113" font-size="14" fill="#d0d0d0" text-anchor="middle" font-weight="normal" stroke="#d0d0d0" stroke-width="0.35" >CIE 1976 u'v'</text>
<line x1="1012" y1="610.6" x2="1018" y2="610.6" stroke="#9c9c9c" stroke-width="1.6" />
<text x="1011" y="615.6" font-size="14" fill="#dcdcdc" text-anchor="end" font-weight="normal" stroke="#dcdcdc" stroke-width="0.35" >0</text>
<line x1="1017.8" y1="611" x2="1017.8" y2="618" stroke="#9c9c9c" stroke-width="1.6" />
<text x="1017.8" y="633" font-size="14" fill="#dcdcdc" text-anchor="middle" font-weight="normal" stroke="#dcdcdc" stroke-width="0.35" >0</text>
<line x1="1012" y1="569.775" x2="1018" y2="569.775" stroke="#9c9c9c" stroke-width="1.6" />
<text x="1011" y="574.775" font-size="14" fill="#dcdcdc" text-anchor="end" font-weight="normal" stroke="#dcdcdc" stroke-width="0.35" >0,05</text>
<line x1="1071.05" y1="611" x2="1071.05" y2="618" stroke="#9c9c9c" stroke-width="1.6" />
<text x="1071.05" y="633" font-size="14" fill="#dcdcdc" text-anchor="middle" font-weight="normal" stroke="#dcdcdc" stroke-width="0.35" >0,05</text>
<line x1="1012" y1="528.95" x2="1018" y2="528.95" stroke="#9c9c9c" stroke-width="1.6" />
<text x="1011" y="533.95" font-size="14" fill="#dcdcdc" text-anchor="end" font-weight="normal" stroke="#dcdcdc" stroke-width="0.35" >0,1</text>
<line x1="1124.3" y1="611" x2="1124.3" y2="618" stroke="#9c9c9c" stroke-width="1.6" />
<text x="1124.3" y="633" font-size="14" fill="#dcdcdc" text-anchor="middle" font-weight="normal" stroke="#dcdcdc" stroke-width="0.35" >0,1</text>
<line x1="1012" y1="488.125" x2="1018" y2="488.125" stroke="#9c9c9c" stroke-width="1.6" />
<text x="1011" y="493.125" font-size="14" fill="#dcdcdc" text-anchor="end" font-weight="normal" stroke="#dcdcdc" stroke-width="0.35" >0,15</text>
<line x1="1177.55" y1="611" x2="1177.55" y2="618" stroke="#9c9c9c" stroke-width="1.6" />
<text x="1177.55" y="633" font-size="14" fill="#dcdcdc" text-anchor="middle" font-weight="normal" stroke="#dcdcdc" stroke-width="0.35" >0,15</text>
<line x1="1012" y1="447.3" x2="1018" y2="447.3" stroke="#9c9c9c" stroke-width="1.6" />
<text x="1011" y="452.3" font-size="14" fill="#dcdcdc" text-anchor="end" font-weight="normal" stroke="#dcdcdc" stroke-width="0.35" >0,2</text>
<line x1="1230.8" y1="611" x2="1230.8" y2="618" stroke="#9c9c9c" stroke-width="1.6" />
<text x="1230.8" y="633" font-size="14" fill="#dcdcdc" text-anchor="middle" font-weight="normal" stroke="#dcdcdc" stroke-width="0.35" >0,2</text>
<line x1="1012" y1="406.475" x2="1018" y2="406.475" stroke="#9c9c9c" stroke-width="1.6" />
<text x="1011" y="411.475" font-size="14" fill="#dcdcdc" text-anchor="end" font-weight="normal" stroke="#dcdcdc" stroke-width="0.35" >0,25</text>
<line x1="1284.05" y1="611" x2="1284.05" y2="618" stroke="#9c9c9c" stroke-width="1.6" />
<text x="1284.05" y="633" font-size="14" fill="#dcdcdc" text-anchor="middle" font-weight="normal" stroke="#dcdcdc" stroke-width="0.35" >0,25</text>
<line x1="1012" y1="365.65" x2="1018" y2="365.65" stroke="#9c9c9c" stroke-width="1.6" />
<text x="1011" y="370.65" font-size="14" fill="#dcdcdc" text-anchor="end" font-weight="normal" stroke="#dcdcdc" stroke-width="0.35" >0,3</text>
<line x1="1337.3" y1="611" x2="1337.3" y2="618" stroke="#9c9c9c" stroke-width="1.6" />
<text x="1337.3" y="633" font-size="14" fill="#dcdcdc" text-anchor="middle" font-weight="normal" stroke="#dcdcdc" stroke-width="0.35" >0,3</text>
<line x1="1012" y1="324.825" x2="1018" y2="324.825" stroke="#9c9c9c" stroke-width="1.6" />
<text x="1011" y="329.825" font-size="14" fill="#dcdcdc" text-anchor="end" font-weight="normal" stroke="#dcdcdc" stroke-width="0.35" >0,35</text>
<line x1="1390.55" y1="611" x2="1390.55" y2="618" stroke="#9c9c9c" stroke-width="1.6" />
<text x="1390.55" y="633" font-size="14" fill="#dcdcdc" text-anchor="middle" font-weight="normal" stroke="#dcdcdc" stroke-width="0.35" >0,35</text>
<line x1="1012" y1="284.0" x2="1018" y2="284.0" stroke="#9c9c9c" stroke-width="1.6" />
<text x="1011" y="289.0" font-size="14" fill="#dcdcdc" text-anchor="end" font-weight="normal" stroke="#dcdcdc" stroke-width="0.35" >0,4</text>
<line x1="1443.8" y1="611" x2="1443.8" y2="618" stroke="#9c9c9c" stroke-width="1.6" />
<text x="1443.8" y="633" font-size="14" fill="#dcdcdc" text-anchor="middle" font-weight="normal" stroke="#dcdcdc" stroke-width="0.35" >0,4</text>
<line x1="1012" y1="243.175" x2="1018" y2="243.175" stroke="#9c9c9c" stroke-width="1.6" />
<text x="1011" y="248.175" font-size="14" fill="#dcdcdc" text-anchor="end" font-weight="normal" stroke="#dcdcdc" stroke-width="0.35" >0,45</text>
<line x1="1497.05" y1="611" x2="1497.05" y2="618" stroke="#9c9c9c" stroke-width="1.6" />
<text x="1497.05" y="633" font-size="14" fill="#dcdcdc" text-anchor="middle" font-weight="normal" stroke="#dcdcdc" stroke-width="0.35" >0,45</text>
<line x1="1012" y1="202.35000000000002" x2="1018" y2="202.35000000000002" stroke="#9c9c9c" stroke-width="1.6" />
<text x="1011" y="207.35000000000002" font-size="14" fill="#dcdcdc" text-anchor="end" font-weight="normal" stroke="#dcdcdc" stroke-width="0.35" >0,5</text>
<line x1="1550.3" y1="611" x2="1550.3" y2="618" stroke="#9c9c9c" stroke-width="1.6" />
<text x="1550.3" y="633" font-size="14" fill="#dcdcdc" text-anchor="middle" font-weight="normal" stroke="#dcdcdc" stroke-width="0.35" >0,5</text>
<line x1="1012" y1="161.52499999999998" x2="1018" y2="161.52499999999998" stroke="#9c9c9c" stroke-width="1.6" />
<text x="1011" y="166.52499999999998" font-size="14" fill="#dcdcdc" text-anchor="end" font-weight="normal" stroke="#dcdcdc" stroke-width="0.35" >0,55</text>
<line x1="1603.55" y1="611" x2="1603.55" y2="618" stroke="#9c9c9c" stroke-width="1.6" />
<text x="1603.55" y="633" font-size="14" fill="#dcdcdc" text-anchor="middle" font-weight="normal" stroke="#dcdcdc" stroke-width="0.35" >0,55</text>
<rect x="1402" y="579.5" width="252.5" height="27.5" fill="#333333" />
<text x="1403" y="601.5" font-size="20" fill="#f4f4f4" text-anchor="start" font-weight="normal" stroke="#f4f4f4" stroke-width="0.35" textLength="221" lengthAdjust="spacingAndGlyphs">Gamut Coverage:&#160;&#160;99,6%</text>
<rect x="1143.75" y="142.65" width="13.5" height="13.5" fill="none" stroke="#d8f0d8" stroke-width="2"/>
<circle cx="1150" cy="149.3" r="4.2" fill="#009a00" stroke="#000" stroke-width="1.2"/>
<rect x="1227.75" y="150.65" width="13.5" height="13.5" fill="none" stroke="#f0f0c0" stroke-width="2"/>
<circle cx="1234.4" cy="157.4" r="4.2" fill="#b8b000" stroke="#000" stroke-width="1.2"/>
<rect x="1490.55" y="174.75" width="13.5" height="13.5" fill="none" stroke="#f8e0e0" stroke-width="2"/>
<circle cx="1505.4" cy="180.3" r="4.2" fill="#c00000" stroke="#000" stroke-width="1.2"/>
<rect x="1221.0" y="219.9" width="13" height="13" fill="none" stroke="#000" stroke-width="2.2"/>
<circle cx="1226.6" cy="225.5" r="4.0" fill="#ffffff" stroke="#000" stroke-width="1.4"/>
<rect x="1158.85" y="230.75" width="13.5" height="13.5" fill="none" stroke="#e0f8f8" stroke-width="2"/>
<circle cx="1164" cy="235" r="4.2" fill="#10a8b0" stroke="#000" stroke-width="1.2"/>
<rect x="1335.75" y="332.55" width="13.5" height="13.5" fill="none" stroke="#f0d0f0" stroke-width="2"/>
<circle cx="1342" cy="339.8" r="4.2" fill="#9000a0" stroke="#000" stroke-width="1.2"/>
<rect x="1197.55" y="474.55" width="13.5" height="13.5" fill="none" stroke="#e8e8ff" stroke-width="2"/>
<circle cx="1197.9" cy="479" r="4.2" fill="#1010d0" stroke="#000" stroke-width="1.2"/>
<text x="14" y="712" font-size="28" fill="#f4f4f4" text-anchor="start" font-weight="normal" stroke="#f4f4f4" stroke-width="0.35" textLength="218" lengthAdjust="spacingAndGlyphs">Current Reading</text>
<text x="14" y="782" font-size="23" fill="#f4f4f4" text-anchor="start" font-weight="normal" stroke="#f4f4f4" stroke-width="0.35" textLength="103" lengthAdjust="spacingAndGlyphs">x: 0,3129</text>
<text x="171.5" y="782" font-size="23" fill="#f4f4f4" text-anchor="start" font-weight="normal" stroke="#f4f4f4" stroke-width="0.35" textLength="102" lengthAdjust="spacingAndGlyphs">y: 0,3326</text>
<text x="14" y="823" font-size="23" fill="#f4f4f4" text-anchor="start" font-weight="normal" stroke="#f4f4f4" stroke-width="0.35" textLength="111" lengthAdjust="spacingAndGlyphs">fL: 156,95</text>
<text x="14" y="863" font-size="23" fill="#f4f4f4" text-anchor="start" font-weight="normal" stroke="#f4f4f4" stroke-width="0.35" textLength="159" lengthAdjust="spacingAndGlyphs">cd/m²: 537,75</text>
<rect x="356.5" y="685.5" width="250.0" height="180.5" fill="#232323" />
<line x1="356.5" y1="704.4" x2="606.5" y2="704.4" stroke="#9c9c9c" stroke-width="1.6" />
<line x1="350.5" y1="704.4" x2="356.5" y2="704.4" stroke="#9c9c9c" stroke-width="2" />
<text x="350.5" y="709.9" font-size="14" fill="#dcdcdc" text-anchor="end" font-weight="normal" stroke="#dcdcdc" stroke-width="0.35" >104</text>
<line x1="356.5" y1="741.4" x2="606.5" y2="741.4" stroke="#9c9c9c" stroke-width="1.6" />
<line x1="350.5" y1="741.4" x2="356.5" y2="741.4" stroke="#9c9c9c" stroke-width="2" />
<text x="350.5" y="746.9" font-size="14" fill="#dcdcdc" text-anchor="end" font-weight="normal" stroke="#dcdcdc" stroke-width="0.35" >102</text>
<line x1="356.5" y1="777.4" x2="606.5" y2="777.4" stroke="#9c9c9c" stroke-width="1.6" />
<line x1="350.5" y1="777.4" x2="356.5" y2="777.4" stroke="#9c9c9c" stroke-width="2" />
<text x="350.5" y="782.9" font-size="14" fill="#dcdcdc" text-anchor="end" font-weight="normal" stroke="#dcdcdc" stroke-width="0.35" >100</text>
<line x1="356.5" y1="813.2" x2="606.5" y2="813.2" stroke="#9c9c9c" stroke-width="1.6" />
<line x1="350.5" y1="813.2" x2="356.5" y2="813.2" stroke="#9c9c9c" stroke-width="2" />
<text x="350.5" y="818.7" font-size="14" fill="#dcdcdc" text-anchor="end" font-weight="normal" stroke="#dcdcdc" stroke-width="0.35" >98</text>
<line x1="356.5" y1="849" x2="606.5" y2="849" stroke="#9c9c9c" stroke-width="1.6" />
<line x1="350.5" y1="849" x2="356.5" y2="849" stroke="#9c9c9c" stroke-width="2" />
<text x="350.5" y="854.5" font-size="14" fill="#dcdcdc" text-anchor="end" font-weight="normal" stroke="#dcdcdc" stroke-width="0.35" >96</text>
<rect x="356.5" y="685.5" width="250.0" height="180.5" fill="none" stroke="#9c9c9c" stroke-width="2"/>
<line x1="356.5" y1="866" x2="356.5" y2="872" stroke="#9c9c9c" stroke-width="2" />
<line x1="606.5" y1="866" x2="606.5" y2="872" stroke="#9c9c9c" stroke-width="2" />
<defs><linearGradient id="rb1" x1="0" x2="0" y1="0" y2="1"><stop offset="0" stop-color="#ff5656"/><stop offset="1" stop-color="#ff4040"/></linearGradient>
<linearGradient id="rb2" x1="0" x2="0" y1="0" y2="1"><stop offset="0" stop-color="#58ac58"/><stop offset="1" stop-color="#40a040"/></linearGradient>
<linearGradient id="rb3" x1="0" x2="0" y1="0" y2="1"><stop offset="0" stop-color="#5858ff"/><stop offset="1" stop-color="#4848ff"/></linearGradient></defs>
<rect x="381.5" y="790.5" width="65" height="76" fill="url(#rb1)" stroke="#000" stroke-width="1.6"/>
<rect x="447.5" y="771.5" width="65" height="95" fill="url(#rb2)" stroke="#000" stroke-width="1.6"/>
<rect x="514.5" y="794.5" width="65" height="72" fill="url(#rb3)" stroke="#000" stroke-width="1.6"/>
<rect x="356.5" y="865" width="250.0" height="2" fill="#9c9c9c"/>
<text x="466.3" y="681.5" font-size="14" fill="#d0d0d0" text-anchor="middle" font-weight="normal" stroke="#d0d0d0" stroke-width="0.35" >RGB Balance</text>
<text x="481.4" y="883" font-size="14" fill="#dcdcdc" text-anchor="middle" font-weight="normal" stroke="#dcdcdc" stroke-width="0.35" >100W</text>
<text x="806" y="672" font-size="14" fill="#d0d0d0" text-anchor="middle" font-weight="normal" stroke="#d0d0d0" stroke-width="0.35" >CIE 1931 xy</text>
<defs><clipPath id="cpx"><rect x="637" y="678" width="341" height="197"/></clipPath><linearGradient id="x0" gradientUnits="userSpaceOnUse" x1="637.0" x2="978.0" y1="0" y2="0"><stop offset="0.000" stop-color="#72ffcf"/><stop offset="0.290" stop-color="#acffcc"/><stop offset="0.563" stop-color="#dbffc7"/><stop offset="0.748" stop-color="#fffdc1"/><stop offset="1.000" stop-color="#ffd49b"/></linearGradient><linearGradient id="x1" gradientUnits="userSpaceOnUse" x1="637.0" x2="978.0" y1="0" y2="0"><stop offset="0.000" stop-color="#73ffd0"/><stop offset="0.299" stop-color="#afffcd"/><stop offset="0.563" stop-color="#ddffc9"/><stop offset="0.739" stop-color="#fffdc3"/><stop offset="1.000" stop-color="#ffd39c"/></linearGradient><linearGradient id="x2" gradientUnits="userSpaceOnUse" x1="637.0" x2="978.0" y1="0" y2="0"><stop offset="0.000" stop-color="#75ffd2"/><stop offset="0.299" stop-color="#b1ffce"/><stop offset="0.563" stop-color="#deffca"/><stop offset="0.739" stop-color="#fffcc4"/><stop offset="1.000" stop-color="#ffd29c"/></linearGradient><linearGradient id="x3" gradientUnits="userSpaceOnUse" x1="637.0" x2="978.0" y1="0" y2="0"><stop offset="0.000" stop-color="#77ffd3"/><stop offset="0.308" stop-color="#b3ffd0"/><stop offset="0.563" stop-color="#dfffcc"/><stop offset="0.730" stop-color="#fffcc6"/><stop offset="1.000" stop-color="#ffd19d"/></linearGradient><linearGradient id="x4" gradientUnits="userSpaceOnUse" x1="637.0" x2="978.0" y1="0" y2="0"><stop offset="0.000" stop-color="#78ffd4"/><stop offset="0.317" stop-color="#b6ffd1"/><stop offset="0.563" stop-color="#e1ffcd"/><stop offset="0.721" stop-color="#fffcc8"/><stop offset="1.000" stop-color="#ffcf9d"/></linearGradient><linearGradient id="x5" gradientUnits="userSpaceOnUse" x1="637.0" x2="978.0" y1="0" y2="0"><stop offset="0.000" stop-color="#7affd6"/><stop offset="0.317" stop-color="#b8ffd2"/><stop offset="0.563" stop-color="#e2ffcf"/><stop offset="0.713" stop-color="#fffdca"/><stop offset="1.000" stop-color="#ffce9e"/></linearGradient><linearGradient id="x6" gradientUnits="userSpaceOnUse" x1="637.0" x2="978.0" y1="0" y2="0"><stop offset="0.000" stop-color="#7bffd7"/><stop offset="0.326" stop-color="#baffd4"/><stop offset="0.563" stop-color="#e4ffd1"/><stop offset="0.704" stop-color="#fffdcc"/><stop offset="1.000" stop-color="#ffcd9f"/></linearGradient><linearGradient id="x7" gradientUnits="userSpaceOnUse" x1="637.0" x2="978.0" y1="0" y2="0"><stop offset="0.000" stop-color="#7dffd8"/><stop offset="0.326" stop-color="#bcffd5"/><stop offset="0.563" stop-color="#e5ffd2"/><stop offset="0.695" stop-color="#fffdce"/><stop offset="1.000" stop-color="#ffcc9f"/></linearGradient><linearGradient id="x8" gradientUnits="userSpaceOnUse" x1="637.0" x2="978.0" y1="0" y2="0"><stop offset="0.000" stop-color="#7effda"/><stop offset="0.334" stop-color="#bfffd7"/><stop offset="0.563" stop-color="#e6ffd4"/><stop offset="0.695" stop-color="#fffcce"/><stop offset="1.000" stop-color="#ffcba0"/></linearGradient><linearGradient id="x9" gradientUnits="userSpaceOnUse" x1="637.0" x2="978.0" y1="0" y2="0"><stop offset="0.000" stop-color="#80ffdb"/><stop offset="0.334" stop-color="#c0ffd8"/><stop offset="0.563" stop-color="#e8ffd5"/><stop offset="0.686" stop-color="#fffcd1"/><stop offset="1.000" stop-color="#ffc9a1"/></linearGradient><linearGradient id="x10" gradientUnits="userSpaceOnUse" x1="637.0" x2="978.0" y1="0" y2="0"><stop offset="0.000" stop-color="#82ffdd"/><stop offset="0.343" stop-color="#c3ffda"/><stop offset="0.563" stop-color="#e9ffd7"/><stop offset="0.677" stop-color="#fffcd3"/><stop offset="1.000" stop-color="#ffc8a1"/></linearGradient><linearGradient id="x11" gradientUnits="userSpaceOnUse" x1="637.0" x2="978.0" y1="0" y2="0"><stop offset="0.000" stop-color="#83ffde"/><stop offset="0.352" stop-color="#c6ffdb"/><stop offset="0.563" stop-color="#ebffd9"/><stop offset="0.669" stop-color="#fffdd5"/><stop offset="0.985" stop-color="#ffc9a4"/><stop offset="1.000" stop-color="#ffc7a2"/></linearGradient><linearGradient id="x12" gradientUnits="userSpaceOnUse" x1="637.0" x2="978.0" y1="0" y2="0"><stop offset="0.000" stop-color="#85ffdf"/><stop offset="0.352" stop-color="#c7ffdd"/><stop offset="0.563" stop-color="#ecffda"/><stop offset="0.660" stop-color="#fffdd7"/><stop offset="0.977" stop-color="#ffc9a5"/><stop offset="1.000" stop-color="#ffc6a2"/></linearGradient><linearGradient id="x13" gradientUnits="userSpaceOnUse" x1="637.0" x2="978.0" y1="0" y2="0"><stop offset="0.000" stop-color="#86ffe1"/><stop offset="0.361" stop-color="#caffde"/><stop offset="0.563" stop-color="#eeffdc"/><stop offset="0.651" stop-color="#fffdd9"/><stop offset="0.959" stop-color="#ffcaa8"/><stop offset="1.000" stop-color="#ffc5a3"/></linearGradient><linearGradient id="x14" gradientUnits="userSpaceOnUse" x1="637.0" x2="978.0" y1="0" y2="0"><stop offset="0.000" stop-color="#88ffe2"/><stop offset="0.361" stop-color="#cbffe0"/><stop offset="0.563" stop-color="#efffde"/><stop offset="0.651" stop-color="#fffcd9"/><stop offset="0.968" stop-color="#ffc8a7"/><stop offset="1.000" stop-color="#ffc3a3"/></linearGradient><linearGradient id="x15" gradientUnits="userSpaceOnUse" x1="637.0" x2="978.0" y1="0" y2="0"><stop offset="0.000" stop-color="#89ffe4"/><stop offset="0.370" stop-color="#ceffe1"/><stop offset="0.563" stop-color="#f1ffdf"/><stop offset="0.642" stop-color="#fffcdb"/><stop offset="0.950" stop-color="#ffc9aa"/><stop offset="1.000" stop-color="#ffc2a4"/></linearGradient><linearGradient id="x16" gradientUnits="userSpaceOnUse" x1="637.0" x2="978.0" y1="0" y2="0"><stop offset="0.000" stop-color="#8bffe5"/><stop offset="0.378" stop-color="#d1ffe3"/><stop offset="0.572" stop-color="#f4ffe1"/><stop offset="0.633" stop-color="#fffcdd"/><stop offset="0.941" stop-color="#ffc9ac"/><stop offset="1.000" stop-color="#ffc1a4"/></linearGradient><linearGradient id="x17" gradientUnits="userSpaceOnUse" x1="637.0" x2="978.0" y1="0" y2="0"><stop offset="0.000" stop-color="#8cffe7"/><stop offset="0.378" stop-color="#d3ffe4"/><stop offset="0.563" stop-color="#f4ffe3"/><stop offset="0.633" stop-color="#fffbde"/><stop offset="0.941" stop-color="#ffc7ac"/><stop offset="1.000" stop-color="#ffc0a5"/></linearGradient><linearGradient id="x18" gradientUnits="userSpaceOnUse" x1="637.0" x2="978.0" y1="0" y2="0"><stop offset="0.000" stop-color="#8effe8"/><stop offset="0.387" stop-color="#d6ffe6"/><stop offset="0.572" stop-color="#f8ffe4"/><stop offset="0.625" stop-color="#fffbe0"/><stop offset="0.933" stop-color="#ffc7ae"/><stop offset="1.000" stop-color="#ffbfa6"/></linearGradient><linearGradient id="x19" gradientUnits="userSpaceOnUse" x1="637.0" x2="978.0" y1="0" y2="0"><stop offset="0.000" stop-color="#90ffea"/><stop offset="0.396" stop-color="#d8ffe7"/><stop offset="0.572" stop-color="#f9ffe6"/><stop offset="0.625" stop-color="#fff9e0"/><stop offset="0.933" stop-color="#ffc6af"/><stop offset="1.000" stop-color="#ffbda6"/></linearGradient><linearGradient id="x20" gradientUnits="userSpaceOnUse" x1="637.0" x2="978.0" y1="0" y2="0"><stop offset="0.000" stop-color="#91ffeb"/><stop offset="0.396" stop-color="#daffe9"/><stop offset="0.572" stop-color="#fbffe8"/><stop offset="0.642" stop-color="#fff4dd"/><stop offset="0.968" stop-color="#ffc0ab"/><stop offset="1.000" stop-color="#ffbca7"/></linearGradient><linearGradient id="x21" gradientUnits="userSpaceOnUse" x1="637.0" x2="978.0" y1="0" y2="0"><stop offset="0.000" stop-color="#93ffed"/><stop offset="0.405" stop-color="#ddffeb"/><stop offset="0.589" stop-color="#fffee8"/><stop offset="0.880" stop-color="#ffcbb7"/><stop offset="1.000" stop-color="#ffbba7"/></linearGradient><linearGradient id="x22" gradientUnits="userSpaceOnUse" x1="637.0" x2="978.0" y1="0" y2="0"><stop offset="0.000" stop-color="#94ffee"/><stop offset="0.413" stop-color="#e0ffec"/><stop offset="0.589" stop-color="#fffce8"/><stop offset="0.889" stop-color="#ffc8b6"/><stop offset="1.000" stop-color="#ffbaa8"/></linearGradient><linearGradient id="x23" gradientUnits="userSpaceOnUse" x1="637.0" x2="978.0" y1="0" y2="0"><stop offset="0.000" stop-color="#96fff0"/><stop offset="0.413" stop-color="#e1ffee"/><stop offset="0.581" stop-color="#fffcea"/><stop offset="0.871" stop-color="#ffc9b9"/><stop offset="1.000" stop-color="#ffb8a8"/></linearGradient><linearGradient id="x24" gradientUnits="userSpaceOnUse" x1="637.0" x2="978.0" y1="0" y2="0"><stop offset="0.000" stop-color="#97fff1"/><stop offset="0.422" stop-color="#e4fff0"/><stop offset="0.572" stop-color="#fffded"/><stop offset="0.862" stop-color="#ffc9bb"/><stop offset="1.000" stop-color="#ffb7a9"/></linearGradient><linearGradient id="x25" gradientUnits="userSpaceOnUse" x1="637.0" x2="978.0" y1="0" y2="0"><stop offset="0.000" stop-color="#99fff3"/><stop offset="0.431" stop-color="#e7fff1"/><stop offset="0.563" stop-color="#fffdef"/><stop offset="0.853" stop-color="#ffc9bc"/><stop offset="1.000" stop-color="#ffb6a9"/></linearGradient><linearGradient id="x26" gradientUnits="userSpaceOnUse" x1="637.0" x2="978.0" y1="0" y2="0"><stop offset="0.000" stop-color="#9bfff4"/><stop offset="0.431" stop-color="#e9fff3"/><stop offset="0.554" stop-color="#fffdf1"/><stop offset="0.836" stop-color="#ffcabf"/><stop offset="1.000" stop-color="#ffb5aa"/></linearGradient><linearGradient id="x27" gradientUnits="userSpaceOnUse" x1="637.0" x2="978.0" y1="0" y2="0"><stop offset="0.000" stop-color="#9cfff6"/><stop offset="0.440" stop-color="#ecfff5"/><stop offset="0.554" stop-color="#fffcf1"/><stop offset="0.845" stop-color="#ffc8be"/><stop offset="1.000" stop-color="#ffb3aa"/></linearGradient><linearGradient id="x28" gradientUnits="userSpaceOnUse" x1="637.0" x2="978.0" y1="0" y2="0"><stop offset="0.000" stop-color="#9efff8"/><stop offset="0.449" stop-color="#effff7"/><stop offset="0.545" stop-color="#fffcf3"/><stop offset="0.827" stop-color="#ffc9c1"/><stop offset="1.000" stop-color="#ffb2ab"/></linearGradient><linearGradient id="x29" gradientUnits="userSpaceOnUse" x1="637.0" x2="978.0" y1="0" y2="0"><stop offset="0.000" stop-color="#9ffff9"/><stop offset="0.449" stop-color="#f1fff8"/><stop offset="0.537" stop-color="#fffcf6"/><stop offset="0.818" stop-color="#ffc9c3"/><stop offset="1.000" stop-color="#ffb1ab"/></linearGradient><linearGradient id="x30" gradientUnits="userSpaceOnUse" x1="637.0" x2="978.0" y1="0" y2="0"><stop offset="0.000" stop-color="#a1fffb"/><stop offset="0.457" stop-color="#f4fffa"/><stop offset="0.528" stop-color="#fffcf8"/><stop offset="0.809" stop-color="#ffc9c5"/><stop offset="1.000" stop-color="#ffb0ac"/></linearGradient><linearGradient id="x31" gradientUnits="userSpaceOnUse" x1="637.0" x2="978.0" y1="0" y2="0"><stop offset="0.000" stop-color="#a3fffc"/><stop offset="0.466" stop-color="#f7fffc"/><stop offset="0.528" stop-color="#fffbf8"/><stop offset="0.809" stop-color="#ffc7c5"/><stop offset="1.000" stop-color="#ffaeac"/></linearGradient><linearGradient id="x32" gradientUnits="userSpaceOnUse" x1="637.0" x2="978.0" y1="0" y2="0"><stop offset="0.000" stop-color="#a4fffe"/><stop offset="0.475" stop-color="#fafffe"/><stop offset="0.528" stop-color="#fff9f8"/><stop offset="0.809" stop-color="#ffc6c5"/><stop offset="1.000" stop-color="#ffadad"/></linearGradient><linearGradient id="x33" gradientUnits="userSpaceOnUse" x1="637.0" x2="978.0" y1="0" y2="0"><stop offset="0.000" stop-color="#a6feff"/><stop offset="0.475" stop-color="#fbfeff"/><stop offset="0.528" stop-color="#fff7f8"/><stop offset="0.818" stop-color="#ffc4c4"/><stop offset="1.000" stop-color="#ffacad"/></linearGradient><linearGradient id="x34" gradientUnits="userSpaceOnUse" x1="637.0" x2="978.0" y1="0" y2="0"><stop offset="0.000" stop-color="#a6fdff"/><stop offset="0.484" stop-color="#fcfdff"/><stop offset="0.845" stop-color="#ffbfc1"/><stop offset="1.000" stop-color="#ffabad"/></linearGradient><linearGradient id="x35" gradientUnits="userSpaceOnUse" x1="637.0" x2="978.0" y1="0" y2="0"><stop offset="0.000" stop-color="#a6fcff"/><stop offset="0.493" stop-color="#fefbff"/><stop offset="0.809" stop-color="#ffc3c6"/><stop offset="1.000" stop-color="#ffaaae"/></linearGradient><linearGradient id="x36" gradientUnits="userSpaceOnUse" x1="637.0" x2="978.0" y1="0" y2="0"><stop offset="0.000" stop-color="#a7faff"/><stop offset="0.493" stop-color="#fef9ff"/><stop offset="0.818" stop-color="#ffc0c5"/><stop offset="1.000" stop-color="#ffa9ae"/></linearGradient><linearGradient id="x37" gradientUnits="userSpaceOnUse" x1="637.0" x2="978.0" y1="0" y2="0"><stop offset="0.000" stop-color="#a7f9ff"/><stop offset="0.501" stop-color="#fff8ff"/><stop offset="0.774" stop-color="#ffc5cc"/><stop offset="1.000" stop-color="#ffa8ae"/></linearGradient><linearGradient id="x38" gradientUnits="userSpaceOnUse" x1="637.0" x2="978.0" y1="0" y2="0"><stop offset="0.000" stop-color="#a8f8ff"/><stop offset="0.501" stop-color="#fff6ff"/><stop offset="0.783" stop-color="#ffc3cb"/><stop offset="1.000" stop-color="#ffa7af"/></linearGradient><linearGradient id="x39" gradientUnits="userSpaceOnUse" x1="637.0" x2="978.0" y1="0" y2="0"><stop offset="0.000" stop-color="#a8f6ff"/><stop offset="0.501" stop-color="#fff5ff"/><stop offset="0.783" stop-color="#ffc2cb"/><stop offset="1.000" stop-color="#ffa6af"/></linearGradient><linearGradient id="x40" gradientUnits="userSpaceOnUse" x1="637.0" x2="978.0" y1="0" y2="0"><stop offset="0.000" stop-color="#a8f5ff"/><stop offset="0.501" stop-color="#fff3ff"/><stop offset="0.783" stop-color="#ffc1cc"/><stop offset="1.000" stop-color="#ffa5b0"/></linearGradient><linearGradient id="x41" gradientUnits="userSpaceOnUse" x1="637.0" x2="978.0" y1="0" y2="0"><stop offset="0.000" stop-color="#a9f3ff"/><stop offset="0.501" stop-color="#fff2ff"/><stop offset="0.792" stop-color="#ffbecb"/><stop offset="1.000" stop-color="#ffa3b0"/></linearGradient><linearGradient id="x42" gradientUnits="userSpaceOnUse" x1="637.0" x2="978.0" y1="0" y2="0"><stop offset="0.000" stop-color="#a9f2ff"/><stop offset="0.501" stop-color="#fff0ff"/><stop offset="0.792" stop-color="#ffbdcb"/><stop offset="1.000" stop-color="#ffa2b0"/></linearGradient><linearGradient id="x43" gradientUnits="userSpaceOnUse" x1="637.0" x2="978.0" y1="0" y2="0"><stop offset="0.000" stop-color="#aaf1ff"/><stop offset="0.501" stop-color="#ffeeff"/><stop offset="0.801" stop-color="#ffbbca"/><stop offset="1.000" stop-color="#ffa1b1"/></linearGradient><linearGradient id="x44" gradientUnits="userSpaceOnUse" x1="637.0" x2="978.0" y1="0" y2="0"><stop offset="0.000" stop-color="#aaefff"/><stop offset="0.510" stop-color="#ffecfe"/><stop offset="0.801" stop-color="#ffb9ca"/><stop offset="1.000" stop-color="#ffa0b1"/></linearGradient><linearGradient id="x45" gradientUnits="userSpaceOnUse" x1="637.0" x2="978.0" y1="0" y2="0"><stop offset="0.000" stop-color="#aaeeff"/><stop offset="0.510" stop-color="#ffeafe"/><stop offset="0.801" stop-color="#ffb8cb"/><stop offset="1.000" stop-color="#ff9fb1"/></linearGradient><linearGradient id="x46" gradientUnits="userSpaceOnUse" x1="637.0" x2="978.0" y1="0" y2="0"><stop offset="0.000" stop-color="#abedff"/><stop offset="0.510" stop-color="#ffe9fe"/><stop offset="0.801" stop-color="#ffb7cb"/><stop offset="1.000" stop-color="#ff9eb2"/></linearGradient><linearGradient id="x47" gradientUnits="userSpaceOnUse" x1="637.0" x2="978.0" y1="0" y2="0"><stop offset="0.000" stop-color="#abebff"/><stop offset="0.510" stop-color="#ffe7fe"/><stop offset="0.801" stop-color="#ffb6cb"/><stop offset="1.000" stop-color="#ff9db2"/></linearGradient><linearGradient id="x48" gradientUnits="userSpaceOnUse" x1="637.0" x2="978.0" y1="0" y2="0"><stop offset="0.000" stop-color="#aceaff"/><stop offset="0.510" stop-color="#ffe6fe"/><stop offset="0.809" stop-color="#ffb3ca"/><stop offset="1.000" stop-color="#ff9cb2"/></linearGradient><linearGradient id="x49" gradientUnits="userSpaceOnUse" x1="637.0" x2="978.0" y1="0" y2="0"><stop offset="0.000" stop-color="#ace9ff"/><stop offset="0.510" stop-color="#ffe4fe"/><stop offset="0.809" stop-color="#ffb2ca"/><stop offset="1.000" stop-color="#ff9bb3"/></linearGradient><linearGradient id="x50" gradientUnits="userSpaceOnUse" x1="637.0" x2="978.0" y1="0" y2="0"><stop offset="0.000" stop-color="#ace7ff"/><stop offset="0.510" stop-color="#ffe3fe"/><stop offset="0.809" stop-color="#ffb1cb"/><stop offset="1.000" stop-color="#ff9ab3"/></linearGradient><linearGradient id="x51" gradientUnits="userSpaceOnUse" x1="637.0" x2="978.0" y1="0" y2="0"><stop offset="0.000" stop-color="#ade6ff"/><stop offset="0.510" stop-color="#ffe1fe"/><stop offset="0.809" stop-color="#ffb0cb"/><stop offset="1.000" stop-color="#ff98b3"/></linearGradient><linearGradient id="x52" gradientUnits="userSpaceOnUse" x1="637.0" x2="978.0" y1="0" y2="0"><stop offset="0.000" stop-color="#ade5ff"/><stop offset="0.519" stop-color="#ffdefd"/><stop offset="0.827" stop-color="#ffacc9"/><stop offset="1.000" stop-color="#ff97b4"/></linearGradient><linearGradient id="x53" gradientUnits="userSpaceOnUse" x1="637.0" x2="978.0" y1="0" y2="0"><stop offset="0.000" stop-color="#ade3ff"/><stop offset="0.519" stop-color="#ffddfd"/><stop offset="0.827" stop-color="#ffabc9"/><stop offset="1.000" stop-color="#ff96b4"/></linearGradient><linearGradient id="x54" gradientUnits="userSpaceOnUse" x1="637.0" x2="978.0" y1="0" y2="0"><stop offset="0.000" stop-color="#aee2ff"/><stop offset="0.519" stop-color="#ffdbfd"/><stop offset="0.827" stop-color="#ffaac9"/><stop offset="1.000" stop-color="#ff95b4"/></linearGradient><linearGradient id="x55" gradientUnits="userSpaceOnUse" x1="637.0" x2="978.0" y1="0" y2="0"><stop offset="0.000" stop-color="#aee1ff"/><stop offset="0.519" stop-color="#ffdafd"/><stop offset="0.827" stop-color="#ffa9ca"/><stop offset="1.000" stop-color="#ff94b5"/></linearGradient><linearGradient id="x56" gradientUnits="userSpaceOnUse" x1="637.0" x2="978.0" y1="0" y2="0"><stop offset="0.000" stop-color="#aedfff"/><stop offset="0.519" stop-color="#ffd9fd"/><stop offset="0.827" stop-color="#ffa8ca"/><stop offset="1.000" stop-color="#ff93b5"/></linearGradient><linearGradient id="x57" gradientUnits="userSpaceOnUse" x1="637.0" x2="978.0" y1="0" y2="0"><stop offset="0.000" stop-color="#afdeff"/><stop offset="0.519" stop-color="#ffd7fd"/><stop offset="0.827" stop-color="#ffa6ca"/><stop offset="1.000" stop-color="#ff92b5"/></linearGradient><linearGradient id="x58" gradientUnits="userSpaceOnUse" x1="637.0" x2="978.0" y1="0" y2="0"><stop offset="0.000" stop-color="#afddff"/><stop offset="0.519" stop-color="#ffd6fd"/><stop offset="0.836" stop-color="#ffa4c9"/><stop offset="1.000" stop-color="#ff90b6"/></linearGradient><linearGradient id="x59" gradientUnits="userSpaceOnUse" x1="637.0" x2="978.0" y1="0" y2="0"><stop offset="0.000" stop-color="#afdbff"/><stop offset="0.519" stop-color="#ffd4fd"/><stop offset="0.836" stop-color="#ffa3ca"/><stop offset="1.000" stop-color="#ff8fb6"/></linearGradient><linearGradient id="x60" gradientUnits="userSpaceOnUse" x1="637.0" x2="978.0" y1="0" y2="0"><stop offset="0.000" stop-color="#b0daff"/><stop offset="0.519" stop-color="#ffd3fd"/><stop offset="0.836" stop-color="#ffa2ca"/><stop offset="1.000" stop-color="#ff8eb6"/></linearGradient><linearGradient id="x61" gradientUnits="userSpaceOnUse" x1="637.0" x2="978.0" y1="0" y2="0"><stop offset="0.000" stop-color="#b0d9ff"/><stop offset="0.519" stop-color="#ffd1fe"/><stop offset="0.836" stop-color="#ffa0ca"/><stop offset="1.000" stop-color="#ff8db7"/></linearGradient><linearGradient id="x62" gradientUnits="userSpaceOnUse" x1="637.0" x2="978.0" y1="0" y2="0"><stop offset="0.000" stop-color="#b0d8ff"/><stop offset="0.519" stop-color="#ffd0fe"/><stop offset="0.836" stop-color="#ff9fca"/><stop offset="1.000" stop-color="#ff8cb7"/></linearGradient><linearGradient id="x63" gradientUnits="userSpaceOnUse" x1="637.0" x2="978.0" y1="0" y2="0"><stop offset="0.000" stop-color="#b1d6ff"/><stop offset="0.528" stop-color="#ffcdfc"/><stop offset="0.853" stop-color="#ff9cc8"/><stop offset="1.000" stop-color="#ff8bb7"/></linearGradient><linearGradient id="x64" gradientUnits="userSpaceOnUse" x1="637.0" x2="978.0" y1="0" y2="0"><stop offset="0.000" stop-color="#b1d5ff"/><stop offset="0.528" stop-color="#ffcbfc"/><stop offset="0.853" stop-color="#ff9bc9"/><stop offset="1.000" stop-color="#ff89b8"/></linearGradient><linearGradient id="x65" gradientUnits="userSpaceOnUse" x1="637.0" x2="978.0" y1="0" y2="0"><stop offset="0.000" stop-color="#b1d4ff"/><stop offset="0.528" stop-color="#ffcafc"/><stop offset="0.853" stop-color="#ff99c9"/><stop offset="1.000" stop-color="#ff88b8"/></linearGradient><linearGradient id="x66" gradientUnits="userSpaceOnUse" x1="637.0" x2="978.0" y1="0" y2="0"><stop offset="0.000" stop-color="#b1d2ff"/><stop offset="0.528" stop-color="#ffc9fc"/><stop offset="0.853" stop-color="#ff98c9"/><stop offset="1.000" stop-color="#ff87b8"/></linearGradient></defs>
<g clip-path="url(#cpx)"><rect x="637.0" y="677.00" width="341.0" height="3.60" fill="url(#x0)"/><rect x="637.0" y="680.00" width="341.0" height="3.60" fill="url(#x1)"/><rect x="637.0" y="683.00" width="341.0" height="3.60" fill="url(#x2)"/><rect x="637.0" y="686.00" width="341.0" height="3.60" fill="url(#x3)"/><rect x="637.0" y="689.00" width="341.0" height="3.60" fill="url(#x4)"/><rect x="637.0" y="692.00" width="341.0" height="3.60" fill="url(#x5)"/><rect x="637.0" y="695.00" width="341.0" height="3.60" fill="url(#x6)"/><rect x="637.0" y="698.00" width="341.0" height="3.60" fill="url(#x7)"/><rect x="637.0" y="701.00" width="341.0" height="3.60" fill="url(#x8)"/><rect x="637.0" y="704.00" width="341.0" height="3.60" fill="url(#x9)"/><rect x="637.0" y="707.00" width="341.0" height="3.60" fill="url(#x10)"/><rect x="637.0" y="710.00" width="341.0" height="3.60" fill="url(#x11)"/><rect x="637.0" y="713.00" width="341.0" height="3.60" fill="url(#x12)"/><rect x="637.0" y="716.00" width="341.0" height="3.60" fill="url(#x13)"/><rect x="637.0" y="719.00" width="341.0" height="3.60" fill="url(#x14)"/><rect x="637.0" y="722.00" width="341.0" height="3.60" fill="url(#x15)"/><rect x="637.0" y="725.00" width="341.0" height="3.60" fill="url(#x16)"/><rect x="637.0" y="728.00" width="341.0" height="3.60" fill="url(#x17)"/><rect x="637.0" y="731.00" width="341.0" height="3.60" fill="url(#x18)"/><rect x="637.0" y="734.00" width="341.0" height="3.60" fill="url(#x19)"/><rect x="637.0" y="737.00" width="341.0" height="3.60" fill="url(#x20)"/><rect x="637.0" y="740.00" width="341.0" height="3.60" fill="url(#x21)"/><rect x="637.0" y="743.00" width="341.0" height="3.60" fill="url(#x22)"/><rect x="637.0" y="746.00" width="341.0" height="3.60" fill="url(#x23)"/><rect x="637.0" y="749.00" width="341.0" height="3.60" fill="url(#x24)"/><rect x="637.0" y="752.00" width="341.0" height="3.60" fill="url(#x25)"/><rect x="637.0" y="755.00" width="341.0" height="3.60" fill="url(#x26)"/><rect x="637.0" y="758.00" width="341.0" height="3.60" fill="url(#x27)"/><rect x="637.0" y="761.00" width="341.0" height="3.60" fill="url(#x28)"/><rect x="637.0" y="764.00" width="341.0" height="3.60" fill="url(#x29)"/><rect x="637.0" y="767.00" width="341.0" height="3.60" fill="url(#x30)"/><rect x="637.0" y="770.00" width="341.0" height="3.60" fill="url(#x31)"/><rect x="637.0" y="773.00" width="341.0" height="3.60" fill="url(#x32)"/><rect x="637.0" y="776.00" width="341.0" height="3.60" fill="url(#x33)"/><rect x="637.0" y="779.00" width="341.0" height="3.60" fill="url(#x34)"/><rect x="637.0" y="782.00" width="341.0" height="3.60" fill="url(#x35)"/><rect x="637.0" y="785.00" width="341.0" height="3.60" fill="url(#x36)"/><rect x="637.0" y="788.00" width="341.0" height="3.60" fill="url(#x37)"/><rect x="637.0" y="791.00" width="341.0" height="3.60" fill="url(#x38)"/><rect x="637.0" y="794.00" width="341.0" height="3.60" fill="url(#x39)"/><rect x="637.0" y="797.00" width="341.0" height="3.60" fill="url(#x40)"/><rect x="637.0" y="800.00" width="341.0" height="3.60" fill="url(#x41)"/><rect x="637.0" y="803.00" width="341.0" height="3.60" fill="url(#x42)"/><rect x="637.0" y="806.00" width="341.0" height="3.60" fill="url(#x43)"/><rect x="637.0" y="809.00" width="341.0" height="3.60" fill="url(#x44)"/><rect x="637.0" y="812.00" width="341.0" height="3.60" fill="url(#x45)"/><rect x="637.0" y="815.00" width="341.0" height="3.60" fill="url(#x46)"/><rect x="637.0" y="818.00" width="341.0" height="3.60" fill="url(#x47)"/><rect x="637.0" y="821.00" width="341.0" height="3.60" fill="url(#x48)"/><rect x="637.0" y="824.00" width="341.0" height="3.60" fill="url(#x49)"/><rect x="637.0" y="827.00" width="341.0" height="3.60" fill="url(#x50)"/><rect x="637.0" y="830.00" width="341.0" height="3.60" fill="url(#x51)"/><rect x="637.0" y="833.00" width="341.0" height="3.60" fill="url(#x52)"/><rect x="637.0" y="836.00" width="341.0" height="3.60" fill="url(#x53)"/><rect x="637.0" y="839.00" width="341.0" height="3.60" fill="url(#x54)"/><rect x="637.0" y="842.00" width="341.0" height="3.60" fill="url(#x55)"/><rect x="637.0" y="845.00" width="341.0" height="3.60" fill="url(#x56)"/><rect x="637.0" y="848.00" width="341.0" height="3.60" fill="url(#x57)"/><rect x="637.0" y="851.00" width="341.0" height="3.60" fill="url(#x58)"/><rect x="637.0" y="854.00" width="341.0" height="3.60" fill="url(#x59)"/><rect x="637.0" y="857.00" width="341.0" height="3.60" fill="url(#x60)"/><rect x="637.0" y="860.00" width="341.0" height="3.60" fill="url(#x61)"/><rect x="637.0" y="863.00" width="341.0" height="3.60" fill="url(#x62)"/><rect x="637.0" y="866.00" width="341.0" height="3.60" fill="url(#x63)"/><rect x="637.0" y="869.00" width="341.0" height="3.60" fill="url(#x64)"/><rect x="637.0" y="872.00" width="341.0" height="3.60" fill="url(#x65)"/><rect x="637.0" y="875.00" width="341.0" height="3.60" fill="url(#x66)"/></g>
<rect x="637" y="678" width="341" height="197" fill="none" stroke="#8a8a8a" stroke-width="2"/>
<rect x="800" y="769" width="12.5" height="12.5" fill="none" stroke="#000" stroke-width="2.2"/>
<circle cx="806.3" cy="762" r="4.4" fill="#fff" stroke="#000" stroke-width="1.1"/><circle cx="808" cy="762" r="4.4" fill="#fff" stroke="#000" stroke-width="1.3"/>
<rect x="994" y="661" width="653" height="224" fill="#111111" />
<defs><linearGradient id="thd" x1="0" x2="0" y1="0" y2="1"><stop offset="0" stop-color="#333"/><stop offset="0.5" stop-color="#2a2a2a"/><stop offset="0.52" stop-color="#181818"/><stop offset="1" stop-color="#151515"/></linearGradient>
<linearGradient id="tr1" x1="0" x2="0" y1="0" y2="1"><stop offset="0" stop-color="#484848"/><stop offset="1" stop-color="#3a3a3a"/></linearGradient>
<linearGradient id="tr2" x1="0" x2="0" y1="0" y2="1"><stop offset="0" stop-color="#7a7a7a"/><stop offset="1" stop-color="#6c6c6c"/></linearGradient></defs>
<rect x="996" y="663" width="633" height="33" fill="url(#thd)" />
<defs><clipPath id="cpt2"><rect x="996" y="663" width="633" height="203"/></clipPath></defs><g clip-path="url(#cpt2)">
<rect x="996" y="696" width="633" height="31.2" fill="url(#tr1)" />
<text x="1008.5" y="718.8" font-size="18.5" fill="#f4f4f4" font-weight="bold" letter-spacing="-1.3">x: CIE31</text>
<text x="1092.5" y="718.8" font-size="18.5" fill="#f0f0f0" stroke="#f0f0f0" stroke-width="0.35" letter-spacing="-1.0">0,3125</text>
<text x="1171" y="718.8" font-size="18.5" fill="#f0f0f0" stroke="#f0f0f0" stroke-width="0.35" letter-spacing="-1.0">0,6496</text>
<text x="1239" y="718.8" font-size="18.5" fill="#f0f0f0" stroke="#f0f0f0" stroke-width="0.35" letter-spacing="-1.0">0,3010</text>
<text x="1316.5" y="718.8" font-size="18.5" fill="#f0f0f0" stroke="#f0f0f0" stroke-width="0.35" letter-spacing="-1.0">0,1461</text>
<text x="1385" y="718.8" font-size="18.5" fill="#f0f0f0" stroke="#f0f0f0" stroke-width="0.35" letter-spacing="-1.0">0,2244</text>
<text x="1463" y="718.8" font-size="18.5" fill="#f0f0f0" stroke="#f0f0f0" stroke-width="0.35" letter-spacing="-1.0">0,3208</text>
<text x="1534" y="718.8" font-size="18.5" fill="#f0f0f0" stroke="#f0f0f0" stroke-width="0.35" letter-spacing="-1.0">0,4192</text>
<text x="1611" y="718.8" font-size="18.5" fill="#f0f0f0" stroke="#f0f0f0" stroke-width="0.35" letter-spacing="-1.0">0,3</text>
<rect x="996" y="727" width="633" height="31.2" fill="url(#tr2)" />
<text x="1008.5" y="749.8" font-size="18.5" fill="#f4f4f4" font-weight="bold" letter-spacing="-1.3">y: CIE31</text>
<text x="1092.5" y="749.8" font-size="18.5" fill="#f0f0f0" stroke="#f0f0f0" stroke-width="0.35" letter-spacing="-1.0">0,3325</text>
<text x="1171" y="749.8" font-size="18.5" fill="#f0f0f0" stroke="#f0f0f0" stroke-width="0.35" letter-spacing="-1.0">0,3311</text>
<text x="1239" y="749.8" font-size="18.5" fill="#f0f0f0" stroke="#f0f0f0" stroke-width="0.35" letter-spacing="-1.0">0,6037</text>
<text x="1316.5" y="749.8" font-size="18.5" fill="#f0f0f0" stroke="#f0f0f0" stroke-width="0.35" letter-spacing="-1.0">0,0614</text>
<text x="1385" y="749.8" font-size="18.5" fill="#f0f0f0" stroke="#f0f0f0" stroke-width="0.35" letter-spacing="-1.0">0,3329</text>
<text x="1463" y="749.8" font-size="18.5" fill="#f0f0f0" stroke="#f0f0f0" stroke-width="0.35" letter-spacing="-1.0">0,1551</text>
<text x="1534" y="749.8" font-size="18.5" fill="#f0f0f0" stroke="#f0f0f0" stroke-width="0.35" letter-spacing="-1.0">0,5074</text>
<text x="1611" y="749.8" font-size="18.5" fill="#f0f0f0" stroke="#f0f0f0" stroke-width="0.35" letter-spacing="-1.0">0,3</text>
<rect x="996" y="758" width="633" height="31.2" fill="url(#tr1)" />
<text x="1008.5" y="780.8" font-size="18.5" fill="#f4f4f4" font-weight="bold" letter-spacing="-1.3">Y</text>
<text x="1092.5" y="780.8" font-size="18.5" fill="#f0f0f0" stroke="#f0f0f0" stroke-width="0.35" letter-spacing="-1.0">284,7144</text>
<text x="1171" y="780.8" font-size="18.5" fill="#f0f0f0" stroke="#f0f0f0" stroke-width="0.35" letter-spacing="-1.0">57,8442</text>
<text x="1239" y="780.8" font-size="18.5" fill="#f0f0f0" stroke="#f0f0f0" stroke-width="0.35" letter-spacing="-1.0">201,0542</text>
<text x="1316.5" y="780.8" font-size="18.5" fill="#f0f0f0" stroke="#f0f0f0" stroke-width="0.35" letter-spacing="-1.0">20,1201</text>
<text x="1385" y="780.8" font-size="18.5" fill="#f0f0f0" stroke="#f0f0f0" stroke-width="0.35" letter-spacing="-1.0">221,3366</text>
<text x="1463" y="780.8" font-size="18.5" fill="#f0f0f0" stroke="#f0f0f0" stroke-width="0.35" letter-spacing="-1.0">79,4130</text>
<text x="1534" y="780.8" font-size="18.5" fill="#f0f0f0" stroke="#f0f0f0" stroke-width="0.35" letter-spacing="-1.0">260,2516</text>
<text x="1611" y="780.8" font-size="18.5" fill="#f0f0f0" stroke="#f0f0f0" stroke-width="0.35" letter-spacing="-1.0">53</text>
<rect x="996" y="789" width="633" height="31.2" fill="url(#tr2)" />
<text x="1008.5" y="811.8" font-size="18.5" fill="#f4f4f4" font-weight="bold" letter-spacing="-1.3">Target Y</text>
<text x="1092.5" y="811.8" font-size="18.5" fill="#f0f0f0" stroke="#f0f0f0" stroke-width="0.35" letter-spacing="-1.0">280,1641</text>
<text x="1171" y="811.8" font-size="18.5" fill="#f0f0f0" stroke="#f0f0f0" stroke-width="0.35" letter-spacing="-1.0">59,5786</text>
<text x="1239" y="811.8" font-size="18.5" fill="#f0f0f0" stroke="#f0f0f0" stroke-width="0.35" letter-spacing="-1.0">200,3618</text>
<text x="1316.5" y="811.8" font-size="18.5" fill="#f0f0f0" stroke="#f0f0f0" stroke-width="0.35" letter-spacing="-1.0">20,2238</text>
<text x="1385" y="811.8" font-size="18.5" fill="#f0f0f0" stroke="#f0f0f0" stroke-width="0.35" letter-spacing="-1.0">220,5856</text>
<text x="1463" y="811.8" font-size="18.5" fill="#f0f0f0" stroke="#f0f0f0" stroke-width="0.35" letter-spacing="-1.0">79,8024</text>
<text x="1534" y="811.8" font-size="18.5" fill="#f0f0f0" stroke="#f0f0f0" stroke-width="0.35" letter-spacing="-1.0">259,9403</text>
<text x="1611" y="811.8" font-size="18.5" fill="#f0f0f0" stroke="#f0f0f0" stroke-width="0.35" letter-spacing="-1.0">53</text>
<rect x="996" y="820" width="633" height="31.2" fill="url(#tr1)" />
<text x="1008.5" y="842.8" font-size="18.5" fill="#f4f4f4" font-weight="bold" letter-spacing="-1.3">ΔE 2000</text>
<text x="1092.5" y="842.8" font-size="18.5" fill="#f0f0f0" stroke="#f0f0f0" stroke-width="0.35" letter-spacing="-1.0">2,3729</text>
<text x="1171" y="842.8" font-size="18.5" fill="#f0f0f0" stroke="#f0f0f0" stroke-width="0.35" letter-spacing="-1.0">1,7914</text>
<text x="1239" y="842.8" font-size="18.5" fill="#f0f0f0" stroke="#f0f0f0" stroke-width="0.35" letter-spacing="-1.0">0,3747</text>
<text x="1316.5" y="842.8" font-size="18.5" fill="#f0f0f0" stroke="#f0f0f0" stroke-width="0.35" letter-spacing="-1.0">1,3041</text>
<text x="1385" y="842.8" font-size="18.5" fill="#f0f0f0" stroke="#f0f0f0" stroke-width="0.35" letter-spacing="-1.0">1,0248</text>
<text x="1463" y="842.8" font-size="18.5" fill="#f0f0f0" stroke="#f0f0f0" stroke-width="0.35" letter-spacing="-1.0">0,2146</text>
<text x="1534" y="842.8" font-size="18.5" fill="#f0f0f0" stroke="#f0f0f0" stroke-width="0.35" letter-spacing="-1.0">0,2933</text>
<text x="1611" y="842.8" font-size="18.5" fill="#f0f0f0" stroke="#f0f0f0" stroke-width="0.35" letter-spacing="-1.0">2,7</text>
<rect x="996" y="851" width="633" height="31.2" fill="url(#tr2)" />
<text x="1008.5" y="873.8" font-size="18.5" fill="#f4f4f4" font-weight="bold" letter-spacing="-1.3">ΔE ITP</text>
<text x="1092.5" y="873.8" font-size="18.5" fill="#f0f0f0" stroke="#f0f0f0" stroke-width="0.35" letter-spacing="-1.0">2,0521</text>
<text x="1171" y="873.8" font-size="18.5" fill="#f0f0f0" stroke="#f0f0f0" stroke-width="0.35" letter-spacing="-1.0">0,1610</text>
<text x="1239" y="873.8" font-size="18.5" fill="#f0f0f0" stroke="#f0f0f0" stroke-width="0.35" letter-spacing="-1.0">2,0657</text>
<text x="1316.5" y="873.8" font-size="18.5" fill="#f0f0f0" stroke="#f0f0f0" stroke-width="0.35" letter-spacing="-1.0">0,5461</text>
<text x="1385" y="873.8" font-size="18.5" fill="#f0f0f0" stroke="#f0f0f0" stroke-width="0.35" letter-spacing="-1.0">1,5150</text>
<text x="1463" y="873.8" font-size="18.5" fill="#f0f0f0" stroke="#f0f0f0" stroke-width="0.35" letter-spacing="-1.0">1,3070</text>
<text x="1534" y="873.8" font-size="18.5" fill="#f0f0f0" stroke="#f0f0f0" stroke-width="0.35" letter-spacing="-1.0">1,2000</text>
<text x="1611" y="873.8" font-size="18.5" fill="#f0f0f0" stroke="#f0f0f0" stroke-width="0.35" letter-spacing="-1.0">1,4</text>
<text x="1127" y="686" font-size="17.5" fill="#f0f0f0" text-anchor="middle" font-weight="normal" stroke="#f0f0f0" stroke-width="0.35" letter-spacing="-0.4">White</text>
<text x="1200" y="686" font-size="17.5" fill="#f0f0f0" text-anchor="middle" font-weight="normal" stroke="#f0f0f0" stroke-width="0.35" letter-spacing="-0.4">Red</text>
<text x="1273" y="686" font-size="17.5" fill="#f0f0f0" text-anchor="middle" font-weight="normal" stroke="#f0f0f0" stroke-width="0.35" letter-spacing="-0.4">Green</text>
<text x="1346.5" y="686" font-size="17.5" fill="#f0f0f0" text-anchor="middle" font-weight="normal" stroke="#f0f0f0" stroke-width="0.35" letter-spacing="-0.4">Blue</text>
<text x="1419.7" y="686" font-size="17.5" fill="#f0f0f0" text-anchor="middle" font-weight="normal" stroke="#f0f0f0" stroke-width="0.35" letter-spacing="-0.4">Cyan</text>
<text x="1494" y="686" font-size="17.5" fill="#f0f0f0" text-anchor="middle" font-weight="normal" stroke="#f0f0f0" stroke-width="0.35" letter-spacing="-0.4">Magenta</text>
<text x="1568.5" y="686" font-size="17.5" fill="#f0f0f0" text-anchor="middle" font-weight="normal" stroke="#f0f0f0" stroke-width="0.35" letter-spacing="-0.4">Yellow</text>
<text x="1628" y="686" font-size="17.5" fill="#f0f0f0" text-anchor="middle" font-weight="normal" stroke="#f0f0f0" stroke-width="0.35" letter-spacing="-0.4">1</text>
</g>
<rect x="1629" y="696" width="17" height="170" fill="#222222" />
<rect x="1629.5" y="697" width="15.5" height="169" rx="3" fill="#4e4e4e"/>
<rect x="1631" y="699" width="13" height="16" rx="3" fill="#5e5e5e" stroke="#7a7a7a" stroke-width="1"/><rect x="1631.5" y="718" width="12" height="96" rx="6" fill="#383838"/><rect x="1631" y="847" width="13" height="16" rx="3" fill="#5e5e5e" stroke="#7a7a7a" stroke-width="1"/>
<path d="M1633 710 L1637.5 704.5 L1642 710 Z" fill="#2a2a2a"/><path d="M1633 852 L1637.5 857.5 L1642 852 Z" fill="#2a2a2a"/>
<rect x="996" y="866" width="633" height="18.5" fill="#222222" />
<rect x="996" y="866.5" width="633" height="17" rx="3" fill="#4e4e4e"/>
<rect x="998" y="868" width="15" height="14" rx="3" fill="#5e5e5e" stroke="#7a7a7a" stroke-width="1"/><rect x="1014" y="868.5" width="546" height="13" rx="6.5" fill="#383838"/><rect x="1612" y="868" width="15" height="14" rx="3" fill="#5e5e5e" stroke="#7a7a7a" stroke-width="1"/>
<path d="M1008 871 L1002.5 875 L1008 879 Z" fill="#2a2a2a"/><path d="M1617 871 L1622.5 875 L1617 879 Z" fill="#2a2a2a"/>
<rect x="0" y="927" width="1668" height="79" fill="#2c2c2c" />
<defs><linearGradient id="btn" x1="0" x2="0" y1="0" y2="1"><stop offset="0" stop-color="#a8a8a8"/><stop offset="0.35" stop-color="#8a8a8a"/><stop offset="1" stop-color="#585858"/></linearGradient>
<linearGradient id="btn2" x1="0" x2="0" y1="0" y2="1"><stop offset="0" stop-color="#b4b4b4"/><stop offset="1" stop-color="#6c6c6c"/></linearGradient>
<linearGradient id="ico" x1="0" x2="0" y1="0" y2="1"><stop offset="0" stop-color="#6a6a6a"/><stop offset="1" stop-color="#a8a8a8"/></linearGradient></defs>
<rect x="1.0" y="929.5" width="155" height="80" rx="4" fill="url(#btn)"/>
<rect x="7.0" y="936" width="142.5" height="45" rx="4" fill="#c0c0c0" stroke="rgba(0,0,0,0.25)" stroke-width="1.2"/>
<text x="78.5" y="999.5" font-size="13" fill="#262626" text-anchor="middle" font-weight="bold" >White</text>
<rect x="158.8" y="929.5" width="155" height="80" rx="4" fill="url(#btn)"/>
<rect x="164.8" y="936" width="142.5" height="45" rx="4" fill="#bd0000" stroke="rgba(0,0,0,0.25)" stroke-width="1.2"/>
<text x="236.3" y="999.5" font-size="13" fill="#262626" text-anchor="middle" font-weight="bold" >Red</text>
<rect x="316.6" y="929.5" width="155" height="80" rx="4" fill="url(#btn)"/>
<rect x="322.6" y="936" width="142.5" height="45" rx="4" fill="#00bd00" stroke="rgba(0,0,0,0.25)" stroke-width="1.2"/>
<text x="394.1" y="999.5" font-size="13" fill="#262626" text-anchor="middle" font-weight="bold" >Green</text>
<rect x="474.40000000000003" y="929.5" width="155" height="80" rx="4" fill="url(#btn)"/>
<rect x="480.40000000000003" y="936" width="142.5" height="45" rx="4" fill="#0000bd" stroke="rgba(0,0,0,0.25)" stroke-width="1.2"/>
<text x="551.9000000000001" y="999.5" font-size="13" fill="#262626" text-anchor="middle" font-weight="bold" >Blue</text>
<rect x="632.2" y="929.5" width="155" height="80" rx="4" fill="url(#btn)"/>
<rect x="638.2" y="936" width="142.5" height="45" rx="4" fill="#00bdbd" stroke="rgba(0,0,0,0.25)" stroke-width="1.2"/>
<text x="709.7" y="999.5" font-size="13" fill="#262626" text-anchor="middle" font-weight="bold" >Cyan</text>
<rect x="790.0" y="929.5" width="155" height="80" rx="4" fill="url(#btn)"/>
<rect x="796.0" y="936" width="142.5" height="45" rx="4" fill="#bd00bd" stroke="rgba(0,0,0,0.25)" stroke-width="1.2"/>
<text x="867.5" y="999.5" font-size="13" fill="#262626" text-anchor="middle" font-weight="bold" >Magenta</text>
<rect x="947.8000000000001" y="929.5" width="155" height="80" rx="4" fill="url(#btn)"/>
<rect x="953.8000000000001" y="936" width="142.5" height="45" rx="4" fill="#bdbd00" stroke="rgba(0,0,0,0.25)" stroke-width="1.2"/>
<text x="1025.3000000000002" y="999.5" font-size="13" fill="#262626" text-anchor="middle" font-weight="bold" >Yellow</text>
<defs><linearGradient id="sel" x1="0" x2="0" y1="0" y2="1"><stop offset="0" stop-color="#1e1e1e"/><stop offset="1" stop-color="#383838"/></linearGradient></defs>
<rect x="1106" y="930" width="155.5" height="80" rx="4" fill="url(#sel)"/>
<rect x="1112.5" y="935.5" width="143" height="45" rx="4" fill="#ffffff"/>
<text x="1183.5" y="999.5" font-size="13" fill="#f4f4f4" text-anchor="middle" font-weight="bold" >100W</text>
<rect x="1265" y="929.3" width="60.5" height="80" rx="4" fill="url(#btn2)"/>
<line x1="1265" y1="952" x2="1325.5" y2="952" stroke="#3a3a3a" stroke-width="1.5" />
<circle cx="1295.3" cy="940.5" r="9.5" fill="url(#ico)"/><path d="M1289 944.5 L1295.3 938 L1301.6 944.5 Z" fill="#2a2a2a"/>
<rect x="1277" y="961.5" width="36" height="35.5" rx="5" fill="#a8a8a8" stroke="#222" stroke-width="3"/>
<rect x="1286.6" y="971" width="17.3" height="17" fill="#050505"/>
<rect x="1326.2" y="929.3" width="58.299999999999955" height="37.5" fill="url(#btn2)"/>
<rect x="1385.5" y="929.3" width="54.799999999999955" height="37.5" fill="url(#btn2)"/>
<rect x="1441.3" y="929.3" width="55.200000000000045" height="37.5" fill="url(#btn2)"/>
<rect x="1497.5" y="929.3" width="55.5" height="37.5" fill="url(#btn2)"/>
<rect x="1554" y="929.3" width="54.700000000000045" height="37.5" fill="url(#btn2)"/>
<circle cx="1355" cy="948" r="12.3" fill="url(#ico)"/>
<circle cx="1412.5" cy="948" r="12.3" fill="url(#ico)"/>
<circle cx="1468.6" cy="948" r="12.3" fill="url(#ico)"/>
<circle cx="1525.3" cy="948" r="12.3" fill="url(#ico)"/>
<circle cx="1581" cy="948" r="12.3" fill="url(#ico)"/>
<rect x="1350" y="943" width="10" height="10" fill="#2a2a2a"/>
<path d="M1409 941.5 L1418.5 948.5 L1409 955.5 Z" fill="#2a2a2a"/>
<text x="1468.6" y="954" font-size="15" font-weight="bold" fill="#2a2a2a" text-anchor="middle">[··]</text>
<text x="1525.3" y="955" font-size="20" font-weight="bold" fill="#2a2a2a" text-anchor="middle">∞</text>
<path d="M1575 946 A6.5 6.5 0 0 1 1587 944 M1587 950 A6.5 6.5 0 0 1 1575 952" fill="none" stroke="#2a2a2a" stroke-width="2.6"/><path d="M1584 941 L1589 945.5 L1583 947 Z M1578 955 L1573 950.5 L1579 949 Z" fill="#2a2a2a"/>
<rect x="1326.7" y="968" width="169.3" height="40" fill="url(#btn2)"/>
<rect x="1497.5" y="968" width="166" height="40" fill="url(#btn2)"/>
<circle cx="1365" cy="987" r="12" fill="url(#ico)"/><circle cx="1631" cy="987" r="12" fill="url(#ico)"/>
<text x="1365" y="994" font-size="20" font-weight="bold" fill="#2a2a2a" text-anchor="middle">«</text>
<text x="1631" y="994" font-size="20" font-weight="bold" fill="#2a2a2a" text-anchor="middle">»</text>
<text x="1398.8" y="996.5" font-size="26" fill="#333333" text-anchor="start" font-weight="bold" textLength="62.6" lengthAdjust="spacingAndGlyphs">Back</text>
<text x="1531" y="996.5" font-size="26" fill="#333333" text-anchor="start" font-weight="bold" textLength="63" lengthAdjust="spacingAndGlyphs">Next</text>
<g stroke="#e20808" stroke-width="7.2"><line x1="1636.2" y1="930.3" x2="1636.2" y2="963.3"/><line x1="1621.9" y1="938.55" x2="1650.5" y2="955.05"/><line x1="1621.9" y1="955.05" x2="1650.5" y2="938.55"/></g>
<defs><linearGradient id="tb" x1="0" x2="0" y1="0" y2="1"><stop offset="0" stop-color="#5e5e5e"/><stop offset="1" stop-color="#6c6c6c"/></linearGradient>
<linearGradient id="tb2" x1="0" x2="0" y1="0" y2="1"><stop offset="0" stop-color="#7a7a7a"/><stop offset="1" stop-color="#565656"/></linearGradient>
<linearGradient id="dd" x1="0" x2="0" y1="0" y2="1"><stop offset="0" stop-color="#4c4c4c"/><stop offset="1" stop-color="#707070"/></linearGradient></defs>
<path d="M1057 0 L1227 0 Q1232 0 1232 5 L1232 37 L1054 37 L1054 3 Q1054 0 1057 0 Z" fill="url(#tb)"/>
<path d="M1057 0 L1061.5 0 L1061.5 37 L1054 37 L1054 3 Q1054 0 1057 0 Z" fill="#12d012"/>
<line x1="1187.8" y1="3" x2="1187.8" y2="37" stroke="#3c3c3c" stroke-width="1.5" />
<text x="1064.7" y="13.5" font-size="13" fill="#ececec" text-anchor="start" font-weight="normal" stroke="#ececec" stroke-width="0.35" textLength="81" lengthAdjust="spacingAndGlyphs">X-Rite i1Pro 3</text>
<text x="1064.7" y="32.6" font-size="13" fill="#ececec" text-anchor="start" font-weight="normal" stroke="#ececec" stroke-width="0.35" textLength="70" lengthAdjust="spacingAndGlyphs">Direct View</text>
<circle cx="1163.6" cy="18.4" r="11.5" fill="url(#dd)"/><path d="M1158.1 15.899999999999999 L1169.1 15.899999999999999 L1163.6 21.9 Z" fill="#f4f4f4"/>
<circle cx="1213.4" cy="18.4" r="16" fill="#0000ee" stroke="#e8e8ff" stroke-width="1.2"/>
<text x="1213.4" y="23" font-size="12" fill="#ffffff" text-anchor="middle" font-weight="normal" stroke="#ffffff" stroke-width="0.35" >711</text>
<path d="M1243 0 L1396.5 0 Q1401.5 0 1401.5 5 L1401.5 37 L1240 37 L1240 3 Q1240 0 1243 0 Z" fill="url(#tb)"/>
<path d="M1243 0 L1247.5 0 L1247.5 37 L1240 37 L1240 3 Q1240 0 1243 0 Z" fill="#12d012"/>
<text x="1251" y="14" font-size="13" fill="#ececec" text-anchor="start" font-weight="normal" stroke="#ececec" stroke-width="0.35" textLength="80" lengthAdjust="spacingAndGlyphs">Mobile Forge</text>
<circle cx="1382" cy="18.4" r="11.5" fill="url(#dd)"/><path d="M1376.5 15.899999999999999 L1387.5 15.899999999999999 L1382 21.9 Z" fill="#f4f4f4"/>
<path d="M1413 0 L1584 0 Q1589 0 1589 5 L1589 37 L1410 37 L1410 3 Q1410 0 1413 0 Z" fill="url(#tb)"/>
<path d="M1413 0 L1417.5 0 L1417.5 37 L1410 37 L1410 3 Q1410 0 1413 0 Z" fill="#e0e000"/>
<text x="1421.4" y="14" font-size="13" fill="#ececec" text-anchor="start" font-weight="normal" stroke="#ececec" stroke-width="0.35" textLength="131" lengthAdjust="spacingAndGlyphs">Direct Display Control</text>
<circle cx="1569" cy="18.4" r="11.5" fill="url(#dd)"/><path d="M1563.5 15.899999999999999 L1574.5 15.899999999999999 L1569 21.9 Z" fill="#f4f4f4"/>
<rect x="1593.5" y="0.6" width="41" height="34" rx="4.5" fill="url(#tb2)" stroke="#c8c8c8" stroke-width="1.2"/>
<rect x="1636" y="0.6" width="40" height="34" rx="4.5" fill="url(#tb2)" stroke="#c8c8c8" stroke-width="1.2"/>
<circle cx="1613.9" cy="17.4" r="12" fill="url(#dd)"/><circle cx="1652.7" cy="17.4" r="12" fill="url(#dd)"/>
<path d="M1612.55,11.35 L1612.76,9.28 L1615.04,9.28 L1615.25,11.35 L1617.22,12.16 L1618.83,10.85 L1620.45,12.47 L1619.14,14.08 L1619.95,16.05 L1622.02,16.26 L1622.02,18.54 L1619.95,18.75 L1619.14,20.72 L1620.45,22.33 L1618.83,23.95 L1617.22,22.64 L1615.25,23.45 L1615.04,25.52 L1612.76,25.52 L1612.55,23.45 L1610.58,22.64 L1608.97,23.95 L1607.35,22.33 L1608.66,20.72 L1607.85,18.75 L1605.78,18.54 L1605.78,16.26 L1607.85,16.05 L1608.66,14.08 L1607.35,12.47 L1608.97,10.85 L1610.58,12.16 Z M1617.7,17.4 A3.8 3.8 0 1 0 1610.1,17.4 A3.8 3.8 0 1 0 1617.7,17.4 Z" fill="#dadada" fill-rule="evenodd"/>
<path d="M1649 17 L1656 10 L1656 23 Z" fill="#f4f4f4"/></svg>
<div class="a" style="left:1663px;top:37px;width:5px;height:890px;background:linear-gradient(90deg,rgba(20,20,20,0.6),#161616);"></div>
</body></html>
